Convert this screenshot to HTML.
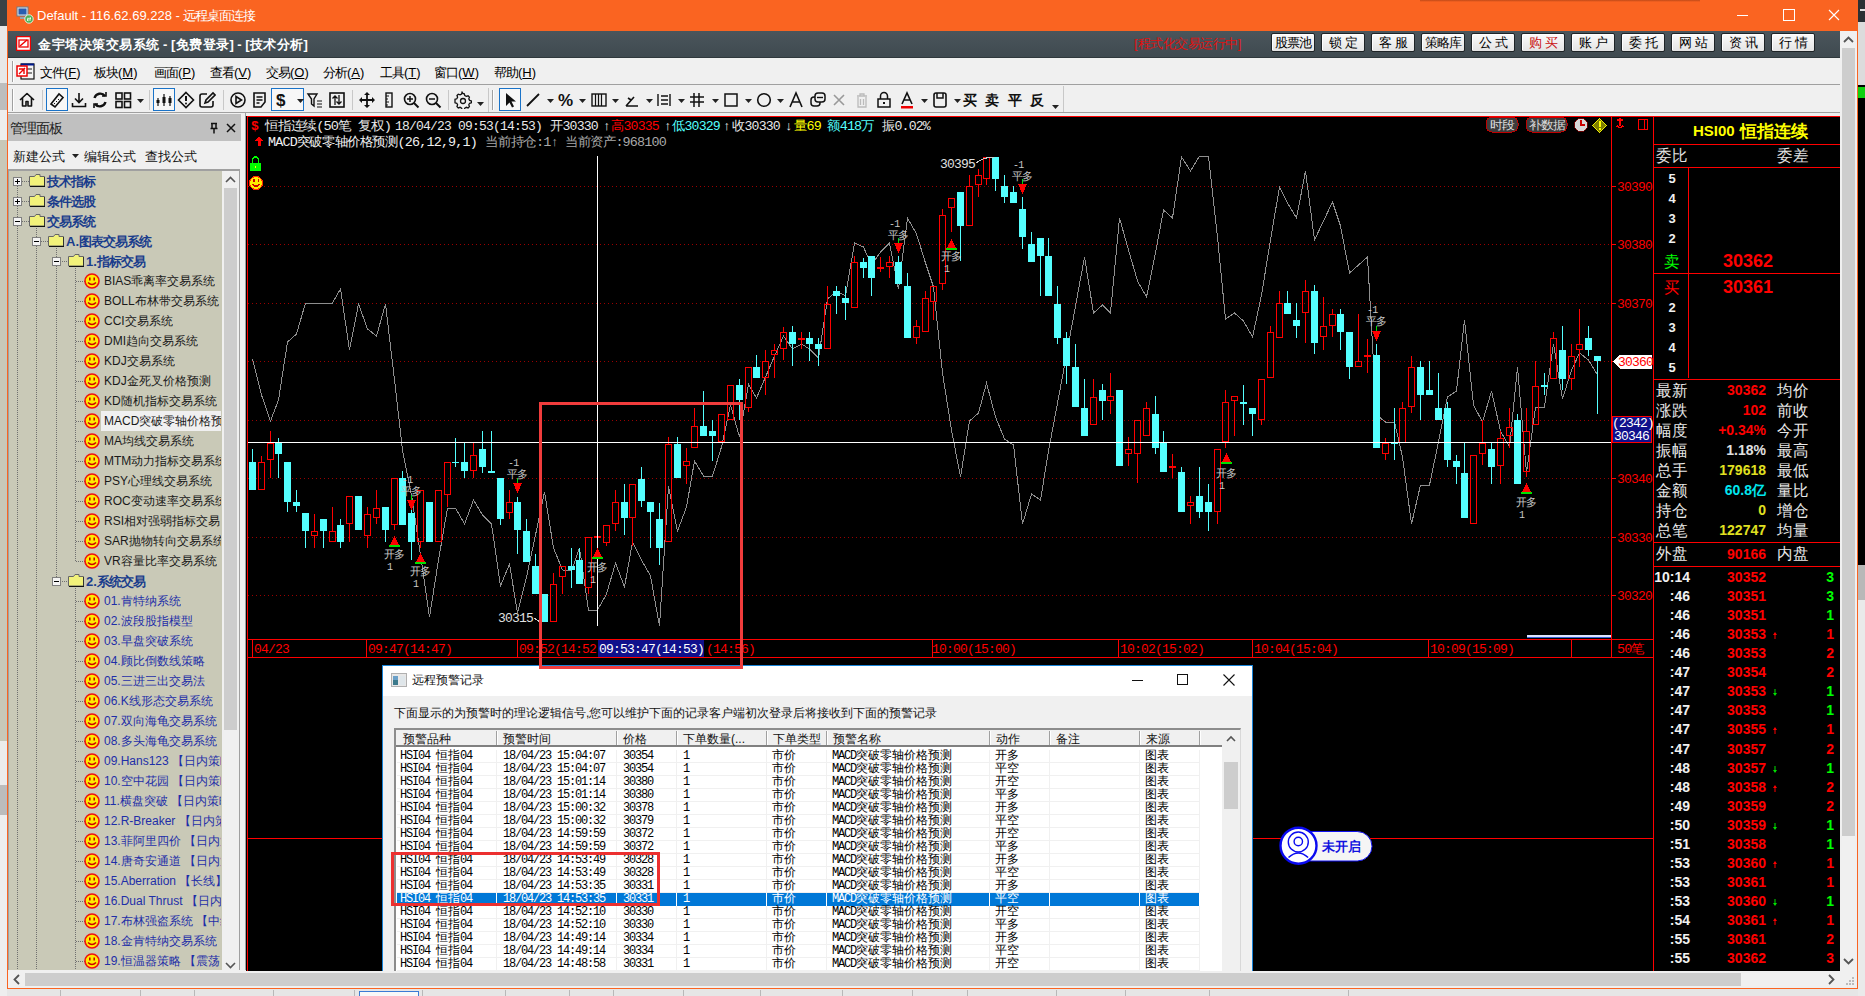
<!DOCTYPE html><html><head><meta charset="utf-8"><style>
html,body{margin:0;padding:0;}
body{width:1865px;height:996px;overflow:hidden;position:relative;background:#f0f0f0;font-family:"Liberation Sans",sans-serif;}
.a{position:absolute;}
.t{white-space:nowrap;}
.c{display:inline-block;text-align:center;letter-spacing:0;}
svg text{font-family:"Liberation Mono",monospace;}
</style></head><body>
<div class="a" style="left:0px;top:0px;width:7px;height:26px;background:#3a4246;"></div>
<div class="a" style="left:0px;top:26px;width:7px;height:57px;background:#e8e8e8;"></div>
<div class="a" style="left:0px;top:83px;width:7px;height:27px;background:#bdbdbd;"></div>
<div class="a" style="left:0px;top:110px;width:7px;height:30px;background:#eeeeee;"></div>
<div class="a" style="left:0px;top:140px;width:7px;height:601px;background:#c8c8b8;"></div>
<div class="a" style="left:0px;top:741px;width:7px;height:44px;background:#ececec;"></div>
<div class="a" style="left:0px;top:785px;width:7px;height:30px;background:#bcbcbc;"></div>
<div class="a" style="left:0px;top:815px;width:7px;height:181px;background:#eeeeee;"></div>
<div class="a" style="left:1858px;top:0px;width:7px;height:22px;background:#2a3034;"></div>
<div class="a" style="left:1860px;top:9px;width:5px;height:2px;background:#e0e0e0;"></div>
<div class="a" style="left:1858px;top:22px;width:7px;height:63px;background:#dcdcdc;"></div>
<div class="a" style="left:1858px;top:85px;width:7px;height:480px;background:#000;"></div>
<div class="a" style="left:1858px;top:87px;width:7px;height:11px;background:#10d010;"></div>
<div class="a" style="left:1858px;top:565px;width:7px;height:35px;background:#b8b8b8;"></div>
<div class="a" style="left:1858px;top:600px;width:7px;height:396px;background:#eaeaea;"></div>
<div class="a" style="left:7px;top:0px;width:1851px;height:31px;background:#fa6421;"></div>
<div class="a" style="left:7px;top:31px;width:1px;height:958px;background:#fa6421;"></div>
<div class="a" style="left:1857px;top:31px;width:1px;height:958px;background:#fa6421;"></div>
<div class="a" style="left:7px;top:988px;width:1851px;height:1px;background:#fa6421;"></div>
<div class="a" style="left:7px;top:989px;width:1851px;height:7px;background:#e6e6e6;"></div>
<div class="a" style="left:8px;top:31px;width:1832px;height:27px;background:linear-gradient(#4b555b,#3f4a50);border-bottom:1px solid #2f383c;box-sizing:border-box"></div>
<div class="a" style="left:8px;top:58px;width:1832px;height:27px;background:#f0f0f0;"></div>
<div class="a" style="left:8px;top:84px;width:1832px;height:1px;background:#a0a0a0;"></div>
<div class="a" style="left:8px;top:85px;width:1832px;height:28px;background:#f0f0f0;"></div>
<div class="a" style="left:8px;top:112px;width:1832px;height:1px;background:#a0a0a0;"></div>
<div class="a" style="left:8px;top:113px;width:238px;height:857px;background:#f0f0f0;"></div>
<div class="a" style="left:8px;top:114px;width:233px;height:27px;background:#c0c0c0;"></div>
<div class="a" style="left:8px;top:169px;width:232px;height:801px;background:#a0a0a0;"></div>
<div class="a" style="left:9px;top:171px;width:213px;height:799px;background:#c9c9b7;"></div>
<div class="a" style="left:222px;top:171px;width:17px;height:799px;background:#f0f0f0;"></div>
<div class="a" style="left:224px;top:188px;width:13px;height:540px;background:#cdcdcd;"></div>
<div class="a" style="left:246px;top:116px;width:1594px;height:855px;background:#000;"></div>
<div class="a" style="left:1840px;top:31px;width:17px;height:940px;background:#f0f0f0;"></div>
<div class="a" style="left:1842px;top:48px;width:13px;height:788px;background:#cdcdcd;"></div>
<div class="a" style="left:8px;top:971px;width:1849px;height:17px;background:#f0f0f0;"></div>
<div class="a" style="left:25px;top:973px;width:1716px;height:13px;background:#cdcdcd;"></div>
<svg class="a" style="left:16px;top:6px" width="18" height="18" viewBox="0 0 18 18">
<rect x="1" y="1" width="11" height="9" fill="#dfe6ee" stroke="#6d7c8a"/><rect x="2.5" y="2.5" width="8" height="6" fill="#2a5db0"/>
<rect x="4" y="11" width="6" height="2" fill="#9aa4ad"/>
<circle cx="13" cy="13" r="4.2" fill="#4caf50" stroke="#fff" stroke-width="0.8"/><path d="M11 12.3h4M13.8 11.3l1.2 1-1.2 1M15 14h-4M12.2 13l-1.2 1 1.2 1" stroke="#fff" stroke-width="0.8" fill="none"/>
</svg>
<div class="a t" style="top:6.5px;height:17px;line-height:17px;font-size:13px;color:#fff;font-weight:normal;font-family:'Liberation Sans',sans-serif;left:37px;">Default - 116.62.69.228 - <span class="c" style="width:12px">远</span><span class="c" style="width:12px">程</span><span class="c" style="width:12px">桌</span><span class="c" style="width:12px">面</span><span class="c" style="width:12px">连</span><span class="c" style="width:12px">接</span></div>
<div class="a" style="left:1737px;top:15px;width:11px;height:1px;background:#fff"></div>
<div class="a" style="left:1783px;top:9px;width:10px;height:10px;border:1px solid #fff"></div>
<svg class="a" style="left:1828px;top:9px" width="12" height="12" viewBox="0 0 12 12"><path d="M1 1L11 11M11 1L1 11" stroke="#fff" stroke-width="1.1"/></svg>
<div class="a" style="left:1420px;top:0;width:280px;height:2px;background:linear-gradient(#c04a18,#fa6421)"></div>
<svg class="a" style="left:16px;top:36px" width="15" height="15" viewBox="0 0 15 15"><rect x="0.5" y="0.5" width="14" height="14" fill="#fff" stroke="#e00" stroke-width="1.5"/><rect x="3" y="4" width="9" height="7" fill="none" stroke="#e00" stroke-width="1.3"/><path d="M4 10L11 4" stroke="#e00" stroke-width="1.5"/></svg>
<div class="a t" style="top:35.5px;height:17px;line-height:17px;font-size:13px;color:#fff;font-weight:bold;font-family:'Liberation Sans',sans-serif;left:38px;"><span class="c" style="width:13.5px">金</span><span class="c" style="width:13.5px">宇</span><span class="c" style="width:13.5px">塔</span><span class="c" style="width:13.5px">决</span><span class="c" style="width:13.5px">策</span><span class="c" style="width:13.5px">交</span><span class="c" style="width:13.5px">易</span><span class="c" style="width:13.5px">系</span><span class="c" style="width:13.5px">统</span> - [<span class="c" style="width:13.5px">免</span><span class="c" style="width:13.5px">费</span><span class="c" style="width:13.5px">登</span><span class="c" style="width:13.5px">录</span>] - [<span class="c" style="width:13.5px">技</span><span class="c" style="width:13.5px">术</span><span class="c" style="width:13.5px">分</span><span class="c" style="width:13.5px">析</span>]</div>
<div class="a t" style="top:34.5px;height:17px;line-height:17px;font-size:13px;color:#e01010;font-weight:normal;font-family:'Liberation Sans',sans-serif;left:1134px;">[<span class="c" style="width:12.5px">程</span><span class="c" style="width:12.5px">式</span><span class="c" style="width:12.5px">化</span><span class="c" style="width:12.5px">交</span><span class="c" style="width:12.5px">易</span><span class="c" style="width:12.5px">运</span><span class="c" style="width:12.5px">行</span><span class="c" style="width:12.5px">中</span>]</div>
<div class="a t" style="left:1271px;top:33px;width:44px;height:19px;box-sizing:border-box;background:linear-gradient(#fbfbfb,#e4e4e4);border:1px solid #1e2326;border-radius:2px;box-shadow:inset 1px 1px 0 #fff;text-align:center;line-height:17px;font-size:13px;color:#000;font-family:'Liberation Sans',sans-serif"><span class="c" style="width:12px">股</span><span class="c" style="width:12px">票</span><span class="c" style="width:12px">池</span></div>
<div class="a t" style="left:1321px;top:33px;width:44px;height:19px;box-sizing:border-box;background:linear-gradient(#fbfbfb,#e4e4e4);border:1px solid #1e2326;border-radius:2px;box-shadow:inset 1px 1px 0 #fff;text-align:center;line-height:17px;font-size:13px;color:#000;font-family:'Liberation Sans',sans-serif"><span class="c" style="width:12px">锁</span> <span class="c" style="width:12px">定</span></div>
<div class="a t" style="left:1371px;top:33px;width:44px;height:19px;box-sizing:border-box;background:linear-gradient(#fbfbfb,#e4e4e4);border:1px solid #1e2326;border-radius:2px;box-shadow:inset 1px 1px 0 #fff;text-align:center;line-height:17px;font-size:13px;color:#000;font-family:'Liberation Sans',sans-serif"><span class="c" style="width:12px">客</span> <span class="c" style="width:12px">服</span></div>
<div class="a t" style="left:1421px;top:33px;width:44px;height:19px;box-sizing:border-box;background:linear-gradient(#fbfbfb,#e4e4e4);border:1px solid #1e2326;border-radius:2px;box-shadow:inset 1px 1px 0 #fff;text-align:center;line-height:17px;font-size:13px;color:#000;font-family:'Liberation Sans',sans-serif"><span class="c" style="width:12px">策</span><span class="c" style="width:12px">略</span><span class="c" style="width:12px">库</span></div>
<div class="a t" style="left:1471px;top:33px;width:44px;height:19px;box-sizing:border-box;background:linear-gradient(#fbfbfb,#e4e4e4);border:1px solid #1e2326;border-radius:2px;box-shadow:inset 1px 1px 0 #fff;text-align:center;line-height:17px;font-size:13px;color:#000;font-family:'Liberation Sans',sans-serif"><span class="c" style="width:12px">公</span> <span class="c" style="width:12px">式</span></div>
<div class="a t" style="left:1521px;top:33px;width:44px;height:19px;box-sizing:border-box;background:linear-gradient(#fbfbfb,#e4e4e4);border:1px solid #1e2326;border-radius:2px;box-shadow:inset 1px 1px 0 #fff;text-align:center;line-height:17px;font-size:13px;color:#c81010;font-family:'Liberation Sans',sans-serif"><span class="c" style="width:12px">购</span> <span class="c" style="width:12px">买</span></div>
<div class="a t" style="left:1571px;top:33px;width:44px;height:19px;box-sizing:border-box;background:linear-gradient(#fbfbfb,#e4e4e4);border:1px solid #1e2326;border-radius:2px;box-shadow:inset 1px 1px 0 #fff;text-align:center;line-height:17px;font-size:13px;color:#000;font-family:'Liberation Sans',sans-serif"><span class="c" style="width:12px">账</span> <span class="c" style="width:12px">户</span></div>
<div class="a t" style="left:1621px;top:33px;width:44px;height:19px;box-sizing:border-box;background:linear-gradient(#fbfbfb,#e4e4e4);border:1px solid #1e2326;border-radius:2px;box-shadow:inset 1px 1px 0 #fff;text-align:center;line-height:17px;font-size:13px;color:#000;font-family:'Liberation Sans',sans-serif"><span class="c" style="width:12px">委</span> <span class="c" style="width:12px">托</span></div>
<div class="a t" style="left:1671px;top:33px;width:44px;height:19px;box-sizing:border-box;background:linear-gradient(#fbfbfb,#e4e4e4);border:1px solid #1e2326;border-radius:2px;box-shadow:inset 1px 1px 0 #fff;text-align:center;line-height:17px;font-size:13px;color:#000;font-family:'Liberation Sans',sans-serif"><span class="c" style="width:12px">网</span> <span class="c" style="width:12px">站</span></div>
<div class="a t" style="left:1721px;top:33px;width:44px;height:19px;box-sizing:border-box;background:linear-gradient(#fbfbfb,#e4e4e4);border:1px solid #1e2326;border-radius:2px;box-shadow:inset 1px 1px 0 #fff;text-align:center;line-height:17px;font-size:13px;color:#000;font-family:'Liberation Sans',sans-serif"><span class="c" style="width:12px">资</span> <span class="c" style="width:12px">讯</span></div>
<div class="a t" style="left:1771px;top:33px;width:44px;height:19px;box-sizing:border-box;background:linear-gradient(#fbfbfb,#e4e4e4);border:1px solid #1e2326;border-radius:2px;box-shadow:inset 1px 1px 0 #fff;text-align:center;line-height:17px;font-size:13px;color:#000;font-family:'Liberation Sans',sans-serif"><span class="c" style="width:12px">行</span> <span class="c" style="width:12px">情</span></div>
<div class="a" style="left:12px;top:61px;width:1px;height:21px;background:#a0a0a0;"></div>
<div class="a" style="left:13px;top:61px;width:1px;height:21px;background:#fff;"></div>
<svg class="a" style="left:16px;top:62px" width="20" height="19" viewBox="0 0 20 19"><rect x="5" y="2" width="13" height="15" fill="#f4f4f4" stroke="#111" stroke-width="1.2"/><rect x="5" y="1.5" width="13" height="2" fill="#001a8c"/><rect x="11" y="6" width="5" height="2" fill="#888"/><rect x="11" y="10" width="5" height="2" fill="#888"/><rect x="1" y="4" width="10" height="10" fill="#fff" stroke="#e00" stroke-width="1.5"/><path d="M3 12L9 6M3 7h5v5" stroke="#e00" stroke-width="1.4" fill="none"/></svg>
<div class="a t" style="top:63.5px;height:17px;line-height:17px;font-size:13px;color:#000;font-weight:normal;font-family:'Liberation Sans',sans-serif;left:40px;"><span class="c" style="width:12px">文</span><span class="c" style="width:12px">件</span>(<u>F</u>)</div>
<div class="a t" style="top:63.5px;height:17px;line-height:17px;font-size:13px;color:#000;font-weight:normal;font-family:'Liberation Sans',sans-serif;left:94px;"><span class="c" style="width:12px">板</span><span class="c" style="width:12px">块</span>(<u>M</u>)</div>
<div class="a t" style="top:63.5px;height:17px;line-height:17px;font-size:13px;color:#000;font-weight:normal;font-family:'Liberation Sans',sans-serif;left:154px;"><span class="c" style="width:12px">画</span><span class="c" style="width:12px">面</span>(<u>P</u>)</div>
<div class="a t" style="top:63.5px;height:17px;line-height:17px;font-size:13px;color:#000;font-weight:normal;font-family:'Liberation Sans',sans-serif;left:210px;"><span class="c" style="width:12px">查</span><span class="c" style="width:12px">看</span>(<u>V</u>)</div>
<div class="a t" style="top:63.5px;height:17px;line-height:17px;font-size:13px;color:#000;font-weight:normal;font-family:'Liberation Sans',sans-serif;left:266px;"><span class="c" style="width:12px">交</span><span class="c" style="width:12px">易</span>(<u>O</u>)</div>
<div class="a t" style="top:63.5px;height:17px;line-height:17px;font-size:13px;color:#000;font-weight:normal;font-family:'Liberation Sans',sans-serif;left:323px;"><span class="c" style="width:12px">分</span><span class="c" style="width:12px">析</span>(<u>A</u>)</div>
<div class="a t" style="top:63.5px;height:17px;line-height:17px;font-size:13px;color:#000;font-weight:normal;font-family:'Liberation Sans',sans-serif;left:380px;"><span class="c" style="width:12px">工</span><span class="c" style="width:12px">具</span>(<u>T</u>)</div>
<div class="a t" style="top:63.5px;height:17px;line-height:17px;font-size:13px;color:#000;font-weight:normal;font-family:'Liberation Sans',sans-serif;left:434px;"><span class="c" style="width:12px">窗</span><span class="c" style="width:12px">口</span>(<u>W</u>)</div>
<div class="a t" style="top:63.5px;height:17px;line-height:17px;font-size:13px;color:#000;font-weight:normal;font-family:'Liberation Sans',sans-serif;left:494px;"><span class="c" style="width:12px">帮</span><span class="c" style="width:12px">助</span>(<u>H</u>)</div>
<div class="a" style="left:12px;top:89px;width:1px;height:22px;background:#a0a0a0;"></div>
<div class="a" style="left:13px;top:89px;width:1px;height:22px;background:#fff;"></div>
<svg class="a" style="left:18.0px;top:91.0px" width="18" height="18" viewBox="0 0 18 18"><path d="M2 9L9 2.5L16 9M4.5 7v8h3.5v-4.5h2V15h3.5V7" stroke="#111" stroke-width="1.6" fill="none" stroke-linejoin="round"/></svg>
<div class="a" style="left:42px;top:90px;width:1px;height:20px;background:#c8c8c8;"></div>
<div class="a" style="left:46px;top:88px;width:22px;height:23px;box-sizing:border-box;border:1px solid #1a73c8;background:#f7f7f7"></div>
<svg class="a" style="left:48.0px;top:91.0px" width="18" height="18" viewBox="0 0 18 18"><path d="M3 13L11 3l4 3.5L7 16z" stroke="#111" stroke-width="1.6" fill="none"/><path d="M6 12l1 1M8 10l1 1M10 8l1 1" stroke="#111" stroke-width="1"/></svg>
<svg class="a" style="left:70.0px;top:91.0px" width="18" height="18" viewBox="0 0 18 18"><path d="M9 2v9M5 7.5l4 4 4-4M2.5 12v3.5h13V12" stroke="#111" stroke-width="1.6" fill="none"/></svg>
<svg class="a" style="left:91.0px;top:91.0px" width="18" height="18" viewBox="0 0 18 18"><path d="M14 5A6 6 0 0 0 3.5 7M4 13A6 6 0 0 0 14.5 11" stroke="#111" stroke-width="2.4" fill="none"/><path d="M11 5h4V1M7 13H3v4" stroke="#111" stroke-width="1.6" fill="none"/></svg>
<svg class="a" style="left:114.0px;top:91.0px" width="18" height="18" viewBox="0 0 18 18"><rect x="2" y="2" width="6" height="6" stroke="#111" stroke-width="1.6" fill="none"/><rect x="10.5" y="2" width="6" height="6" stroke="#111" stroke-width="1.6" fill="none"/><rect x="2" y="10.5" width="6" height="6" stroke="#111" stroke-width="1.6" fill="none"/><rect x="10.5" y="10.5" width="6" height="6" stroke="#111" stroke-width="1.6" fill="none"/></svg>
<svg class="a" style="left:137px;top:99px" width="7" height="4"><path d="M0 0h7L3.5 4z" fill="#222"/></svg>
<div class="a" style="left:149px;top:90px;width:1px;height:20px;background:#c8c8c8;"></div>
<div class="a" style="left:153px;top:88px;width:22px;height:23px;box-sizing:border-box;border:1px solid #1a73c8;background:#f7f7f7"></div>
<svg class="a" style="left:155.0px;top:91.0px" width="18" height="18" viewBox="0 0 18 18"><path d="M3 7v8M9 3v12M15 5v10" stroke="#111" stroke-width="1.2"/><rect x="1.5" y="9" width="3" height="3" fill="#111"/><rect x="7.5" y="6" width="3" height="6" fill="#111"/><rect x="13.5" y="7" width="3" height="5" fill="#111"/></svg>
<svg class="a" style="left:177.0px;top:91.0px" width="18" height="18" viewBox="0 0 18 18"><path d="M9 1.5L16.5 9L9 16.5L1.5 9z" stroke="#111" stroke-width="1.6" fill="none"/><path d="M9 5v5" stroke="#111" stroke-width="2"/><circle cx="9" cy="12.5" r="1" fill="#111"/></svg>
<svg class="a" style="left:198.0px;top:91.0px" width="18" height="18" viewBox="0 0 18 18"><path d="M9 3H4a2 2 0 0 0-2 2v9a2 2 0 0 0 2 2h9a2 2 0 0 0 2-2v-4" stroke="#111" stroke-width="1.6" fill="none"/><path d="M7 12l1-3 7-7 2 2-7 7z" stroke="#111" stroke-width="1.6" fill="none"/></svg>
<div class="a" style="left:223px;top:90px;width:1px;height:20px;background:#c8c8c8;"></div>
<svg class="a" style="left:229.0px;top:91.0px" width="18" height="18" viewBox="0 0 18 18"><circle cx="9" cy="9" r="7" stroke="#111" stroke-width="1.6" fill="none"/><path d="M7 5.5v7l5.5-3.5z" stroke="#111" stroke-width="1.6" fill="none"/></svg>
<svg class="a" style="left:251.0px;top:91.0px" width="18" height="18" viewBox="0 0 18 18"><path d="M3 2h11v9l-4 5H3z" stroke="#111" stroke-width="1.6" fill="none"/><path d="M5.5 6h6M5.5 9h6M5.5 12h3" stroke="#111" stroke-width="1.3"/></svg>
<div class="a" style="left:271px;top:88px;width:33px;height:23px;box-sizing:border-box;border:1px solid #1a73c8;background:#f7f7f7"></div>
<div class="a t" style="top:89.5px;height:21px;line-height:21px;font-size:17px;color:#111;font-weight:bold;font-family:'Liberation Sans',sans-serif;left:276px;">$</div>
<svg class="a" style="left:297px;top:99px" width="7" height="4"><path d="M0 0h7L3.5 4z" fill="#222"/></svg>
<svg class="a" style="left:306.0px;top:91.0px" width="18" height="18" viewBox="0 0 18 18"><path d="M2 3h9L8 8v7L5.5 13V8z" stroke="#111" stroke-width="1.4" fill="none"/><path d="M11 10h5M11 13h5M11 16h5" stroke="#111" stroke-width="1.2"/></svg>
<svg class="a" style="left:328.0px;top:91.0px" width="18" height="18" viewBox="0 0 18 18"><rect x="2" y="2" width="14" height="14" stroke="#111" stroke-width="1.6" fill="none"/><path d="M7 5v9M4.5 7.5L7 5l2.5 2.5M11 4v9M8.5 10.5L11 13l2.5-2.5" stroke="#111" stroke-width="1.3" fill="none"/></svg>
<div class="a" style="left:352px;top:90px;width:1px;height:20px;background:#c8c8c8;"></div>
<svg class="a" style="left:358.0px;top:91.0px" width="18" height="18" viewBox="0 0 18 18"><path d="M9 1l3 3H6zM9 17l3-3H6zM1 9l3-3v6zM17 9l-3-3v6z" fill="#111"/><path d="M9 3v12M3 9h12" stroke="#111" stroke-width="1.8"/></svg>
<svg class="a" style="left:380.0px;top:91.0px" width="18" height="18" viewBox="0 0 18 18"><rect x="6" y="2" width="6" height="14" stroke="#111" stroke-width="1.4" fill="none"/><path d="M6 5h3M6 8h2M6 11h3M6 14h2" stroke="#111" stroke-width="1"/></svg>
<svg class="a" style="left:402.0px;top:91.0px" width="18" height="18" viewBox="0 0 18 18"><circle cx="8" cy="8" r="5.5" stroke="#111" stroke-width="1.6" fill="none"/><path d="M12 12l4.5 4.5" stroke="#111" stroke-width="2"/><path d="M5 8h6M8 5v6" stroke="#111" stroke-width="1.5"/></svg>
<svg class="a" style="left:424.0px;top:91.0px" width="18" height="18" viewBox="0 0 18 18"><circle cx="8" cy="8" r="5.5" stroke="#111" stroke-width="1.6" fill="none"/><path d="M12 12l4.5 4.5" stroke="#111" stroke-width="2"/><path d="M5 8h6" stroke="#111" stroke-width="1.5"/></svg>
<div class="a" style="left:448px;top:90px;width:1px;height:20px;background:#c8c8c8;"></div>
<svg class="a" style="left:454.0px;top:91.0px" width="18" height="18" viewBox="0 0 18 18"><path d="M9 2.5l1.3 0.3 0.5 1.8 1.5 0.8 1.8-0.6 1.3 1.3-0.6 1.8 0.8 1.5 1.8 0.5v1.9l-1.8 0.5-0.8 1.5 0.6 1.8-1.3 1.3-1.8-0.6-1.5 0.8-0.5 1.8H8.1l-0.5-1.8-1.5-0.8-1.8 0.6-1.3-1.3 0.6-1.8-0.8-1.5-1.8-0.5V8.3l1.8-0.5 0.8-1.5-0.6-1.8 1.3-1.3 1.8 0.6 1.5-0.8 0.5-1.8z" stroke="#111" stroke-width="1.3" fill="none"/><circle cx="9" cy="10" r="2.5" stroke="#111" stroke-width="1.3" fill="none"/></svg>
<svg class="a" style="left:477px;top:102px" width="7" height="4"><path d="M0 0h7L3.5 4z" fill="#222"/></svg>
<div class="a" style="left:488px;top:88px;width:1px;height:24px;background:#c8c8c8;"></div>
<div class="a" style="left:492px;top:90px;width:1px;height:20px;background:#a0a0a0;"></div>
<div class="a" style="left:493px;top:90px;width:1px;height:20px;background:#fff;"></div>
<div class="a" style="left:499px;top:88px;width:22px;height:23px;box-sizing:border-box;border:1px solid #1a73c8;background:#f7f7f7"></div>
<svg class="a" style="left:501.0px;top:91.0px" width="18" height="18" viewBox="0 0 18 18"><path d="M5 2v13l3.5-3.5 2.5 5 2-1-2.5-5H15z" fill="#111"/></svg>
<svg class="a" style="left:524.0px;top:91.0px" width="18" height="18" viewBox="0 0 18 18"><path d="M3 15L15 3" stroke="#111" stroke-width="1.8"/></svg>
<svg class="a" style="left:547px;top:99px" width="7" height="4"><path d="M0 0h7L3.5 4z" fill="#222"/></svg>
<div class="a t" style="top:89.5px;height:21px;line-height:21px;font-size:17px;color:#111;font-weight:bold;font-family:'Liberation Sans',sans-serif;left:558px;">%</div>
<svg class="a" style="left:579px;top:99px" width="7" height="4"><path d="M0 0h7L3.5 4z" fill="#222"/></svg>
<svg class="a" style="left:590.0px;top:91.0px" width="18" height="18" viewBox="0 0 18 18"><rect x="2" y="3" width="14" height="12" stroke="#111" stroke-width="1.4" fill="none"/><path d="M5.5 3v12M8.5 3v12M11.5 3v12" stroke="#111" stroke-width="1.2"/></svg>
<svg class="a" style="left:612px;top:99px" width="7" height="4"><path d="M0 0h7L3.5 4z" fill="#222"/></svg>
<svg class="a" style="left:623.0px;top:91.0px" width="18" height="18" viewBox="0 0 18 18"><path d="M3 15h12M3 15l8-9M8 9l-3-2" stroke="#111" stroke-width="1.6" fill="none"/></svg>
<svg class="a" style="left:646px;top:99px" width="7" height="4"><path d="M0 0h7L3.5 4z" fill="#222"/></svg>
<svg class="a" style="left:655.0px;top:91.0px" width="18" height="18" viewBox="0 0 18 18"><path d="M3 3v12M15 3v12M6 5h7M6 9h7M6 13h7" stroke="#111" stroke-width="1.4"/></svg>
<svg class="a" style="left:678px;top:99px" width="7" height="4"><path d="M0 0h7L3.5 4z" fill="#222"/></svg>
<svg class="a" style="left:688.0px;top:91.0px" width="18" height="18" viewBox="0 0 18 18"><path d="M6 2v14M11 2v14M2 6h14M2 11h14" stroke="#111" stroke-width="1.5"/></svg>
<svg class="a" style="left:712px;top:99px" width="7" height="4"><path d="M0 0h7L3.5 4z" fill="#222"/></svg>
<svg class="a" style="left:722.0px;top:91.0px" width="18" height="18" viewBox="0 0 18 18"><rect x="3" y="3" width="12" height="12" stroke="#111" stroke-width="1.5" fill="none"/></svg>
<svg class="a" style="left:745px;top:99px" width="7" height="4"><path d="M0 0h7L3.5 4z" fill="#222"/></svg>
<svg class="a" style="left:755.0px;top:91.0px" width="18" height="18" viewBox="0 0 18 18"><circle cx="9" cy="9" r="6.3" stroke="#111" stroke-width="1.6" fill="none"/></svg>
<svg class="a" style="left:777px;top:99px" width="7" height="4"><path d="M0 0h7L3.5 4z" fill="#222"/></svg>
<svg class="a" style="left:787.0px;top:91.0px" width="18" height="18" viewBox="0 0 18 18"><path d="M3 16L9 2l6 14M5.5 11h7" stroke="#111" stroke-width="1.6" fill="none"/></svg>
<svg class="a" style="left:809.0px;top:91.0px" width="18" height="18" viewBox="0 0 18 18"><rect x="2" y="6" width="9" height="9" rx="3" stroke="#111" stroke-width="1.5" fill="none"/><rect x="6" y="2" width="10" height="9" rx="3" stroke="#111" stroke-width="1.5" fill="#f0f0f0"/><path d="M8 6.5h6" stroke="#111" stroke-width="1.4"/></svg>
<svg class="a" style="left:830.0px;top:91.0px" width="18" height="18" viewBox="0 0 18 18"><path d="M4 4l10 10M14 4L4 14" stroke="#999" stroke-width="1.6"/></svg>
<svg class="a" style="left:853.0px;top:91.0px" width="18" height="18" viewBox="0 0 18 18"><path d="M4 5h10M7 5V3h4v2M5 6v10h8V6M7.5 8v6M10.5 8v6" stroke="#bbb" stroke-width="1.3" fill="none"/></svg>
<svg class="a" style="left:875.0px;top:91.0px" width="18" height="18" viewBox="0 0 18 18"><rect x="3" y="8" width="12" height="8" stroke="#111" stroke-width="1.5" fill="none"/><path d="M5.5 8V5a3.5 3.5 0 0 1 7 0v3" stroke="#111" stroke-width="1.5" fill="none"/><rect x="8" y="11" width="2" height="2" fill="#111"/></svg>
<svg class="a" style="left:898.0px;top:91.0px" width="18" height="18" viewBox="0 0 18 18"><path d="M4 13L9 2l5 11M6 9h6" stroke="#111" stroke-width="1.6" fill="none"/><rect x="3" y="15" width="12" height="2.5" fill="#e00"/></svg>
<svg class="a" style="left:921px;top:99px" width="7" height="4"><path d="M0 0h7L3.5 4z" fill="#222"/></svg>
<svg class="a" style="left:931.0px;top:91.0px" width="18" height="18" viewBox="0 0 18 18"><rect x="3" y="2" width="12" height="14" rx="2" stroke="#111" stroke-width="1.6" fill="none"/><path d="M6 2v5h6V2" stroke="#111" stroke-width="1.5" fill="none"/></svg>
<svg class="a" style="left:954px;top:99px" width="7" height="4"><path d="M0 0h7L3.5 4z" fill="#222"/></svg>
<div class="a t" style="top:91.0px;height:18px;line-height:18px;font-size:14px;color:#111;font-weight:bold;font-family:'Liberation Sans',sans-serif;left:963px;"><span class="c" style="width:14px">买</span></div>
<div class="a t" style="top:91.0px;height:18px;line-height:18px;font-size:14px;color:#111;font-weight:bold;font-family:'Liberation Sans',sans-serif;left:985px;"><span class="c" style="width:14px">卖</span></div>
<div class="a t" style="top:91.0px;height:18px;line-height:18px;font-size:14px;color:#111;font-weight:bold;font-family:'Liberation Sans',sans-serif;left:1008px;"><span class="c" style="width:14px">平</span></div>
<div class="a t" style="top:91.0px;height:18px;line-height:18px;font-size:14px;color:#111;font-weight:bold;font-family:'Liberation Sans',sans-serif;left:1030px;"><span class="c" style="width:14px">反</span></div>
<svg class="a" style="left:1052px;top:103px" width="7" height="6"><path d="M0 1h7M0 2h7L3.5 6z" fill="#222"/></svg>
<div class="a" style="left:1063px;top:86px;width:1px;height:26px;background:#c8c8c8;"></div>
<div class="a t" style="top:119.0px;height:18px;line-height:18px;font-size:14px;color:#222;font-weight:normal;font-family:'Liberation Sans',sans-serif;left:10px;"><span class="c" style="width:13px">管</span><span class="c" style="width:13px">理</span><span class="c" style="width:13px">面</span><span class="c" style="width:13px">板</span></div>
<svg class="a" style="left:208px;top:122px" width="12" height="12" viewBox="0 0 12 12"><path d="M3 1.5h6M4 1.5v5M8 1.5v5M2.5 6.5h7M6 6.5v5" stroke="#111" stroke-width="1.5"/></svg>
<svg class="a" style="left:226px;top:123px" width="10" height="10" viewBox="0 0 10 10"><path d="M1 1l8 8M9 1L1 9" stroke="#111" stroke-width="1.5"/></svg>
<div class="a t" style="top:147.5px;height:17px;line-height:17px;font-size:13px;color:#111;font-weight:normal;font-family:'Liberation Sans',sans-serif;left:13px;"><span class="c" style="width:13px">新</span><span class="c" style="width:13px">建</span><span class="c" style="width:13px">公</span><span class="c" style="width:13px">式</span></div>
<svg class="a" style="left:72px;top:154px" width="7" height="4"><path d="M0 0h7L3.5 4z" fill="#222"/></svg>
<div class="a t" style="top:147.5px;height:17px;line-height:17px;font-size:13px;color:#111;font-weight:normal;font-family:'Liberation Sans',sans-serif;left:84px;"><span class="c" style="width:13px">编</span><span class="c" style="width:13px">辑</span><span class="c" style="width:13px">公</span><span class="c" style="width:13px">式</span></div>
<div class="a t" style="top:147.5px;height:17px;line-height:17px;font-size:13px;color:#111;font-weight:normal;font-family:'Liberation Sans',sans-serif;left:145px;"><span class="c" style="width:13px">查</span><span class="c" style="width:13px">找</span><span class="c" style="width:13px">公</span><span class="c" style="width:13px">式</span></div>
<div class="a" style="left:17px;top:186px;width:1px;height:784px;background:repeating-linear-gradient(180deg,#707070 0 1px,transparent 1px 2px)"></div>
<div class="a" style="left:22px;top:181px;width:7px;height:1px;background:repeating-linear-gradient(90deg,#707070 0 1px,transparent 1px 2px)"></div>
<div class="a" style="left:13px;top:177px;width:9px;height:9px;box-sizing:border-box;border:1px solid #808080;background:#f4f4f4"></div><div class="a" style="left:15px;top:181px;width:5px;height:1px;background:#000"></div><div class="a" style="left:17px;top:179px;width:1px;height:5px;background:#000"></div>
<svg class="a" style="left:29px;top:174px" width="16" height="13" viewBox="0 0 16 13"><path d="M0.5 2.5h5l1.5-2h4v2h4.5v9.5h-15z" fill="#f2f27a" stroke="#666" stroke-width="1"/><path d="M1 12.5h15V3" stroke="#111" stroke-width="1.2" fill="none"/></svg>
<div class="a t" style="top:172.5px;height:17px;line-height:17px;font-size:13px;color:#1a3d8c;font-weight:bold;font-family:'Liberation Sans',sans-serif;left:47px;"><span class="c" style="width:12px">技</span><span class="c" style="width:12px">术</span><span class="c" style="width:12px">指</span><span class="c" style="width:12px">标</span></div>
<div class="a" style="left:22px;top:201px;width:7px;height:1px;background:repeating-linear-gradient(90deg,#707070 0 1px,transparent 1px 2px)"></div>
<div class="a" style="left:13px;top:197px;width:9px;height:9px;box-sizing:border-box;border:1px solid #808080;background:#f4f4f4"></div><div class="a" style="left:15px;top:201px;width:5px;height:1px;background:#000"></div><div class="a" style="left:17px;top:199px;width:1px;height:5px;background:#000"></div>
<svg class="a" style="left:29px;top:194px" width="16" height="13" viewBox="0 0 16 13"><path d="M0.5 2.5h5l1.5-2h4v2h4.5v9.5h-15z" fill="#f2f27a" stroke="#666" stroke-width="1"/><path d="M1 12.5h15V3" stroke="#111" stroke-width="1.2" fill="none"/></svg>
<div class="a t" style="top:192.5px;height:17px;line-height:17px;font-size:13px;color:#1a3d8c;font-weight:bold;font-family:'Liberation Sans',sans-serif;left:47px;"><span class="c" style="width:12px">条</span><span class="c" style="width:12px">件</span><span class="c" style="width:12px">选</span><span class="c" style="width:12px">股</span></div>
<div class="a" style="left:22px;top:221px;width:7px;height:1px;background:repeating-linear-gradient(90deg,#707070 0 1px,transparent 1px 2px)"></div>
<div class="a" style="left:13px;top:217px;width:9px;height:9px;box-sizing:border-box;border:1px solid #808080;background:#f4f4f4"></div><div class="a" style="left:15px;top:221px;width:5px;height:1px;background:#000"></div>
<svg class="a" style="left:29px;top:214px" width="16" height="13" viewBox="0 0 16 13"><path d="M0.5 2.5h5l1.5-2h4v2h4.5v9.5h-15z" fill="#f2f27a" stroke="#666" stroke-width="1"/><path d="M1 12.5h15V3" stroke="#111" stroke-width="1.2" fill="none"/></svg>
<div class="a t" style="top:212.5px;height:17px;line-height:17px;font-size:13px;color:#1a3d8c;font-weight:bold;font-family:'Liberation Sans',sans-serif;left:47px;"><span class="c" style="width:12px">交</span><span class="c" style="width:12px">易</span><span class="c" style="width:12px">系</span><span class="c" style="width:12px">统</span></div>
<div class="a" style="left:36px;top:228px;width:1px;height:742px;background:repeating-linear-gradient(180deg,#707070 0 1px,transparent 1px 2px)"></div>
<div class="a" style="left:41px;top:241px;width:7px;height:1px;background:repeating-linear-gradient(90deg,#707070 0 1px,transparent 1px 2px)"></div>
<div class="a" style="left:32px;top:237px;width:9px;height:9px;box-sizing:border-box;border:1px solid #808080;background:#f4f4f4"></div><div class="a" style="left:34px;top:241px;width:5px;height:1px;background:#000"></div>
<svg class="a" style="left:48px;top:234px" width="16" height="13" viewBox="0 0 16 13"><path d="M0.5 2.5h5l1.5-2h4v2h4.5v9.5h-15z" fill="#f2f27a" stroke="#666" stroke-width="1"/><path d="M1 12.5h15V3" stroke="#111" stroke-width="1.2" fill="none"/></svg>
<div class="a t" style="top:232.5px;height:17px;line-height:17px;font-size:13px;color:#1a3d8c;font-weight:bold;font-family:'Liberation Sans',sans-serif;left:66px;">A.<span class="c" style="width:12px">图</span><span class="c" style="width:12px">表</span><span class="c" style="width:12px">交</span><span class="c" style="width:12px">易</span><span class="c" style="width:12px">系</span><span class="c" style="width:12px">统</span></div>
<div class="a" style="left:56px;top:248px;width:1px;height:333px;background:repeating-linear-gradient(180deg,#707070 0 1px,transparent 1px 2px)"></div>
<div class="a" style="left:60px;top:261px;width:8px;height:1px;background:repeating-linear-gradient(90deg,#707070 0 1px,transparent 1px 2px)"></div>
<div class="a" style="left:52px;top:257px;width:9px;height:9px;box-sizing:border-box;border:1px solid #808080;background:#f4f4f4"></div><div class="a" style="left:54px;top:261px;width:5px;height:1px;background:#000"></div>
<svg class="a" style="left:68px;top:254px" width="16" height="13" viewBox="0 0 16 13"><path d="M0.5 2.5h5l1.5-2h4v2h4.5v9.5h-15z" fill="#f2f27a" stroke="#666" stroke-width="1"/><path d="M1 12.5h15V3" stroke="#111" stroke-width="1.2" fill="none"/></svg>
<div class="a t" style="top:252.5px;height:17px;line-height:17px;font-size:13px;color:#1a3d8c;font-weight:bold;font-family:'Liberation Sans',sans-serif;left:86px;">1.<span class="c" style="width:12px">指</span><span class="c" style="width:12px">标</span><span class="c" style="width:12px">交</span><span class="c" style="width:12px">易</span></div>
<div class="a" style="left:75px;top:268px;width:1px;height:293px;background:repeating-linear-gradient(180deg,#707070 0 1px,transparent 1px 2px)"></div>
<div class="a" style="left:76px;top:281px;width:9px;height:1px;background:repeating-linear-gradient(90deg,#707070 0 1px,transparent 1px 2px)"></div>
<svg class="a" style="left:84px;top:273px" width="16" height="16" viewBox="0 0 16 16"><circle cx="8" cy="8" r="7" fill="#ffec00" stroke="#f01010" stroke-width="1.6"/><rect x="5" y="4.5" width="1.6" height="3" fill="#c00"/><rect x="9.4" y="4.5" width="1.6" height="3" fill="#c00"/><path d="M4 9.5Q8 13.5 12 9.5" stroke="#c00" stroke-width="1.5" fill="none"/></svg>
<div class="a t" style="top:273.0px;height:16px;line-height:16px;font-size:12px;color:#1a1a1a;font-weight:normal;font-family:'Liberation Sans',sans-serif;left:104px;max-width:117px;overflow:hidden">BIAS<span class="c" style="width:12px">乖</span><span class="c" style="width:12px">离</span><span class="c" style="width:12px">率</span><span class="c" style="width:12px">交</span><span class="c" style="width:12px">易</span><span class="c" style="width:12px">系</span><span class="c" style="width:12px">统</span></div>
<div class="a" style="left:76px;top:301px;width:9px;height:1px;background:repeating-linear-gradient(90deg,#707070 0 1px,transparent 1px 2px)"></div>
<svg class="a" style="left:84px;top:293px" width="16" height="16" viewBox="0 0 16 16"><circle cx="8" cy="8" r="7" fill="#ffec00" stroke="#f01010" stroke-width="1.6"/><rect x="5" y="4.5" width="1.6" height="3" fill="#c00"/><rect x="9.4" y="4.5" width="1.6" height="3" fill="#c00"/><path d="M4 9.5Q8 13.5 12 9.5" stroke="#c00" stroke-width="1.5" fill="none"/></svg>
<div class="a t" style="top:293.0px;height:16px;line-height:16px;font-size:12px;color:#1a1a1a;font-weight:normal;font-family:'Liberation Sans',sans-serif;left:104px;max-width:117px;overflow:hidden">BOLL<span class="c" style="width:12px">布</span><span class="c" style="width:12px">林</span><span class="c" style="width:12px">带</span><span class="c" style="width:12px">交</span><span class="c" style="width:12px">易</span><span class="c" style="width:12px">系</span><span class="c" style="width:12px">统</span></div>
<div class="a" style="left:76px;top:321px;width:9px;height:1px;background:repeating-linear-gradient(90deg,#707070 0 1px,transparent 1px 2px)"></div>
<svg class="a" style="left:84px;top:313px" width="16" height="16" viewBox="0 0 16 16"><circle cx="8" cy="8" r="7" fill="#ffec00" stroke="#f01010" stroke-width="1.6"/><rect x="5" y="4.5" width="1.6" height="3" fill="#c00"/><rect x="9.4" y="4.5" width="1.6" height="3" fill="#c00"/><path d="M4 9.5Q8 13.5 12 9.5" stroke="#c00" stroke-width="1.5" fill="none"/></svg>
<div class="a t" style="top:313.0px;height:16px;line-height:16px;font-size:12px;color:#1a1a1a;font-weight:normal;font-family:'Liberation Sans',sans-serif;left:104px;max-width:117px;overflow:hidden">CCI<span class="c" style="width:12px">交</span><span class="c" style="width:12px">易</span><span class="c" style="width:12px">系</span><span class="c" style="width:12px">统</span></div>
<div class="a" style="left:76px;top:341px;width:9px;height:1px;background:repeating-linear-gradient(90deg,#707070 0 1px,transparent 1px 2px)"></div>
<svg class="a" style="left:84px;top:333px" width="16" height="16" viewBox="0 0 16 16"><circle cx="8" cy="8" r="7" fill="#ffec00" stroke="#f01010" stroke-width="1.6"/><rect x="5" y="4.5" width="1.6" height="3" fill="#c00"/><rect x="9.4" y="4.5" width="1.6" height="3" fill="#c00"/><path d="M4 9.5Q8 13.5 12 9.5" stroke="#c00" stroke-width="1.5" fill="none"/></svg>
<div class="a t" style="top:333.0px;height:16px;line-height:16px;font-size:12px;color:#1a1a1a;font-weight:normal;font-family:'Liberation Sans',sans-serif;left:104px;max-width:117px;overflow:hidden">DMI<span class="c" style="width:12px">趋</span><span class="c" style="width:12px">向</span><span class="c" style="width:12px">交</span><span class="c" style="width:12px">易</span><span class="c" style="width:12px">系</span><span class="c" style="width:12px">统</span></div>
<div class="a" style="left:76px;top:361px;width:9px;height:1px;background:repeating-linear-gradient(90deg,#707070 0 1px,transparent 1px 2px)"></div>
<svg class="a" style="left:84px;top:353px" width="16" height="16" viewBox="0 0 16 16"><circle cx="8" cy="8" r="7" fill="#ffec00" stroke="#f01010" stroke-width="1.6"/><rect x="5" y="4.5" width="1.6" height="3" fill="#c00"/><rect x="9.4" y="4.5" width="1.6" height="3" fill="#c00"/><path d="M4 9.5Q8 13.5 12 9.5" stroke="#c00" stroke-width="1.5" fill="none"/></svg>
<div class="a t" style="top:353.0px;height:16px;line-height:16px;font-size:12px;color:#1a1a1a;font-weight:normal;font-family:'Liberation Sans',sans-serif;left:104px;max-width:117px;overflow:hidden">KDJ<span class="c" style="width:12px">交</span><span class="c" style="width:12px">易</span><span class="c" style="width:12px">系</span><span class="c" style="width:12px">统</span></div>
<div class="a" style="left:76px;top:381px;width:9px;height:1px;background:repeating-linear-gradient(90deg,#707070 0 1px,transparent 1px 2px)"></div>
<svg class="a" style="left:84px;top:373px" width="16" height="16" viewBox="0 0 16 16"><circle cx="8" cy="8" r="7" fill="#ffec00" stroke="#f01010" stroke-width="1.6"/><rect x="5" y="4.5" width="1.6" height="3" fill="#c00"/><rect x="9.4" y="4.5" width="1.6" height="3" fill="#c00"/><path d="M4 9.5Q8 13.5 12 9.5" stroke="#c00" stroke-width="1.5" fill="none"/></svg>
<div class="a t" style="top:373.0px;height:16px;line-height:16px;font-size:12px;color:#1a1a1a;font-weight:normal;font-family:'Liberation Sans',sans-serif;left:104px;max-width:117px;overflow:hidden">KDJ<span class="c" style="width:12px">金</span><span class="c" style="width:12px">死</span><span class="c" style="width:12px">叉</span><span class="c" style="width:12px">价</span><span class="c" style="width:12px">格</span><span class="c" style="width:12px">预</span><span class="c" style="width:12px">测</span></div>
<div class="a" style="left:76px;top:401px;width:9px;height:1px;background:repeating-linear-gradient(90deg,#707070 0 1px,transparent 1px 2px)"></div>
<svg class="a" style="left:84px;top:393px" width="16" height="16" viewBox="0 0 16 16"><circle cx="8" cy="8" r="7" fill="#ffec00" stroke="#f01010" stroke-width="1.6"/><rect x="5" y="4.5" width="1.6" height="3" fill="#c00"/><rect x="9.4" y="4.5" width="1.6" height="3" fill="#c00"/><path d="M4 9.5Q8 13.5 12 9.5" stroke="#c00" stroke-width="1.5" fill="none"/></svg>
<div class="a t" style="top:393.0px;height:16px;line-height:16px;font-size:12px;color:#1a1a1a;font-weight:normal;font-family:'Liberation Sans',sans-serif;left:104px;max-width:117px;overflow:hidden">KD<span class="c" style="width:12px">随</span><span class="c" style="width:12px">机</span><span class="c" style="width:12px">指</span><span class="c" style="width:12px">标</span><span class="c" style="width:12px">交</span><span class="c" style="width:12px">易</span><span class="c" style="width:12px">系</span><span class="c" style="width:12px">统</span></div>
<div class="a" style="left:76px;top:421px;width:9px;height:1px;background:repeating-linear-gradient(90deg,#707070 0 1px,transparent 1px 2px)"></div>
<div class="a" style="left:101px;top:411px;width:120px;height:20px;background:#f0f0f0;"></div>
<svg class="a" style="left:84px;top:413px" width="16" height="16" viewBox="0 0 16 16"><circle cx="8" cy="8" r="7" fill="#ffec00" stroke="#f01010" stroke-width="1.6"/><rect x="5" y="4.5" width="1.6" height="3" fill="#c00"/><rect x="9.4" y="4.5" width="1.6" height="3" fill="#c00"/><path d="M4 9.5Q8 13.5 12 9.5" stroke="#c00" stroke-width="1.5" fill="none"/></svg>
<div class="a t" style="top:413.0px;height:16px;line-height:16px;font-size:12px;color:#1a1a1a;font-weight:normal;font-family:'Liberation Sans',sans-serif;left:104px;max-width:117px;overflow:hidden">MACD<span class="c" style="width:12px">突</span><span class="c" style="width:12px">破</span><span class="c" style="width:12px">零</span><span class="c" style="width:12px">轴</span><span class="c" style="width:12px">价</span><span class="c" style="width:12px">格</span><span class="c" style="width:12px">预</span><span class="c" style="width:12px">测</span></div>
<div class="a" style="left:76px;top:441px;width:9px;height:1px;background:repeating-linear-gradient(90deg,#707070 0 1px,transparent 1px 2px)"></div>
<svg class="a" style="left:84px;top:433px" width="16" height="16" viewBox="0 0 16 16"><circle cx="8" cy="8" r="7" fill="#ffec00" stroke="#f01010" stroke-width="1.6"/><rect x="5" y="4.5" width="1.6" height="3" fill="#c00"/><rect x="9.4" y="4.5" width="1.6" height="3" fill="#c00"/><path d="M4 9.5Q8 13.5 12 9.5" stroke="#c00" stroke-width="1.5" fill="none"/></svg>
<div class="a t" style="top:433.0px;height:16px;line-height:16px;font-size:12px;color:#1a1a1a;font-weight:normal;font-family:'Liberation Sans',sans-serif;left:104px;max-width:117px;overflow:hidden">MA<span class="c" style="width:12px">均</span><span class="c" style="width:12px">线</span><span class="c" style="width:12px">交</span><span class="c" style="width:12px">易</span><span class="c" style="width:12px">系</span><span class="c" style="width:12px">统</span></div>
<div class="a" style="left:76px;top:461px;width:9px;height:1px;background:repeating-linear-gradient(90deg,#707070 0 1px,transparent 1px 2px)"></div>
<svg class="a" style="left:84px;top:453px" width="16" height="16" viewBox="0 0 16 16"><circle cx="8" cy="8" r="7" fill="#ffec00" stroke="#f01010" stroke-width="1.6"/><rect x="5" y="4.5" width="1.6" height="3" fill="#c00"/><rect x="9.4" y="4.5" width="1.6" height="3" fill="#c00"/><path d="M4 9.5Q8 13.5 12 9.5" stroke="#c00" stroke-width="1.5" fill="none"/></svg>
<div class="a t" style="top:453.0px;height:16px;line-height:16px;font-size:12px;color:#1a1a1a;font-weight:normal;font-family:'Liberation Sans',sans-serif;left:104px;max-width:117px;overflow:hidden">MTM<span class="c" style="width:12px">动</span><span class="c" style="width:12px">力</span><span class="c" style="width:12px">指</span><span class="c" style="width:12px">标</span><span class="c" style="width:12px">交</span><span class="c" style="width:12px">易</span><span class="c" style="width:12px">系</span><span class="c" style="width:12px">统</span></div>
<div class="a" style="left:76px;top:481px;width:9px;height:1px;background:repeating-linear-gradient(90deg,#707070 0 1px,transparent 1px 2px)"></div>
<svg class="a" style="left:84px;top:473px" width="16" height="16" viewBox="0 0 16 16"><circle cx="8" cy="8" r="7" fill="#ffec00" stroke="#f01010" stroke-width="1.6"/><rect x="5" y="4.5" width="1.6" height="3" fill="#c00"/><rect x="9.4" y="4.5" width="1.6" height="3" fill="#c00"/><path d="M4 9.5Q8 13.5 12 9.5" stroke="#c00" stroke-width="1.5" fill="none"/></svg>
<div class="a t" style="top:473.0px;height:16px;line-height:16px;font-size:12px;color:#1a1a1a;font-weight:normal;font-family:'Liberation Sans',sans-serif;left:104px;max-width:117px;overflow:hidden">PSY<span class="c" style="width:12px">心</span><span class="c" style="width:12px">理</span><span class="c" style="width:12px">线</span><span class="c" style="width:12px">交</span><span class="c" style="width:12px">易</span><span class="c" style="width:12px">系</span><span class="c" style="width:12px">统</span></div>
<div class="a" style="left:76px;top:501px;width:9px;height:1px;background:repeating-linear-gradient(90deg,#707070 0 1px,transparent 1px 2px)"></div>
<svg class="a" style="left:84px;top:493px" width="16" height="16" viewBox="0 0 16 16"><circle cx="8" cy="8" r="7" fill="#ffec00" stroke="#f01010" stroke-width="1.6"/><rect x="5" y="4.5" width="1.6" height="3" fill="#c00"/><rect x="9.4" y="4.5" width="1.6" height="3" fill="#c00"/><path d="M4 9.5Q8 13.5 12 9.5" stroke="#c00" stroke-width="1.5" fill="none"/></svg>
<div class="a t" style="top:493.0px;height:16px;line-height:16px;font-size:12px;color:#1a1a1a;font-weight:normal;font-family:'Liberation Sans',sans-serif;left:104px;max-width:117px;overflow:hidden">ROC<span class="c" style="width:12px">变</span><span class="c" style="width:12px">动</span><span class="c" style="width:12px">速</span><span class="c" style="width:12px">率</span><span class="c" style="width:12px">交</span><span class="c" style="width:12px">易</span><span class="c" style="width:12px">系</span><span class="c" style="width:12px">统</span></div>
<div class="a" style="left:76px;top:521px;width:9px;height:1px;background:repeating-linear-gradient(90deg,#707070 0 1px,transparent 1px 2px)"></div>
<svg class="a" style="left:84px;top:513px" width="16" height="16" viewBox="0 0 16 16"><circle cx="8" cy="8" r="7" fill="#ffec00" stroke="#f01010" stroke-width="1.6"/><rect x="5" y="4.5" width="1.6" height="3" fill="#c00"/><rect x="9.4" y="4.5" width="1.6" height="3" fill="#c00"/><path d="M4 9.5Q8 13.5 12 9.5" stroke="#c00" stroke-width="1.5" fill="none"/></svg>
<div class="a t" style="top:513.0px;height:16px;line-height:16px;font-size:12px;color:#1a1a1a;font-weight:normal;font-family:'Liberation Sans',sans-serif;left:104px;max-width:117px;overflow:hidden">RSI<span class="c" style="width:12px">相</span><span class="c" style="width:12px">对</span><span class="c" style="width:12px">强</span><span class="c" style="width:12px">弱</span><span class="c" style="width:12px">指</span><span class="c" style="width:12px">标</span><span class="c" style="width:12px">交</span><span class="c" style="width:12px">易</span></div>
<div class="a" style="left:76px;top:541px;width:9px;height:1px;background:repeating-linear-gradient(90deg,#707070 0 1px,transparent 1px 2px)"></div>
<svg class="a" style="left:84px;top:533px" width="16" height="16" viewBox="0 0 16 16"><circle cx="8" cy="8" r="7" fill="#ffec00" stroke="#f01010" stroke-width="1.6"/><rect x="5" y="4.5" width="1.6" height="3" fill="#c00"/><rect x="9.4" y="4.5" width="1.6" height="3" fill="#c00"/><path d="M4 9.5Q8 13.5 12 9.5" stroke="#c00" stroke-width="1.5" fill="none"/></svg>
<div class="a t" style="top:533.0px;height:16px;line-height:16px;font-size:12px;color:#1a1a1a;font-weight:normal;font-family:'Liberation Sans',sans-serif;left:104px;max-width:117px;overflow:hidden">SAR<span class="c" style="width:12px">抛</span><span class="c" style="width:12px">物</span><span class="c" style="width:12px">转</span><span class="c" style="width:12px">向</span><span class="c" style="width:12px">交</span><span class="c" style="width:12px">易</span><span class="c" style="width:12px">系</span><span class="c" style="width:12px">统</span></div>
<div class="a" style="left:76px;top:561px;width:9px;height:1px;background:repeating-linear-gradient(90deg,#707070 0 1px,transparent 1px 2px)"></div>
<svg class="a" style="left:84px;top:553px" width="16" height="16" viewBox="0 0 16 16"><circle cx="8" cy="8" r="7" fill="#ffec00" stroke="#f01010" stroke-width="1.6"/><rect x="5" y="4.5" width="1.6" height="3" fill="#c00"/><rect x="9.4" y="4.5" width="1.6" height="3" fill="#c00"/><path d="M4 9.5Q8 13.5 12 9.5" stroke="#c00" stroke-width="1.5" fill="none"/></svg>
<div class="a t" style="top:553.0px;height:16px;line-height:16px;font-size:12px;color:#1a1a1a;font-weight:normal;font-family:'Liberation Sans',sans-serif;left:104px;max-width:117px;overflow:hidden">VR<span class="c" style="width:12px">容</span><span class="c" style="width:12px">量</span><span class="c" style="width:12px">比</span><span class="c" style="width:12px">率</span><span class="c" style="width:12px">交</span><span class="c" style="width:12px">易</span><span class="c" style="width:12px">系</span><span class="c" style="width:12px">统</span></div>
<div class="a" style="left:60px;top:581px;width:8px;height:1px;background:repeating-linear-gradient(90deg,#707070 0 1px,transparent 1px 2px)"></div>
<div class="a" style="left:52px;top:577px;width:9px;height:9px;box-sizing:border-box;border:1px solid #808080;background:#f4f4f4"></div><div class="a" style="left:54px;top:581px;width:5px;height:1px;background:#000"></div>
<svg class="a" style="left:68px;top:574px" width="16" height="13" viewBox="0 0 16 13"><path d="M0.5 2.5h5l1.5-2h4v2h4.5v9.5h-15z" fill="#f2f27a" stroke="#666" stroke-width="1"/><path d="M1 12.5h15V3" stroke="#111" stroke-width="1.2" fill="none"/></svg>
<div class="a t" style="top:572.5px;height:17px;line-height:17px;font-size:13px;color:#1a3d8c;font-weight:bold;font-family:'Liberation Sans',sans-serif;left:86px;">2.<span class="c" style="width:12px">系</span><span class="c" style="width:12px">统</span><span class="c" style="width:12px">交</span><span class="c" style="width:12px">易</span></div>
<div class="a" style="left:75px;top:588px;width:1px;height:382px;background:repeating-linear-gradient(180deg,#707070 0 1px,transparent 1px 2px)"></div>
<div class="a" style="left:76px;top:601px;width:9px;height:1px;background:repeating-linear-gradient(90deg,#707070 0 1px,transparent 1px 2px)"></div>
<svg class="a" style="left:84px;top:593px" width="16" height="16" viewBox="0 0 16 16"><circle cx="8" cy="8" r="7" fill="#ffec00" stroke="#f01010" stroke-width="1.6"/><rect x="5" y="4.5" width="1.6" height="3" fill="#c00"/><rect x="9.4" y="4.5" width="1.6" height="3" fill="#c00"/><path d="M4 9.5Q8 13.5 12 9.5" stroke="#c00" stroke-width="1.5" fill="none"/></svg>
<div class="a t" style="top:593.0px;height:16px;line-height:16px;font-size:12px;color:#1f2fa8;font-weight:normal;font-family:'Liberation Sans',sans-serif;left:104px;max-width:117px;overflow:hidden">01.<span class="c" style="width:12px">肯</span><span class="c" style="width:12px">特</span><span class="c" style="width:12px">纳</span><span class="c" style="width:12px">系</span><span class="c" style="width:12px">统</span></div>
<div class="a" style="left:76px;top:621px;width:9px;height:1px;background:repeating-linear-gradient(90deg,#707070 0 1px,transparent 1px 2px)"></div>
<svg class="a" style="left:84px;top:613px" width="16" height="16" viewBox="0 0 16 16"><circle cx="8" cy="8" r="7" fill="#ffec00" stroke="#f01010" stroke-width="1.6"/><rect x="5" y="4.5" width="1.6" height="3" fill="#c00"/><rect x="9.4" y="4.5" width="1.6" height="3" fill="#c00"/><path d="M4 9.5Q8 13.5 12 9.5" stroke="#c00" stroke-width="1.5" fill="none"/></svg>
<div class="a t" style="top:613.0px;height:16px;line-height:16px;font-size:12px;color:#1f2fa8;font-weight:normal;font-family:'Liberation Sans',sans-serif;left:104px;max-width:117px;overflow:hidden">02.<span class="c" style="width:12px">波</span><span class="c" style="width:12px">段</span><span class="c" style="width:12px">股</span><span class="c" style="width:12px">指</span><span class="c" style="width:12px">模</span><span class="c" style="width:12px">型</span></div>
<div class="a" style="left:76px;top:641px;width:9px;height:1px;background:repeating-linear-gradient(90deg,#707070 0 1px,transparent 1px 2px)"></div>
<svg class="a" style="left:84px;top:633px" width="16" height="16" viewBox="0 0 16 16"><circle cx="8" cy="8" r="7" fill="#ffec00" stroke="#f01010" stroke-width="1.6"/><rect x="5" y="4.5" width="1.6" height="3" fill="#c00"/><rect x="9.4" y="4.5" width="1.6" height="3" fill="#c00"/><path d="M4 9.5Q8 13.5 12 9.5" stroke="#c00" stroke-width="1.5" fill="none"/></svg>
<div class="a t" style="top:633.0px;height:16px;line-height:16px;font-size:12px;color:#1f2fa8;font-weight:normal;font-family:'Liberation Sans',sans-serif;left:104px;max-width:117px;overflow:hidden">03.<span class="c" style="width:12px">早</span><span class="c" style="width:12px">盘</span><span class="c" style="width:12px">突</span><span class="c" style="width:12px">破</span><span class="c" style="width:12px">系</span><span class="c" style="width:12px">统</span></div>
<div class="a" style="left:76px;top:661px;width:9px;height:1px;background:repeating-linear-gradient(90deg,#707070 0 1px,transparent 1px 2px)"></div>
<svg class="a" style="left:84px;top:653px" width="16" height="16" viewBox="0 0 16 16"><circle cx="8" cy="8" r="7" fill="#ffec00" stroke="#f01010" stroke-width="1.6"/><rect x="5" y="4.5" width="1.6" height="3" fill="#c00"/><rect x="9.4" y="4.5" width="1.6" height="3" fill="#c00"/><path d="M4 9.5Q8 13.5 12 9.5" stroke="#c00" stroke-width="1.5" fill="none"/></svg>
<div class="a t" style="top:653.0px;height:16px;line-height:16px;font-size:12px;color:#1f2fa8;font-weight:normal;font-family:'Liberation Sans',sans-serif;left:104px;max-width:117px;overflow:hidden">04.<span class="c" style="width:12px">顾</span><span class="c" style="width:12px">比</span><span class="c" style="width:12px">倒</span><span class="c" style="width:12px">数</span><span class="c" style="width:12px">线</span><span class="c" style="width:12px">策</span><span class="c" style="width:12px">略</span></div>
<div class="a" style="left:76px;top:681px;width:9px;height:1px;background:repeating-linear-gradient(90deg,#707070 0 1px,transparent 1px 2px)"></div>
<svg class="a" style="left:84px;top:673px" width="16" height="16" viewBox="0 0 16 16"><circle cx="8" cy="8" r="7" fill="#ffec00" stroke="#f01010" stroke-width="1.6"/><rect x="5" y="4.5" width="1.6" height="3" fill="#c00"/><rect x="9.4" y="4.5" width="1.6" height="3" fill="#c00"/><path d="M4 9.5Q8 13.5 12 9.5" stroke="#c00" stroke-width="1.5" fill="none"/></svg>
<div class="a t" style="top:673.0px;height:16px;line-height:16px;font-size:12px;color:#1f2fa8;font-weight:normal;font-family:'Liberation Sans',sans-serif;left:104px;max-width:117px;overflow:hidden">05.<span class="c" style="width:12px">三</span><span class="c" style="width:12px">进</span><span class="c" style="width:12px">三</span><span class="c" style="width:12px">出</span><span class="c" style="width:12px">交</span><span class="c" style="width:12px">易</span><span class="c" style="width:12px">法</span></div>
<div class="a" style="left:76px;top:701px;width:9px;height:1px;background:repeating-linear-gradient(90deg,#707070 0 1px,transparent 1px 2px)"></div>
<svg class="a" style="left:84px;top:693px" width="16" height="16" viewBox="0 0 16 16"><circle cx="8" cy="8" r="7" fill="#ffec00" stroke="#f01010" stroke-width="1.6"/><rect x="5" y="4.5" width="1.6" height="3" fill="#c00"/><rect x="9.4" y="4.5" width="1.6" height="3" fill="#c00"/><path d="M4 9.5Q8 13.5 12 9.5" stroke="#c00" stroke-width="1.5" fill="none"/></svg>
<div class="a t" style="top:693.0px;height:16px;line-height:16px;font-size:12px;color:#1f2fa8;font-weight:normal;font-family:'Liberation Sans',sans-serif;left:104px;max-width:117px;overflow:hidden">06.K<span class="c" style="width:12px">线</span><span class="c" style="width:12px">形</span><span class="c" style="width:12px">态</span><span class="c" style="width:12px">交</span><span class="c" style="width:12px">易</span><span class="c" style="width:12px">系</span><span class="c" style="width:12px">统</span></div>
<div class="a" style="left:76px;top:721px;width:9px;height:1px;background:repeating-linear-gradient(90deg,#707070 0 1px,transparent 1px 2px)"></div>
<svg class="a" style="left:84px;top:713px" width="16" height="16" viewBox="0 0 16 16"><circle cx="8" cy="8" r="7" fill="#ffec00" stroke="#f01010" stroke-width="1.6"/><rect x="5" y="4.5" width="1.6" height="3" fill="#c00"/><rect x="9.4" y="4.5" width="1.6" height="3" fill="#c00"/><path d="M4 9.5Q8 13.5 12 9.5" stroke="#c00" stroke-width="1.5" fill="none"/></svg>
<div class="a t" style="top:713.0px;height:16px;line-height:16px;font-size:12px;color:#1f2fa8;font-weight:normal;font-family:'Liberation Sans',sans-serif;left:104px;max-width:117px;overflow:hidden">07.<span class="c" style="width:12px">双</span><span class="c" style="width:12px">向</span><span class="c" style="width:12px">海</span><span class="c" style="width:12px">龟</span><span class="c" style="width:12px">交</span><span class="c" style="width:12px">易</span><span class="c" style="width:12px">系</span><span class="c" style="width:12px">统</span></div>
<div class="a" style="left:76px;top:741px;width:9px;height:1px;background:repeating-linear-gradient(90deg,#707070 0 1px,transparent 1px 2px)"></div>
<svg class="a" style="left:84px;top:733px" width="16" height="16" viewBox="0 0 16 16"><circle cx="8" cy="8" r="7" fill="#ffec00" stroke="#f01010" stroke-width="1.6"/><rect x="5" y="4.5" width="1.6" height="3" fill="#c00"/><rect x="9.4" y="4.5" width="1.6" height="3" fill="#c00"/><path d="M4 9.5Q8 13.5 12 9.5" stroke="#c00" stroke-width="1.5" fill="none"/></svg>
<div class="a t" style="top:733.0px;height:16px;line-height:16px;font-size:12px;color:#1f2fa8;font-weight:normal;font-family:'Liberation Sans',sans-serif;left:104px;max-width:117px;overflow:hidden">08.<span class="c" style="width:12px">多</span><span class="c" style="width:12px">头</span><span class="c" style="width:12px">海</span><span class="c" style="width:12px">龟</span><span class="c" style="width:12px">交</span><span class="c" style="width:12px">易</span><span class="c" style="width:12px">系</span><span class="c" style="width:12px">统</span></div>
<div class="a" style="left:76px;top:761px;width:9px;height:1px;background:repeating-linear-gradient(90deg,#707070 0 1px,transparent 1px 2px)"></div>
<svg class="a" style="left:84px;top:753px" width="16" height="16" viewBox="0 0 16 16"><circle cx="8" cy="8" r="7" fill="#ffec00" stroke="#f01010" stroke-width="1.6"/><rect x="5" y="4.5" width="1.6" height="3" fill="#c00"/><rect x="9.4" y="4.5" width="1.6" height="3" fill="#c00"/><path d="M4 9.5Q8 13.5 12 9.5" stroke="#c00" stroke-width="1.5" fill="none"/></svg>
<div class="a t" style="top:753.0px;height:16px;line-height:16px;font-size:12px;color:#1f2fa8;font-weight:normal;font-family:'Liberation Sans',sans-serif;left:104px;max-width:117px;overflow:hidden">09.Hans123 <span class="c" style="width:12px">【</span><span class="c" style="width:12px">日</span><span class="c" style="width:12px">内</span><span class="c" style="width:12px">策</span><span class="c" style="width:12px">略</span><span class="c" style="width:12px">】</span></div>
<div class="a" style="left:76px;top:781px;width:9px;height:1px;background:repeating-linear-gradient(90deg,#707070 0 1px,transparent 1px 2px)"></div>
<svg class="a" style="left:84px;top:773px" width="16" height="16" viewBox="0 0 16 16"><circle cx="8" cy="8" r="7" fill="#ffec00" stroke="#f01010" stroke-width="1.6"/><rect x="5" y="4.5" width="1.6" height="3" fill="#c00"/><rect x="9.4" y="4.5" width="1.6" height="3" fill="#c00"/><path d="M4 9.5Q8 13.5 12 9.5" stroke="#c00" stroke-width="1.5" fill="none"/></svg>
<div class="a t" style="top:773.0px;height:16px;line-height:16px;font-size:12px;color:#1f2fa8;font-weight:normal;font-family:'Liberation Sans',sans-serif;left:104px;max-width:117px;overflow:hidden">10.<span class="c" style="width:12px">空</span><span class="c" style="width:12px">中</span><span class="c" style="width:12px">花</span><span class="c" style="width:12px">园</span> <span class="c" style="width:12px">【</span><span class="c" style="width:12px">日</span><span class="c" style="width:12px">内</span><span class="c" style="width:12px">策</span><span class="c" style="width:12px">略</span><span class="c" style="width:12px">】</span></div>
<div class="a" style="left:76px;top:801px;width:9px;height:1px;background:repeating-linear-gradient(90deg,#707070 0 1px,transparent 1px 2px)"></div>
<svg class="a" style="left:84px;top:793px" width="16" height="16" viewBox="0 0 16 16"><circle cx="8" cy="8" r="7" fill="#ffec00" stroke="#f01010" stroke-width="1.6"/><rect x="5" y="4.5" width="1.6" height="3" fill="#c00"/><rect x="9.4" y="4.5" width="1.6" height="3" fill="#c00"/><path d="M4 9.5Q8 13.5 12 9.5" stroke="#c00" stroke-width="1.5" fill="none"/></svg>
<div class="a t" style="top:793.0px;height:16px;line-height:16px;font-size:12px;color:#1f2fa8;font-weight:normal;font-family:'Liberation Sans',sans-serif;left:104px;max-width:117px;overflow:hidden">11.<span class="c" style="width:12px">横</span><span class="c" style="width:12px">盘</span><span class="c" style="width:12px">突</span><span class="c" style="width:12px">破</span> <span class="c" style="width:12px">【</span><span class="c" style="width:12px">日</span><span class="c" style="width:12px">内</span><span class="c" style="width:12px">策</span><span class="c" style="width:12px">略</span><span class="c" style="width:12px">】</span></div>
<div class="a" style="left:76px;top:821px;width:9px;height:1px;background:repeating-linear-gradient(90deg,#707070 0 1px,transparent 1px 2px)"></div>
<svg class="a" style="left:84px;top:813px" width="16" height="16" viewBox="0 0 16 16"><circle cx="8" cy="8" r="7" fill="#ffec00" stroke="#f01010" stroke-width="1.6"/><rect x="5" y="4.5" width="1.6" height="3" fill="#c00"/><rect x="9.4" y="4.5" width="1.6" height="3" fill="#c00"/><path d="M4 9.5Q8 13.5 12 9.5" stroke="#c00" stroke-width="1.5" fill="none"/></svg>
<div class="a t" style="top:813.0px;height:16px;line-height:16px;font-size:12px;color:#1f2fa8;font-weight:normal;font-family:'Liberation Sans',sans-serif;left:104px;max-width:117px;overflow:hidden">12.R-Breaker <span class="c" style="width:12px">【</span><span class="c" style="width:12px">日</span><span class="c" style="width:12px">内</span><span class="c" style="width:12px">策</span><span class="c" style="width:12px">略</span><span class="c" style="width:12px">】</span></div>
<div class="a" style="left:76px;top:841px;width:9px;height:1px;background:repeating-linear-gradient(90deg,#707070 0 1px,transparent 1px 2px)"></div>
<svg class="a" style="left:84px;top:833px" width="16" height="16" viewBox="0 0 16 16"><circle cx="8" cy="8" r="7" fill="#ffec00" stroke="#f01010" stroke-width="1.6"/><rect x="5" y="4.5" width="1.6" height="3" fill="#c00"/><rect x="9.4" y="4.5" width="1.6" height="3" fill="#c00"/><path d="M4 9.5Q8 13.5 12 9.5" stroke="#c00" stroke-width="1.5" fill="none"/></svg>
<div class="a t" style="top:833.0px;height:16px;line-height:16px;font-size:12px;color:#1f2fa8;font-weight:normal;font-family:'Liberation Sans',sans-serif;left:104px;max-width:117px;overflow:hidden">13.<span class="c" style="width:12px">菲</span><span class="c" style="width:12px">阿</span><span class="c" style="width:12px">里</span><span class="c" style="width:12px">四</span><span class="c" style="width:12px">价</span> <span class="c" style="width:12px">【</span><span class="c" style="width:12px">日</span><span class="c" style="width:12px">内</span><span class="c" style="width:12px">策</span><span class="c" style="width:12px">略</span><span class="c" style="width:12px">】</span></div>
<div class="a" style="left:76px;top:861px;width:9px;height:1px;background:repeating-linear-gradient(90deg,#707070 0 1px,transparent 1px 2px)"></div>
<svg class="a" style="left:84px;top:853px" width="16" height="16" viewBox="0 0 16 16"><circle cx="8" cy="8" r="7" fill="#ffec00" stroke="#f01010" stroke-width="1.6"/><rect x="5" y="4.5" width="1.6" height="3" fill="#c00"/><rect x="9.4" y="4.5" width="1.6" height="3" fill="#c00"/><path d="M4 9.5Q8 13.5 12 9.5" stroke="#c00" stroke-width="1.5" fill="none"/></svg>
<div class="a t" style="top:853.0px;height:16px;line-height:16px;font-size:12px;color:#1f2fa8;font-weight:normal;font-family:'Liberation Sans',sans-serif;left:104px;max-width:117px;overflow:hidden">14.<span class="c" style="width:12px">唐</span><span class="c" style="width:12px">奇</span><span class="c" style="width:12px">安</span><span class="c" style="width:12px">通</span><span class="c" style="width:12px">道</span> <span class="c" style="width:12px">【</span><span class="c" style="width:12px">日</span><span class="c" style="width:12px">内</span><span class="c" style="width:12px">策</span><span class="c" style="width:12px">略</span><span class="c" style="width:12px">】</span></div>
<div class="a" style="left:76px;top:881px;width:9px;height:1px;background:repeating-linear-gradient(90deg,#707070 0 1px,transparent 1px 2px)"></div>
<svg class="a" style="left:84px;top:873px" width="16" height="16" viewBox="0 0 16 16"><circle cx="8" cy="8" r="7" fill="#ffec00" stroke="#f01010" stroke-width="1.6"/><rect x="5" y="4.5" width="1.6" height="3" fill="#c00"/><rect x="9.4" y="4.5" width="1.6" height="3" fill="#c00"/><path d="M4 9.5Q8 13.5 12 9.5" stroke="#c00" stroke-width="1.5" fill="none"/></svg>
<div class="a t" style="top:873.0px;height:16px;line-height:16px;font-size:12px;color:#1f2fa8;font-weight:normal;font-family:'Liberation Sans',sans-serif;left:104px;max-width:117px;overflow:hidden">15.Aberration <span class="c" style="width:12px">【</span><span class="c" style="width:12px">长</span><span class="c" style="width:12px">线</span><span class="c" style="width:12px">】</span></div>
<div class="a" style="left:76px;top:901px;width:9px;height:1px;background:repeating-linear-gradient(90deg,#707070 0 1px,transparent 1px 2px)"></div>
<svg class="a" style="left:84px;top:893px" width="16" height="16" viewBox="0 0 16 16"><circle cx="8" cy="8" r="7" fill="#ffec00" stroke="#f01010" stroke-width="1.6"/><rect x="5" y="4.5" width="1.6" height="3" fill="#c00"/><rect x="9.4" y="4.5" width="1.6" height="3" fill="#c00"/><path d="M4 9.5Q8 13.5 12 9.5" stroke="#c00" stroke-width="1.5" fill="none"/></svg>
<div class="a t" style="top:893.0px;height:16px;line-height:16px;font-size:12px;color:#1f2fa8;font-weight:normal;font-family:'Liberation Sans',sans-serif;left:104px;max-width:117px;overflow:hidden">16.Dual Thrust <span class="c" style="width:12px">【</span><span class="c" style="width:12px">日</span><span class="c" style="width:12px">内</span><span class="c" style="width:12px">策</span><span class="c" style="width:12px">略</span><span class="c" style="width:12px">】</span></div>
<div class="a" style="left:76px;top:921px;width:9px;height:1px;background:repeating-linear-gradient(90deg,#707070 0 1px,transparent 1px 2px)"></div>
<svg class="a" style="left:84px;top:913px" width="16" height="16" viewBox="0 0 16 16"><circle cx="8" cy="8" r="7" fill="#ffec00" stroke="#f01010" stroke-width="1.6"/><rect x="5" y="4.5" width="1.6" height="3" fill="#c00"/><rect x="9.4" y="4.5" width="1.6" height="3" fill="#c00"/><path d="M4 9.5Q8 13.5 12 9.5" stroke="#c00" stroke-width="1.5" fill="none"/></svg>
<div class="a t" style="top:913.0px;height:16px;line-height:16px;font-size:12px;color:#1f2fa8;font-weight:normal;font-family:'Liberation Sans',sans-serif;left:104px;max-width:117px;overflow:hidden">17.<span class="c" style="width:12px">布</span><span class="c" style="width:12px">林</span><span class="c" style="width:12px">强</span><span class="c" style="width:12px">盗</span><span class="c" style="width:12px">系</span><span class="c" style="width:12px">统</span> <span class="c" style="width:12px">【</span><span class="c" style="width:12px">中</span><span class="c" style="width:12px">线</span><span class="c" style="width:12px">】</span></div>
<div class="a" style="left:76px;top:941px;width:9px;height:1px;background:repeating-linear-gradient(90deg,#707070 0 1px,transparent 1px 2px)"></div>
<svg class="a" style="left:84px;top:933px" width="16" height="16" viewBox="0 0 16 16"><circle cx="8" cy="8" r="7" fill="#ffec00" stroke="#f01010" stroke-width="1.6"/><rect x="5" y="4.5" width="1.6" height="3" fill="#c00"/><rect x="9.4" y="4.5" width="1.6" height="3" fill="#c00"/><path d="M4 9.5Q8 13.5 12 9.5" stroke="#c00" stroke-width="1.5" fill="none"/></svg>
<div class="a t" style="top:933.0px;height:16px;line-height:16px;font-size:12px;color:#1f2fa8;font-weight:normal;font-family:'Liberation Sans',sans-serif;left:104px;max-width:117px;overflow:hidden">18.<span class="c" style="width:12px">金</span><span class="c" style="width:12px">肯</span><span class="c" style="width:12px">特</span><span class="c" style="width:12px">纳</span><span class="c" style="width:12px">交</span><span class="c" style="width:12px">易</span><span class="c" style="width:12px">系</span><span class="c" style="width:12px">统</span></div>
<div class="a" style="left:76px;top:961px;width:9px;height:1px;background:repeating-linear-gradient(90deg,#707070 0 1px,transparent 1px 2px)"></div>
<svg class="a" style="left:84px;top:953px" width="16" height="16" viewBox="0 0 16 16"><circle cx="8" cy="8" r="7" fill="#ffec00" stroke="#f01010" stroke-width="1.6"/><rect x="5" y="4.5" width="1.6" height="3" fill="#c00"/><rect x="9.4" y="4.5" width="1.6" height="3" fill="#c00"/><path d="M4 9.5Q8 13.5 12 9.5" stroke="#c00" stroke-width="1.5" fill="none"/></svg>
<div class="a t" style="top:953.0px;height:16px;line-height:16px;font-size:12px;color:#1f2fa8;font-weight:normal;font-family:'Liberation Sans',sans-serif;left:104px;max-width:117px;overflow:hidden">19.<span class="c" style="width:12px">恒</span><span class="c" style="width:12px">温</span><span class="c" style="width:12px">器</span><span class="c" style="width:12px">策</span><span class="c" style="width:12px">略</span> <span class="c" style="width:12px">【</span><span class="c" style="width:12px">震</span><span class="c" style="width:12px">荡</span><span class="c" style="width:12px">】</span></div>
<div class="a" style="left:222px;top:171px;width:17px;height:799px;background:#f0f0f0;"></div>
<div class="a" style="left:224px;top:188px;width:13px;height:542px;background:#cdcdcd;"></div>
<svg class="a" style="left:225px;top:176px" width="11" height="7"><path d="M1 6l4.5-4.5L10 6" stroke="#555" stroke-width="1.6" fill="none"/></svg>
<svg class="a" style="left:225px;top:962px" width="11" height="7"><path d="M1 1l4.5 4.5L10 1" stroke="#555" stroke-width="1.6" fill="none"/></svg>
<div class="a" style="left:239px;top:169px;width:1px;height:801px;background:#a0a0a0;"></div>
<div class="a" style="left:241px;top:113px;width:5px;height:857px;background:#f0f0f0;"></div>
<div class="a" style="left:245px;top:113px;width:1px;height:857px;background:#a0a0a0;"></div>
<svg class="a" style="left:0;top:0" width="1865" height="996" viewBox="0 0 1865 996" shape-rendering="crispEdges"><line x1="248" y1="186.5" x2="1611" y2="186.5" stroke="#9a0000" stroke-width="1" stroke-dasharray="1 3"/><line x1="248" y1="244.5" x2="1611" y2="244.5" stroke="#9a0000" stroke-width="1" stroke-dasharray="1 3"/><line x1="248" y1="303.5" x2="1611" y2="303.5" stroke="#9a0000" stroke-width="1" stroke-dasharray="1 3"/><line x1="248" y1="361.5" x2="1611" y2="361.5" stroke="#9a0000" stroke-width="1" stroke-dasharray="1 3"/><line x1="248" y1="420.5" x2="1611" y2="420.5" stroke="#9a0000" stroke-width="1" stroke-dasharray="1 3"/><line x1="248" y1="478.5" x2="1611" y2="478.5" stroke="#9a0000" stroke-width="1" stroke-dasharray="1 3"/><line x1="248" y1="537.5" x2="1611" y2="537.5" stroke="#9a0000" stroke-width="1" stroke-dasharray="1 3"/><line x1="248" y1="595.5" x2="1611" y2="595.5" stroke="#9a0000" stroke-width="1" stroke-dasharray="1 3"/><line x1="1611" y1="186.5" x2="1616" y2="186.5" stroke="#ff0000"/><text x="1617" y="191" fill="#ff0000" style="font-family:'Liberation Mono',monospace;font-size:13px;letter-spacing:-0.8px">30390</text><line x1="1611" y1="244.5" x2="1616" y2="244.5" stroke="#ff0000"/><text x="1617" y="249" fill="#ff0000" style="font-family:'Liberation Mono',monospace;font-size:13px;letter-spacing:-0.8px">30380</text><line x1="1611" y1="303.5" x2="1616" y2="303.5" stroke="#ff0000"/><text x="1617" y="308" fill="#ff0000" style="font-family:'Liberation Mono',monospace;font-size:13px;letter-spacing:-0.8px">30370</text><line x1="1611" y1="361.5" x2="1616" y2="361.5" stroke="#ff0000"/><line x1="1611" y1="420.5" x2="1616" y2="420.5" stroke="#ff0000"/><line x1="1611" y1="478.5" x2="1616" y2="478.5" stroke="#ff0000"/><text x="1617" y="483" fill="#ff0000" style="font-family:'Liberation Mono',monospace;font-size:13px;letter-spacing:-0.8px">30340</text><line x1="1611" y1="537.5" x2="1616" y2="537.5" stroke="#ff0000"/><text x="1617" y="542" fill="#ff0000" style="font-family:'Liberation Mono',monospace;font-size:13px;letter-spacing:-0.8px">30330</text><line x1="1611" y1="595.5" x2="1616" y2="595.5" stroke="#ff0000"/><text x="1617" y="600" fill="#ff0000" style="font-family:'Liberation Mono',monospace;font-size:13px;letter-spacing:-0.8px">30320</text><path d="M1613 361.5l7-7h32v14h-32z" fill="#fff"/><text x="1618" y="366" fill="#ff0000" style="font-family:'Liberation Mono',monospace;font-size:13px;letter-spacing:-0.8px">30360</text><rect x="1612.5" y="416.5" width="39" height="26" fill="#10108c" stroke="#ff0000"/><text x="1612" y="427" fill="#fff" style="font-family:'Liberation Mono',monospace;font-size:13px;letter-spacing:-0.8px">(2342)</text><text x="1614" y="440" fill="#fff" style="font-family:'Liberation Mono',monospace;font-size:13px;letter-spacing:-0.8px">30346</text><polyline points="252.5,359.0 261.5,395.0 270.5,421.0 278.5,400.0 287.5,342.0 296.5,334.0 305.5,303.0 314.5,303.0 323.5,303.0 332.5,303.0 340.5,289.0 349.5,350.0 358.5,304.0 367.5,329.0 376.5,336.0 385.5,304.0 394.5,380.0 402.5,450.0 411.5,495.0 420.5,555.0 429.5,617.0 438.5,560.0 447.5,508.0 455.5,508.0 464.5,524.0 473.5,500.0 482.5,515.0 491.5,524.0 500.5,586.0 509.5,564.0 517.5,613.0 526.5,577.0 535.5,535.0 544.5,492.0 553.5,548.0 562.5,570.0 571.5,571.0 579.5,548.0 588.5,610.0 597.5,610.0 606.5,594.0 615.5,563.0 624.5,587.0 632.5,542.0 641.5,560.0 650.5,576.0 659.5,626.0 668.5,486.0 677.5,531.0 686.5,507.0 694.5,461.0 703.5,476.0 712.5,476.0 721.5,447.0 730.5,405.0 739.5,437.0 748.5,384.0 756.5,398.0 765.5,377.0 774.5,356.0 783.5,336.0 792.5,349.0 801.5,344.0 809.5,349.0 818.5,358.0 827.5,299.0 836.5,291.0 845.5,296.0 854.5,243.0 863.5,247.0 871.5,265.0 880.5,252.0 889.5,243.0 898.5,289.0 907.5,218.0 916.5,234.0 925.5,263.0 933.5,287.0 942.5,373.0 951.5,430.0 960.5,477.0 969.5,421.0 978.5,413.0 986.5,383.0 995.5,417.0 1004.5,439.0 1013.5,445.0 1022.5,524.0 1031.5,494.0 1040.5,500.0 1048.5,451.0 1057.5,403.0 1066.5,355.0 1075.5,306.0 1084.5,257.0 1093.5,313.0 1102.5,305.0 1110.5,313.0 1119.5,218.0 1128.5,250.0 1137.5,281.0 1146.5,297.0 1155.5,253.0 1163.5,210.0 1172.5,218.0 1181.5,157.0 1190.5,171.0 1199.5,156.0 1208.5,156.0 1217.5,237.0 1225.5,319.0 1234.5,313.0 1243.5,321.0 1252.5,337.0 1261.5,295.0 1270.5,240.0 1279.5,187.0 1287.5,203.0 1296.5,218.0 1305.5,171.0 1314.5,240.0 1323.5,221.0 1332.5,202.0 1340.5,226.0 1349.5,273.0 1358.5,265.0 1367.5,257.0 1376.5,415.0 1385.5,422.0 1394.5,422.0 1402.5,457.0 1411.5,524.0 1420.5,485.0 1429.5,485.0 1438.5,442.0 1447.5,397.0 1456.5,391.0 1464.5,320.0 1473.5,405.0 1482.5,422.0 1491.5,391.0 1500.5,431.0 1509.5,447.0 1517.5,367.0 1526.5,473.0 1535.5,407.0 1544.5,407.0 1553.5,344.0 1562.5,399.0 1571.5,370.0 1579.5,353.0 1588.5,360.0 1597.5,375.0" fill="none" stroke="#8e8e8e" stroke-width="1"/><rect x="252" y="449" width="1" height="13" fill="#54ffff"/><rect x="249" y="462" width="7" height="28" fill="#54ffff"/><rect x="261" y="456" width="1" height="6" fill="#ff0000"/><rect x="258.5" y="462.5" width="6" height="27" fill="none" stroke="#ff0000" stroke-width="1"/><rect x="270" y="431" width="1" height="12" fill="#ff0000"/><rect x="270" y="460" width="1" height="18" fill="#ff0000"/><rect x="267.5" y="443.5" width="6" height="16" fill="none" stroke="#ff0000" stroke-width="1"/><rect x="278" y="438" width="1" height="5" fill="#54ffff"/><rect x="278" y="454" width="1" height="24" fill="#54ffff"/><rect x="275" y="443" width="7" height="11" fill="#54ffff"/><rect x="287" y="502" width="1" height="10" fill="#54ffff"/><rect x="284" y="462" width="7" height="40" fill="#54ffff"/><rect x="296" y="490" width="1" height="12" fill="#54ffff"/><rect x="296" y="506" width="1" height="6" fill="#54ffff"/><rect x="293" y="502" width="7" height="4" fill="#54ffff"/><rect x="305" y="531" width="1" height="17" fill="#54ffff"/><rect x="302" y="513" width="7" height="18" fill="#54ffff"/><rect x="314" y="514" width="1" height="17" fill="#ff0000"/><rect x="314" y="536" width="1" height="12" fill="#ff0000"/><rect x="311.5" y="531.5" width="6" height="4" fill="none" stroke="#ff0000" stroke-width="1"/><rect x="323" y="531" width="1" height="17" fill="#54ffff"/><rect x="320" y="519" width="7" height="12" fill="#54ffff"/><rect x="332" y="507" width="1" height="24" fill="#ff0000"/><rect x="329.5" y="531.5" width="6" height="10" fill="none" stroke="#ff0000" stroke-width="1"/><rect x="340" y="519" width="1" height="6" fill="#54ffff"/><rect x="340" y="542" width="1" height="6" fill="#54ffff"/><rect x="337" y="525" width="7" height="17" fill="#54ffff"/><rect x="349" y="524" width="1" height="18" fill="#ff0000"/><rect x="346.5" y="496.5" width="6" height="27" fill="none" stroke="#ff0000" stroke-width="1"/><rect x="355" y="496" width="7" height="34" fill="#54ffff"/><rect x="367" y="507" width="1" height="7" fill="#ff0000"/><rect x="367" y="536" width="1" height="12" fill="#ff0000"/><rect x="364.5" y="514.5" width="6" height="21" fill="none" stroke="#ff0000" stroke-width="1"/><rect x="376" y="490" width="1" height="18" fill="#ff0000"/><rect x="376" y="518" width="1" height="6" fill="#ff0000"/><rect x="373.5" y="508.5" width="6" height="9" fill="none" stroke="#ff0000" stroke-width="1"/><rect x="385" y="530" width="1" height="12" fill="#54ffff"/><rect x="382" y="507" width="7" height="23" fill="#54ffff"/><rect x="394" y="525" width="1" height="5" fill="#ff0000"/><rect x="391.5" y="478.5" width="6" height="46" fill="none" stroke="#ff0000" stroke-width="1"/><rect x="402" y="471" width="1" height="7" fill="#54ffff"/><rect x="399" y="478" width="7" height="47" fill="#54ffff"/><rect x="411" y="507" width="1" height="6" fill="#54ffff"/><rect x="411" y="542" width="1" height="18" fill="#54ffff"/><rect x="408" y="513" width="7" height="29" fill="#54ffff"/><rect x="420" y="542" width="1" height="6" fill="#ff0000"/><rect x="417.5" y="490.5" width="6" height="51" fill="none" stroke="#ff0000" stroke-width="1"/><rect x="426" y="502" width="7" height="40" fill="#54ffff"/><rect x="435.5" y="490.5" width="6" height="51" fill="none" stroke="#ff0000" stroke-width="1"/><rect x="447" y="495" width="1" height="12" fill="#ff0000"/><rect x="444.5" y="462.5" width="6" height="32" fill="none" stroke="#ff0000" stroke-width="1"/><rect x="452" y="462" width="7" height="1" fill="#54ffff"/><rect x="455" y="438" width="1" height="29" fill="#54ffff"/><rect x="464" y="443" width="1" height="19" fill="#54ffff"/><rect x="464" y="471" width="1" height="7" fill="#54ffff"/><rect x="461" y="462" width="7" height="9" fill="#54ffff"/><rect x="473" y="443" width="1" height="12" fill="#ff0000"/><rect x="473" y="471" width="1" height="7" fill="#ff0000"/><rect x="470.5" y="455.5" width="6" height="15" fill="none" stroke="#ff0000" stroke-width="1"/><rect x="482" y="431" width="1" height="18" fill="#54ffff"/><rect x="482" y="467" width="1" height="6" fill="#54ffff"/><rect x="479" y="449" width="7" height="18" fill="#54ffff"/><rect x="491" y="431" width="1" height="40" fill="#54ffff"/><rect x="488" y="471" width="7" height="2" fill="#54ffff"/><rect x="500" y="519" width="1" height="6" fill="#54ffff"/><rect x="497" y="478" width="7" height="41" fill="#54ffff"/><rect x="509" y="490" width="1" height="12" fill="#ff0000"/><rect x="509" y="513" width="1" height="6" fill="#ff0000"/><rect x="506.5" y="502.5" width="6" height="10" fill="none" stroke="#ff0000" stroke-width="1"/><rect x="517" y="497" width="1" height="5" fill="#54ffff"/><rect x="517" y="530" width="1" height="24" fill="#54ffff"/><rect x="514" y="502" width="7" height="28" fill="#54ffff"/><rect x="526" y="519" width="1" height="12" fill="#54ffff"/><rect x="523" y="531" width="7" height="31" fill="#54ffff"/><rect x="535" y="554" width="1" height="12" fill="#54ffff"/><rect x="532" y="566" width="7" height="28" fill="#54ffff"/><rect x="541" y="594" width="7" height="28" fill="#54ffff"/><rect x="553" y="573" width="1" height="11" fill="#ff0000"/><rect x="550.5" y="584.5" width="6" height="37" fill="none" stroke="#ff0000" stroke-width="1"/><rect x="562" y="577" width="1" height="17" fill="#ff0000"/><rect x="559.5" y="566.5" width="6" height="10" fill="none" stroke="#ff0000" stroke-width="1"/><rect x="571" y="548" width="1" height="18" fill="#54ffff"/><rect x="571" y="570" width="1" height="18" fill="#54ffff"/><rect x="568" y="566" width="7" height="4" fill="#54ffff"/><rect x="579" y="548" width="1" height="12" fill="#54ffff"/><rect x="576" y="560" width="7" height="24" fill="#54ffff"/><rect x="588" y="588" width="1" height="6" fill="#ff0000"/><rect x="585.5" y="537.5" width="6" height="50" fill="none" stroke="#ff0000" stroke-width="1"/><rect x="597" y="507" width="1" height="29" fill="#ff0000"/><rect x="597" y="538" width="1" height="13" fill="#ff0000"/><rect x="594.5" y="536.5" width="6" height="1" fill="none" stroke="#ff0000" stroke-width="1"/><rect x="606" y="543" width="1" height="3" fill="#ff0000"/><rect x="603.5" y="525.5" width="6" height="17" fill="none" stroke="#ff0000" stroke-width="1"/><rect x="615" y="490" width="1" height="12" fill="#ff0000"/><rect x="615" y="524" width="1" height="7" fill="#ff0000"/><rect x="612.5" y="502.5" width="6" height="21" fill="none" stroke="#ff0000" stroke-width="1"/><rect x="624" y="484" width="1" height="18" fill="#54ffff"/><rect x="624" y="518" width="1" height="17" fill="#54ffff"/><rect x="621" y="502" width="7" height="16" fill="#54ffff"/><rect x="632" y="518" width="1" height="28" fill="#ff0000"/><rect x="629.5" y="484.5" width="6" height="33" fill="none" stroke="#ff0000" stroke-width="1"/><rect x="641" y="467" width="1" height="12" fill="#54ffff"/><rect x="641" y="501" width="1" height="6" fill="#54ffff"/><rect x="638" y="479" width="7" height="22" fill="#54ffff"/><rect x="650" y="512" width="1" height="36" fill="#54ffff"/><rect x="647" y="502" width="7" height="10" fill="#54ffff"/><rect x="659" y="503" width="1" height="16" fill="#54ffff"/><rect x="659" y="548" width="1" height="17" fill="#54ffff"/><rect x="656" y="519" width="7" height="29" fill="#54ffff"/><rect x="668" y="437" width="1" height="7" fill="#ff0000"/><rect x="665.5" y="444.5" width="6" height="97" fill="none" stroke="#ff0000" stroke-width="1"/><rect x="677" y="437" width="1" height="7" fill="#54ffff"/><rect x="674" y="444" width="7" height="34" fill="#54ffff"/><rect x="686" y="448" width="1" height="13" fill="#ff0000"/><rect x="686" y="466" width="1" height="18" fill="#ff0000"/><rect x="683.5" y="461.5" width="6" height="4" fill="none" stroke="#ff0000" stroke-width="1"/><rect x="694" y="408" width="1" height="18" fill="#ff0000"/><rect x="691.5" y="426.5" width="6" height="21" fill="none" stroke="#ff0000" stroke-width="1"/><rect x="703" y="391" width="1" height="35" fill="#54ffff"/><rect x="700" y="426" width="7" height="10" fill="#54ffff"/><rect x="712" y="420" width="1" height="11" fill="#54ffff"/><rect x="712" y="436" width="1" height="25" fill="#54ffff"/><rect x="709" y="431" width="7" height="5" fill="#54ffff"/><rect x="718.5" y="414.5" width="6" height="27" fill="none" stroke="#ff0000" stroke-width="1"/><rect x="727.5" y="385.5" width="6" height="34" fill="none" stroke="#ff0000" stroke-width="1"/><rect x="739" y="379" width="1" height="6" fill="#54ffff"/><rect x="739" y="400" width="1" height="20" fill="#54ffff"/><rect x="736" y="385" width="7" height="15" fill="#54ffff"/><rect x="748" y="408" width="1" height="4" fill="#ff0000"/><rect x="745.5" y="367.5" width="6" height="40" fill="none" stroke="#ff0000" stroke-width="1"/><rect x="756" y="355" width="1" height="12" fill="#54ffff"/><rect x="753" y="367" width="7" height="11" fill="#54ffff"/><rect x="765" y="350" width="1" height="11" fill="#ff0000"/><rect x="765" y="378" width="1" height="17" fill="#ff0000"/><rect x="762.5" y="361.5" width="6" height="16" fill="none" stroke="#ff0000" stroke-width="1"/><rect x="774" y="344" width="1" height="6" fill="#ff0000"/><rect x="774" y="355" width="1" height="23" fill="#ff0000"/><rect x="771.5" y="350.5" width="6" height="4" fill="none" stroke="#ff0000" stroke-width="1"/><rect x="783" y="327" width="1" height="5" fill="#ff0000"/><rect x="783" y="349" width="1" height="11" fill="#ff0000"/><rect x="780.5" y="332.5" width="6" height="16" fill="none" stroke="#ff0000" stroke-width="1"/><rect x="792" y="326" width="1" height="6" fill="#54ffff"/><rect x="792" y="344" width="1" height="22" fill="#54ffff"/><rect x="789" y="332" width="7" height="12" fill="#54ffff"/><rect x="801" y="332" width="1" height="6" fill="#ff0000"/><rect x="801" y="340" width="1" height="9" fill="#ff0000"/><rect x="798.5" y="338.5" width="6" height="1" fill="none" stroke="#ff0000" stroke-width="1"/><rect x="809" y="332" width="1" height="6" fill="#54ffff"/><rect x="809" y="344" width="1" height="17" fill="#54ffff"/><rect x="806" y="338" width="7" height="6" fill="#54ffff"/><rect x="818" y="338" width="1" height="6" fill="#54ffff"/><rect x="818" y="349" width="1" height="17" fill="#54ffff"/><rect x="815" y="344" width="7" height="5" fill="#54ffff"/><rect x="827" y="286" width="1" height="18" fill="#ff0000"/><rect x="824.5" y="304.5" width="6" height="44" fill="none" stroke="#ff0000" stroke-width="1"/><rect x="836" y="286" width="1" height="5" fill="#54ffff"/><rect x="836" y="296" width="1" height="18" fill="#54ffff"/><rect x="833" y="291" width="7" height="5" fill="#54ffff"/><rect x="845" y="286" width="1" height="12" fill="#54ffff"/><rect x="845" y="303" width="1" height="17" fill="#54ffff"/><rect x="842" y="298" width="7" height="5" fill="#54ffff"/><rect x="854" y="256" width="1" height="6" fill="#ff0000"/><rect x="851.5" y="262.5" width="6" height="45" fill="none" stroke="#ff0000" stroke-width="1"/><rect x="863" y="258" width="1" height="4" fill="#54ffff"/><rect x="863" y="268" width="1" height="10" fill="#54ffff"/><rect x="860" y="262" width="7" height="6" fill="#54ffff"/><rect x="871" y="278" width="1" height="18" fill="#54ffff"/><rect x="868" y="256" width="7" height="22" fill="#54ffff"/><rect x="880" y="257" width="1" height="10" fill="#ff0000"/><rect x="880" y="269" width="1" height="3" fill="#ff0000"/><rect x="877.5" y="267.5" width="6" height="1" fill="none" stroke="#ff0000" stroke-width="1"/><rect x="889" y="256" width="1" height="6" fill="#ff0000"/><rect x="889" y="267" width="1" height="11" fill="#ff0000"/><rect x="886.5" y="262.5" width="6" height="4" fill="none" stroke="#ff0000" stroke-width="1"/><rect x="898" y="256" width="1" height="6" fill="#54ffff"/><rect x="895" y="262" width="7" height="22" fill="#54ffff"/><rect x="907" y="273" width="1" height="13" fill="#54ffff"/><rect x="904" y="286" width="7" height="52" fill="#54ffff"/><rect x="916" y="320" width="1" height="6" fill="#ff0000"/><rect x="916" y="338" width="1" height="6" fill="#ff0000"/><rect x="913.5" y="326.5" width="6" height="11" fill="none" stroke="#ff0000" stroke-width="1"/><rect x="925" y="291" width="1" height="7" fill="#ff0000"/><rect x="922.5" y="298.5" width="6" height="33" fill="none" stroke="#ff0000" stroke-width="1"/><rect x="933" y="302" width="1" height="18" fill="#ff0000"/><rect x="930.5" y="286.5" width="6" height="15" fill="none" stroke="#ff0000" stroke-width="1"/><rect x="942" y="209" width="1" height="6" fill="#ff0000"/><rect x="942" y="284" width="1" height="6" fill="#ff0000"/><rect x="939.5" y="215.5" width="6" height="68" fill="none" stroke="#ff0000" stroke-width="1"/><rect x="951" y="208" width="1" height="24" fill="#ff0000"/><rect x="948.5" y="198.5" width="6" height="9" fill="none" stroke="#ff0000" stroke-width="1"/><rect x="960" y="226" width="1" height="35" fill="#54ffff"/><rect x="957" y="192" width="7" height="34" fill="#54ffff"/><rect x="969" y="175" width="1" height="11" fill="#ff0000"/><rect x="966.5" y="186.5" width="6" height="39" fill="none" stroke="#ff0000" stroke-width="1"/><rect x="978" y="169" width="1" height="6" fill="#ff0000"/><rect x="978" y="185" width="1" height="12" fill="#ff0000"/><rect x="975.5" y="175.5" width="6" height="9" fill="none" stroke="#ff0000" stroke-width="1"/><rect x="986" y="179" width="1" height="6" fill="#ff0000"/><rect x="983.5" y="157.5" width="6" height="21" fill="none" stroke="#ff0000" stroke-width="1"/><rect x="995" y="179" width="1" height="12" fill="#54ffff"/><rect x="992" y="157" width="7" height="22" fill="#54ffff"/><rect x="1004" y="175" width="1" height="11" fill="#54ffff"/><rect x="1004" y="197" width="1" height="6" fill="#54ffff"/><rect x="1001" y="186" width="7" height="11" fill="#54ffff"/><rect x="1013" y="186" width="1" height="6" fill="#54ffff"/><rect x="1010" y="192" width="7" height="11" fill="#54ffff"/><rect x="1022" y="197" width="1" height="12" fill="#54ffff"/><rect x="1022" y="237" width="1" height="12" fill="#54ffff"/><rect x="1019" y="209" width="7" height="28" fill="#54ffff"/><rect x="1031" y="232" width="1" height="12" fill="#54ffff"/><rect x="1028" y="244" width="7" height="18" fill="#54ffff"/><rect x="1040" y="256" width="1" height="40" fill="#54ffff"/><rect x="1037" y="238" width="7" height="18" fill="#54ffff"/><rect x="1048" y="238" width="1" height="18" fill="#54ffff"/><rect x="1045" y="256" width="7" height="40" fill="#54ffff"/><rect x="1057" y="286" width="1" height="18" fill="#54ffff"/><rect x="1057" y="338" width="1" height="6" fill="#54ffff"/><rect x="1054" y="304" width="7" height="34" fill="#54ffff"/><rect x="1066" y="332" width="1" height="6" fill="#54ffff"/><rect x="1066" y="366" width="1" height="18" fill="#54ffff"/><rect x="1063" y="338" width="7" height="28" fill="#54ffff"/><rect x="1075" y="344" width="1" height="23" fill="#54ffff"/><rect x="1072" y="367" width="7" height="40" fill="#54ffff"/><rect x="1084" y="379" width="1" height="29" fill="#54ffff"/><rect x="1081" y="408" width="7" height="28" fill="#54ffff"/><rect x="1093" y="379" width="1" height="18" fill="#ff0000"/><rect x="1090.5" y="397.5" width="6" height="27" fill="none" stroke="#ff0000" stroke-width="1"/><rect x="1102" y="384" width="1" height="6" fill="#54ffff"/><rect x="1102" y="401" width="1" height="19" fill="#54ffff"/><rect x="1099" y="390" width="7" height="11" fill="#54ffff"/><rect x="1110" y="373" width="1" height="23" fill="#ff0000"/><rect x="1110" y="401" width="1" height="13" fill="#ff0000"/><rect x="1107.5" y="396.5" width="6" height="4" fill="none" stroke="#ff0000" stroke-width="1"/><rect x="1116" y="390" width="7" height="76" fill="#54ffff"/><rect x="1128" y="437" width="1" height="12" fill="#ff0000"/><rect x="1128" y="454" width="1" height="12" fill="#ff0000"/><rect x="1125.5" y="449.5" width="6" height="4" fill="none" stroke="#ff0000" stroke-width="1"/><rect x="1137" y="454" width="1" height="29" fill="#ff0000"/><rect x="1134.5" y="420.5" width="6" height="33" fill="none" stroke="#ff0000" stroke-width="1"/><rect x="1146" y="402" width="1" height="6" fill="#ff0000"/><rect x="1143.5" y="408.5" width="6" height="27" fill="none" stroke="#ff0000" stroke-width="1"/><rect x="1155" y="396" width="1" height="18" fill="#54ffff"/><rect x="1155" y="448" width="1" height="6" fill="#54ffff"/><rect x="1152" y="414" width="7" height="34" fill="#54ffff"/><rect x="1163" y="431" width="1" height="11" fill="#54ffff"/><rect x="1160" y="442" width="7" height="30" fill="#54ffff"/><rect x="1172" y="454" width="1" height="12" fill="#ff0000"/><rect x="1172" y="468" width="1" height="10" fill="#ff0000"/><rect x="1169.5" y="466.5" width="6" height="1" fill="none" stroke="#ff0000" stroke-width="1"/><rect x="1181" y="467" width="1" height="5" fill="#54ffff"/><rect x="1178" y="472" width="7" height="40" fill="#54ffff"/><rect x="1190" y="496" width="1" height="6" fill="#ff0000"/><rect x="1190" y="506" width="1" height="18" fill="#ff0000"/><rect x="1187.5" y="502.5" width="6" height="3" fill="none" stroke="#ff0000" stroke-width="1"/><rect x="1199" y="467" width="1" height="29" fill="#54ffff"/><rect x="1199" y="512" width="1" height="6" fill="#54ffff"/><rect x="1196" y="496" width="7" height="16" fill="#54ffff"/><rect x="1208" y="484" width="1" height="18" fill="#54ffff"/><rect x="1208" y="512" width="1" height="19" fill="#54ffff"/><rect x="1205" y="502" width="7" height="10" fill="#54ffff"/><rect x="1217" y="512" width="1" height="12" fill="#ff0000"/><rect x="1214.5" y="449.5" width="6" height="62" fill="none" stroke="#ff0000" stroke-width="1"/><rect x="1225" y="390" width="1" height="12" fill="#ff0000"/><rect x="1225" y="442" width="1" height="6" fill="#ff0000"/><rect x="1222.5" y="402.5" width="6" height="39" fill="none" stroke="#ff0000" stroke-width="1"/><rect x="1234" y="401" width="1" height="35" fill="#ff0000"/><rect x="1231.5" y="396.5" width="6" height="4" fill="none" stroke="#ff0000" stroke-width="1"/><rect x="1243" y="385" width="1" height="17" fill="#54ffff"/><rect x="1243" y="404" width="1" height="21" fill="#54ffff"/><rect x="1240" y="402" width="7" height="2" fill="#54ffff"/><rect x="1252" y="414" width="1" height="22" fill="#54ffff"/><rect x="1249" y="408" width="7" height="6" fill="#54ffff"/><rect x="1261" y="420" width="1" height="5" fill="#ff0000"/><rect x="1258.5" y="379.5" width="6" height="40" fill="none" stroke="#ff0000" stroke-width="1"/><rect x="1270" y="326" width="1" height="6" fill="#ff0000"/><rect x="1267.5" y="332.5" width="6" height="45" fill="none" stroke="#ff0000" stroke-width="1"/><rect x="1279" y="291" width="1" height="12" fill="#ff0000"/><rect x="1276.5" y="303.5" width="6" height="34" fill="none" stroke="#ff0000" stroke-width="1"/><rect x="1287" y="291" width="1" height="12" fill="#54ffff"/><rect x="1284" y="303" width="7" height="11" fill="#54ffff"/><rect x="1296" y="303" width="1" height="17" fill="#54ffff"/><rect x="1296" y="326" width="1" height="12" fill="#54ffff"/><rect x="1293" y="320" width="7" height="6" fill="#54ffff"/><rect x="1305" y="280" width="1" height="11" fill="#ff0000"/><rect x="1305" y="313" width="1" height="30" fill="#ff0000"/><rect x="1302.5" y="291.5" width="6" height="21" fill="none" stroke="#ff0000" stroke-width="1"/><rect x="1314" y="285" width="1" height="6" fill="#54ffff"/><rect x="1314" y="343" width="1" height="11" fill="#54ffff"/><rect x="1311" y="291" width="7" height="52" fill="#54ffff"/><rect x="1323" y="297" width="1" height="29" fill="#ff0000"/><rect x="1323" y="337" width="1" height="13" fill="#ff0000"/><rect x="1320.5" y="326.5" width="6" height="10" fill="none" stroke="#ff0000" stroke-width="1"/><rect x="1332" y="309" width="1" height="5" fill="#ff0000"/><rect x="1332" y="326" width="1" height="11" fill="#ff0000"/><rect x="1329.5" y="314.5" width="6" height="11" fill="none" stroke="#ff0000" stroke-width="1"/><rect x="1340" y="309" width="1" height="5" fill="#54ffff"/><rect x="1340" y="332" width="1" height="18" fill="#54ffff"/><rect x="1337" y="314" width="7" height="18" fill="#54ffff"/><rect x="1349" y="367" width="1" height="12" fill="#54ffff"/><rect x="1346" y="332" width="7" height="35" fill="#54ffff"/><rect x="1358" y="314" width="1" height="47" fill="#ff0000"/><rect x="1355.5" y="361.5" width="6" height="5" fill="none" stroke="#ff0000" stroke-width="1"/><rect x="1367" y="339" width="1" height="16" fill="#ff0000"/><rect x="1367" y="357" width="1" height="16" fill="#ff0000"/><rect x="1364.5" y="355.5" width="6" height="1" fill="none" stroke="#ff0000" stroke-width="1"/><rect x="1376" y="344" width="1" height="11" fill="#54ffff"/><rect x="1373" y="355" width="7" height="93" fill="#54ffff"/><rect x="1385" y="438" width="1" height="5" fill="#ff0000"/><rect x="1385" y="454" width="1" height="6" fill="#ff0000"/><rect x="1382.5" y="443.5" width="6" height="10" fill="none" stroke="#ff0000" stroke-width="1"/><rect x="1394" y="408" width="1" height="34" fill="#54ffff"/><rect x="1394" y="444" width="1" height="16" fill="#54ffff"/><rect x="1391" y="442" width="7" height="2" fill="#54ffff"/><rect x="1402" y="402" width="1" height="6" fill="#ff0000"/><rect x="1399.5" y="408.5" width="6" height="34" fill="none" stroke="#ff0000" stroke-width="1"/><rect x="1411" y="356" width="1" height="11" fill="#ff0000"/><rect x="1411" y="407" width="1" height="6" fill="#ff0000"/><rect x="1408.5" y="367.5" width="6" height="39" fill="none" stroke="#ff0000" stroke-width="1"/><rect x="1420" y="361" width="1" height="6" fill="#54ffff"/><rect x="1420" y="395" width="1" height="25" fill="#54ffff"/><rect x="1417" y="367" width="7" height="28" fill="#54ffff"/><rect x="1429" y="361" width="1" height="29" fill="#54ffff"/><rect x="1426" y="390" width="7" height="5" fill="#54ffff"/><rect x="1438" y="373" width="1" height="35" fill="#54ffff"/><rect x="1435" y="408" width="7" height="12" fill="#54ffff"/><rect x="1447" y="402" width="1" height="6" fill="#54ffff"/><rect x="1447" y="460" width="1" height="7" fill="#54ffff"/><rect x="1444" y="408" width="7" height="52" fill="#54ffff"/><rect x="1456" y="455" width="1" height="6" fill="#54ffff"/><rect x="1456" y="467" width="1" height="17" fill="#54ffff"/><rect x="1453" y="461" width="7" height="6" fill="#54ffff"/><rect x="1464" y="443" width="1" height="30" fill="#54ffff"/><rect x="1461" y="473" width="7" height="45" fill="#54ffff"/><rect x="1470.5" y="455.5" width="6" height="68" fill="none" stroke="#ff0000" stroke-width="1"/><rect x="1482" y="420" width="1" height="23" fill="#ff0000"/><rect x="1482" y="454" width="1" height="11" fill="#ff0000"/><rect x="1479.5" y="443.5" width="6" height="10" fill="none" stroke="#ff0000" stroke-width="1"/><rect x="1491" y="443" width="1" height="6" fill="#54ffff"/><rect x="1491" y="467" width="1" height="17" fill="#54ffff"/><rect x="1488" y="449" width="7" height="18" fill="#54ffff"/><rect x="1500" y="431" width="1" height="7" fill="#ff0000"/><rect x="1500" y="466" width="1" height="18" fill="#ff0000"/><rect x="1497.5" y="438.5" width="6" height="27" fill="none" stroke="#ff0000" stroke-width="1"/><rect x="1509" y="408" width="1" height="19" fill="#ff0000"/><rect x="1509" y="436" width="1" height="12" fill="#ff0000"/><rect x="1506.5" y="427.5" width="6" height="8" fill="none" stroke="#ff0000" stroke-width="1"/><rect x="1517" y="414" width="1" height="6" fill="#54ffff"/><rect x="1514" y="420" width="7" height="64" fill="#54ffff"/><rect x="1526" y="408" width="1" height="23" fill="#ff0000"/><rect x="1526" y="472" width="1" height="5" fill="#ff0000"/><rect x="1523.5" y="431.5" width="6" height="40" fill="none" stroke="#ff0000" stroke-width="1"/><rect x="1535" y="361" width="1" height="25" fill="#ff0000"/><rect x="1532.5" y="386.5" width="6" height="38" fill="none" stroke="#ff0000" stroke-width="1"/><rect x="1544" y="373" width="1" height="12" fill="#54ffff"/><rect x="1544" y="387" width="1" height="8" fill="#54ffff"/><rect x="1541" y="385" width="7" height="2" fill="#54ffff"/><rect x="1553" y="332" width="1" height="6" fill="#ff0000"/><rect x="1550.5" y="338.5" width="6" height="40" fill="none" stroke="#ff0000" stroke-width="1"/><rect x="1562" y="326" width="1" height="24" fill="#54ffff"/><rect x="1562" y="379" width="1" height="11" fill="#54ffff"/><rect x="1559" y="350" width="7" height="29" fill="#54ffff"/><rect x="1571" y="344" width="1" height="12" fill="#ff0000"/><rect x="1571" y="379" width="1" height="11" fill="#ff0000"/><rect x="1568.5" y="356.5" width="6" height="22" fill="none" stroke="#ff0000" stroke-width="1"/><rect x="1579" y="309" width="1" height="35" fill="#ff0000"/><rect x="1579" y="350" width="1" height="17" fill="#ff0000"/><rect x="1576.5" y="344.5" width="6" height="5" fill="none" stroke="#ff0000" stroke-width="1"/><rect x="1588" y="326" width="1" height="12" fill="#54ffff"/><rect x="1588" y="350" width="1" height="6" fill="#54ffff"/><rect x="1585" y="338" width="7" height="12" fill="#54ffff"/><rect x="1597" y="361" width="1" height="53" fill="#54ffff"/><rect x="1594" y="356" width="7" height="5" fill="#54ffff"/><rect x="597" y="156" width="1" height="470" fill="#fff"/><rect x="248" y="442" width="1363" height="1" fill="#fff"/><path d="M390 545L394.5 536L399 545z" fill="#ff0000"/><rect x="389" y="545" width="11" height="2" fill="#00e000"/><text x="384" y="558" fill="#c8c8c8" style="font-family:'Liberation Mono',monospace;font-size:13px;letter-spacing:-0.8px;font-size:11px;letter-spacing:-1px" textLength="20.0" lengthAdjust="spacingAndGlyphs">开多</text><text x="387" y="570" fill="#c8c8c8" style="font-family:'Liberation Mono',monospace;font-size:13px;letter-spacing:-0.8px;font-size:10px">1</text><path d="M416 562L420.5 553L425 562z" fill="#ff0000"/><rect x="415" y="562" width="11" height="2" fill="#00e000"/><text x="410" y="575" fill="#c8c8c8" style="font-family:'Liberation Mono',monospace;font-size:13px;letter-spacing:-0.8px;font-size:11px;letter-spacing:-1px" textLength="20.0" lengthAdjust="spacingAndGlyphs">开多</text><text x="413" y="587" fill="#c8c8c8" style="font-family:'Liberation Mono',monospace;font-size:13px;letter-spacing:-0.8px;font-size:10px">1</text><path d="M407 500L411.5 510L416 500z" fill="#ff0000"/><rect x="411" y="495" width="1" height="5" fill="#00e000"/><text x="401" y="495" fill="#c8c8c8" style="font-family:'Liberation Mono',monospace;font-size:13px;letter-spacing:-0.8px;font-size:11px;letter-spacing:-1px" textLength="20.0" lengthAdjust="spacingAndGlyphs">平多</text><text x="402" y="483" fill="#c8c8c8" style="font-family:'Liberation Mono',monospace;font-size:13px;letter-spacing:-0.8px;font-size:10px">-1</text><path d="M513 483L517.5 493L522 483z" fill="#ff0000"/><rect x="517" y="478" width="1" height="5" fill="#00e000"/><text x="507" y="478" fill="#c8c8c8" style="font-family:'Liberation Mono',monospace;font-size:13px;letter-spacing:-0.8px;font-size:11px;letter-spacing:-1px" textLength="20.0" lengthAdjust="spacingAndGlyphs">平多</text><text x="508" y="466" fill="#c8c8c8" style="font-family:'Liberation Mono',monospace;font-size:13px;letter-spacing:-0.8px;font-size:10px">-1</text><path d="M593 557L597.5 548L602 557z" fill="#ff0000"/><rect x="592" y="557" width="11" height="2" fill="#00e000"/><text x="587" y="571" fill="#c8c8c8" style="font-family:'Liberation Mono',monospace;font-size:13px;letter-spacing:-0.8px;font-size:11px;letter-spacing:-1px" textLength="20.0" lengthAdjust="spacingAndGlyphs">开多</text><text x="590" y="583" fill="#c8c8c8" style="font-family:'Liberation Mono',monospace;font-size:13px;letter-spacing:-0.8px;font-size:10px">1</text><path d="M894 243L898.5 253L903 243z" fill="#ff0000"/><rect x="898" y="238" width="1" height="5" fill="#00e000"/><text x="888" y="239" fill="#c8c8c8" style="font-family:'Liberation Mono',monospace;font-size:13px;letter-spacing:-0.8px;font-size:11px;letter-spacing:-1px" textLength="20.0" lengthAdjust="spacingAndGlyphs">平多</text><text x="889" y="227" fill="#c8c8c8" style="font-family:'Liberation Mono',monospace;font-size:13px;letter-spacing:-0.8px;font-size:10px">-1</text><path d="M947 248L951.5 239L956 248z" fill="#ff0000"/><rect x="946" y="248" width="11" height="2" fill="#00e000"/><text x="941" y="260" fill="#c8c8c8" style="font-family:'Liberation Mono',monospace;font-size:13px;letter-spacing:-0.8px;font-size:11px;letter-spacing:-1px" textLength="20.0" lengthAdjust="spacingAndGlyphs">开多</text><text x="944" y="272" fill="#c8c8c8" style="font-family:'Liberation Mono',monospace;font-size:13px;letter-spacing:-0.8px;font-size:10px">1</text><path d="M1018 184L1022.5 194L1027 184z" fill="#ff0000"/><rect x="1022" y="179" width="1" height="5" fill="#00e000"/><text x="1012" y="180" fill="#c8c8c8" style="font-family:'Liberation Mono',monospace;font-size:13px;letter-spacing:-0.8px;font-size:11px;letter-spacing:-1px" textLength="20.0" lengthAdjust="spacingAndGlyphs">平多</text><text x="1013" y="168" fill="#c8c8c8" style="font-family:'Liberation Mono',monospace;font-size:13px;letter-spacing:-0.8px;font-size:10px">-1</text><path d="M1222 462L1226.5 453L1231 462z" fill="#ff0000"/><rect x="1221" y="462" width="11" height="2" fill="#00e000"/><text x="1216" y="477" fill="#c8c8c8" style="font-family:'Liberation Mono',monospace;font-size:13px;letter-spacing:-0.8px;font-size:11px;letter-spacing:-1px" textLength="20.0" lengthAdjust="spacingAndGlyphs">开多</text><text x="1219" y="489" fill="#c8c8c8" style="font-family:'Liberation Mono',monospace;font-size:13px;letter-spacing:-0.8px;font-size:10px">1</text><path d="M1372 331L1376.5 341L1381 331z" fill="#ff0000"/><rect x="1376" y="326" width="1" height="5" fill="#00e000"/><text x="1366" y="325" fill="#c8c8c8" style="font-family:'Liberation Mono',monospace;font-size:13px;letter-spacing:-0.8px;font-size:11px;letter-spacing:-1px" textLength="20.0" lengthAdjust="spacingAndGlyphs">平多</text><text x="1367" y="313" fill="#c8c8c8" style="font-family:'Liberation Mono',monospace;font-size:13px;letter-spacing:-0.8px;font-size:10px">-1</text><path d="M1522 492L1526.5 483L1531 492z" fill="#ff0000"/><rect x="1521" y="492" width="11" height="2" fill="#00e000"/><text x="1516" y="506" fill="#c8c8c8" style="font-family:'Liberation Mono',monospace;font-size:13px;letter-spacing:-0.8px;font-size:11px;letter-spacing:-1px" textLength="20.0" lengthAdjust="spacingAndGlyphs">开多</text><text x="1519" y="518" fill="#c8c8c8" style="font-family:'Liberation Mono',monospace;font-size:13px;letter-spacing:-0.8px;font-size:10px">1</text><text x="940" y="168" fill="#e0e0e0" style="font-family:'Liberation Mono',monospace;font-size:13px;letter-spacing:-0.8px">30395</text><path d="M976 163q8-6 18-6" stroke="#ccc" fill="none"/><text x="498" y="622" fill="#e0e0e0" style="font-family:'Liberation Mono',monospace;font-size:13px;letter-spacing:-0.8px">30315</text><path d="M534 618l6 4" stroke="#ccc" fill="none"/><rect x="250" y="163" width="11" height="8" fill="#00ff00"/><path d="M252.5 163v-3a3 3 0 0 1 6 0v3" stroke="#00ff00" stroke-width="1.5" fill="none"/><rect x="255" y="166" width="1" height="2" fill="#ff0"/><circle cx="256" cy="183" r="6.5" fill="#ffec00" stroke="#ff2a00" stroke-width="1"/><rect x="253" y="179" width="1.5" height="3" fill="#c00"/><rect x="257.5" y="179" width="1.5" height="3" fill="#c00"/><path d="M252.5 184.5q3.5 3.5 7 0" stroke="#c00" stroke-width="1.3" fill="none"/><rect x="247" y="116" width="1" height="855" fill="#ff0000"/><rect x="247" y="116" width="1593" height="1" fill="#ff0000"/><rect x="1611" y="116" width="1" height="541" fill="#ff0000"/><rect x="1653" y="116" width="1" height="855" fill="#ff0000"/><rect x="247" y="639" width="1406" height="1" fill="#ff0000"/><rect x="247" y="657" width="1406" height="1" fill="#ff0000"/><rect x="247" y="838" width="1406" height="1" fill="#ff0000"/><rect x="252" y="640" width="1" height="17" fill="#ff0000"/><rect x="366" y="640" width="1" height="17" fill="#ff0000"/><rect x="517" y="640" width="1" height="17" fill="#ff0000"/><rect x="932" y="640" width="1" height="17" fill="#ff0000"/><rect x="1118" y="640" width="1" height="17" fill="#ff0000"/><rect x="1252" y="640" width="1" height="17" fill="#ff0000"/><rect x="1428" y="640" width="1" height="17" fill="#ff0000"/><rect x="1571" y="640" width="1" height="17" fill="#ff0000"/><text x="254" y="653" fill="#ff0000" style="font-family:'Liberation Mono',monospace;font-size:13px;letter-spacing:-0.8px">04/23</text><text x="368" y="653" fill="#ff0000" style="font-family:'Liberation Mono',monospace;font-size:13px;letter-spacing:-0.8px">09:47(14:47)</text><text x="519" y="653" fill="#ff0000" style="font-family:'Liberation Mono',monospace;font-size:13px;letter-spacing:-0.8px">09:52(14:52</text><text x="932" y="653" fill="#ff0000" style="font-family:'Liberation Mono',monospace;font-size:13px;letter-spacing:-0.8px">10:00(15:00)</text><text x="1120" y="653" fill="#ff0000" style="font-family:'Liberation Mono',monospace;font-size:13px;letter-spacing:-0.8px">10:02(15:02)</text><text x="1254" y="653" fill="#ff0000" style="font-family:'Liberation Mono',monospace;font-size:13px;letter-spacing:-0.8px">10:04(15:04)</text><text x="1430" y="653" fill="#ff0000" style="font-family:'Liberation Mono',monospace;font-size:13px;letter-spacing:-0.8px">10:09(15:09)</text><text x="1617" y="653" fill="#ff0000" style="font-family:'Liberation Mono',monospace;font-size:13px;letter-spacing:-0.8px" textLength="27.0" lengthAdjust="spacingAndGlyphs">50笔</text><rect x="598" y="640" width="106" height="17" fill="#10108c"/><text x="599" y="653" fill="#fff" style="font-family:'Liberation Mono',monospace;font-size:13px;letter-spacing:-0.8px">09:53:47(14:53)</text><text x="706" y="653" fill="#ff0000" style="font-family:'Liberation Mono',monospace;font-size:13px;letter-spacing:-0.8px">(14:56)</text><rect x="1527" y="635" width="84" height="3" fill="#dde3ff"/><rect x="1527" y="637" width="84" height="1" fill="#3a5fd0"/><text x="251" y="130" fill="#ff0000" style="font-family:'Liberation Mono',monospace;font-size:13px;letter-spacing:-0.8px;font-weight:bold">$</text><text x="265" y="130" fill="#e8e8e8" style="font-family:'Liberation Mono',monospace;font-size:13px;letter-spacing:-0.8px" textLength="86.0" lengthAdjust="spacingAndGlyphs">恒指连续(50笔</text><text x="358" y="130" fill="#e8e8e8" style="font-family:'Liberation Mono',monospace;font-size:13px;letter-spacing:-0.8px" textLength="33.0" lengthAdjust="spacingAndGlyphs">复权)</text><text x="395" y="130" fill="#e8e8e8" style="font-family:'Liberation Mono',monospace;font-size:13px;letter-spacing:-0.8px">18/04/23</text><text x="458" y="130" fill="#e8e8e8" style="font-family:'Liberation Mono',monospace;font-size:13px;letter-spacing:-0.8px">09:53(14:53)</text><text x="550" y="130" fill="#e8e8e8" style="font-family:'Liberation Mono',monospace;font-size:13px;letter-spacing:-0.8px" textLength="48.0" lengthAdjust="spacingAndGlyphs">开30330</text><text x="603" y="130" fill="#e8e8e8" style="font-family:'Liberation Mono',monospace;font-size:13px;letter-spacing:-0.8px">↑</text><text x="611" y="130" fill="#ff0000" style="font-family:'Liberation Mono',monospace;font-size:13px;letter-spacing:-0.8px" textLength="48.0" lengthAdjust="spacingAndGlyphs">高30335</text><text x="664" y="130" fill="#e8e8e8" style="font-family:'Liberation Mono',monospace;font-size:13px;letter-spacing:-0.8px">↑</text><text x="672" y="130" fill="#54ffff" style="font-family:'Liberation Mono',monospace;font-size:13px;letter-spacing:-0.8px" textLength="48.0" lengthAdjust="spacingAndGlyphs">低30329</text><text x="723" y="130" fill="#e8e8e8" style="font-family:'Liberation Mono',monospace;font-size:13px;letter-spacing:-0.8px">↑</text><text x="732" y="130" fill="#e8e8e8" style="font-family:'Liberation Mono',monospace;font-size:13px;letter-spacing:-0.8px" textLength="48.0" lengthAdjust="spacingAndGlyphs">收30330</text><text x="785" y="130" fill="#e8e8e8" style="font-family:'Liberation Mono',monospace;font-size:13px;letter-spacing:-0.8px">↓</text><text x="794" y="130" fill="#ffff00" style="font-family:'Liberation Mono',monospace;font-size:13px;letter-spacing:-0.8px" textLength="27.0" lengthAdjust="spacingAndGlyphs">量69</text><text x="827" y="130" fill="#54ffff" style="font-family:'Liberation Mono',monospace;font-size:13px;letter-spacing:-0.8px" textLength="47.0" lengthAdjust="spacingAndGlyphs">额418万</text><text x="882" y="130" fill="#e8e8e8" style="font-family:'Liberation Mono',monospace;font-size:13px;letter-spacing:-0.8px" textLength="48.0" lengthAdjust="spacingAndGlyphs">振0.02%</text><path d="M259 136l-4 5h2.5v5h3v-5h2.5z" fill="#ff0000"/><text x="268" y="146" fill="#f0f0f0" style="font-family:'Liberation Mono',monospace;font-size:13px;letter-spacing:-0.8px" textLength="209.0" lengthAdjust="spacingAndGlyphs">MACD突破零轴价格预测(26,12,9,1)</text><text x="485" y="146" fill="#a8a8a8" style="font-family:'Liberation Mono',monospace;font-size:13px;letter-spacing:-0.8px" textLength="73.0" lengthAdjust="spacingAndGlyphs">当前持仓:1↑</text><text x="565" y="146" fill="#a8a8a8" style="font-family:'Liberation Mono',monospace;font-size:13px;letter-spacing:-0.8px" textLength="101.0" lengthAdjust="spacingAndGlyphs">当前资产:968100</text><rect x="1486" y="117" width="32" height="15" rx="6" fill="#3c3c3c" stroke="#c00000"/><text x="1490" y="129" fill="#ddd" style="font-family:'Liberation Mono',monospace;font-size:13px;letter-spacing:-0.8px;font-size:12px" textLength="24.0" lengthAdjust="spacingAndGlyphs">时段</text><rect x="1526" y="117" width="41" height="15" rx="6" fill="#3c3c3c" stroke="#c00000"/><text x="1529" y="129" fill="#ddd" style="font-family:'Liberation Mono',monospace;font-size:13px;letter-spacing:-0.8px;font-size:12px" textLength="36.0" lengthAdjust="spacingAndGlyphs">补数据</text><circle cx="1581" cy="125" r="6.5" fill="#d8d8d8" stroke="#a00" stroke-width="0.6"/><path d="M1581 120v5h4" stroke="#c00" stroke-width="1.3" fill="none"/><path d="M1599.5 118.5l7 7-7 7-7-7z" fill="#808000" stroke="#f0f000" stroke-width="1.2"/><path d="M1599.5 120.5v6" stroke="#ffff00" stroke-width="2"/><rect x="1599" y="128" width="1.5" height="1.5" fill="#ff0"/><path d="M1617 120h6M1620 118v8M1617 126q3 3 6 0" stroke="#ff0000" stroke-width="1.5" fill="none"/><rect x="1638.5" y="119.5" width="9" height="10" fill="none" stroke="#ff0000"/><rect x="1644" y="120" width="1" height="9" fill="#ff0000"/></svg>
<svg class="a" style="left:0;top:0" width="1865" height="996" viewBox="0 0 1865 996"><rect x="1653" y="144" width="187" height="1" fill="#ff0000"/><rect x="1653" y="167" width="187" height="1" fill="#ff0000"/><rect x="1688" y="167" width="1" height="211" fill="#ff0000"/><rect x="1653" y="273" width="187" height="1" fill="#ff0000"/><rect x="1653" y="379" width="187" height="1" fill="#ff0000"/><rect x="1653" y="542" width="187" height="1" fill="#ff0000"/><rect x="1653" y="566" width="187" height="1" fill="#ff0000"/><text x="1693" y="136" fill="#ffff00" text-anchor="start" style="font-family:'Liberation Sans',sans-serif;font-size:15px;font-weight:bold;">HSI00</text><text x="1740" y="137" fill="#ffff00" text-anchor="start" style="font-family:'Liberation Sans',sans-serif;font-size:17px;font-weight:bold;" textLength="68.0" lengthAdjust="spacingAndGlyphs">恒指连续</text><text x="1656" y="161" fill="#e0e0e0" text-anchor="start" style="font-family:'Liberation Sans',sans-serif;font-size:16px;font-weight:normal;" textLength="31.0" lengthAdjust="spacingAndGlyphs">委比</text><text x="1777" y="161" fill="#e0e0e0" text-anchor="start" style="font-family:'Liberation Sans',sans-serif;font-size:16px;font-weight:normal;" textLength="31.0" lengthAdjust="spacingAndGlyphs">委差</text><text x="1672" y="183" fill="#f0f0f0" text-anchor="middle" style="font-family:'Liberation Sans',sans-serif;font-size:13px;font-weight:bold;">5</text><text x="1672" y="203" fill="#f0f0f0" text-anchor="middle" style="font-family:'Liberation Sans',sans-serif;font-size:13px;font-weight:bold;">4</text><text x="1672" y="223" fill="#f0f0f0" text-anchor="middle" style="font-family:'Liberation Sans',sans-serif;font-size:13px;font-weight:bold;">3</text><text x="1672" y="243" fill="#f0f0f0" text-anchor="middle" style="font-family:'Liberation Sans',sans-serif;font-size:13px;font-weight:bold;">2</text><text x="1672" y="267" fill="#00ff00" text-anchor="middle" style="font-family:'Liberation Sans',sans-serif;font-size:16px;font-weight:normal;" textLength="15.5" lengthAdjust="spacingAndGlyphs">卖</text><text x="1723" y="267" fill="#ff0000" text-anchor="start" style="font-family:'Liberation Sans',sans-serif;font-size:18px;font-weight:bold;">30362</text><text x="1672" y="293" fill="#ff0000" text-anchor="middle" style="font-family:'Liberation Sans',sans-serif;font-size:16px;font-weight:normal;" textLength="15.5" lengthAdjust="spacingAndGlyphs">买</text><text x="1723" y="293" fill="#ff0000" text-anchor="start" style="font-family:'Liberation Sans',sans-serif;font-size:18px;font-weight:bold;">30361</text><text x="1672" y="312" fill="#f0f0f0" text-anchor="middle" style="font-family:'Liberation Sans',sans-serif;font-size:13px;font-weight:bold;">2</text><text x="1672" y="332" fill="#f0f0f0" text-anchor="middle" style="font-family:'Liberation Sans',sans-serif;font-size:13px;font-weight:bold;">3</text><text x="1672" y="352" fill="#f0f0f0" text-anchor="middle" style="font-family:'Liberation Sans',sans-serif;font-size:13px;font-weight:bold;">4</text><text x="1672" y="372" fill="#f0f0f0" text-anchor="middle" style="font-family:'Liberation Sans',sans-serif;font-size:13px;font-weight:bold;">5</text><text x="1656" y="396" fill="#e8e8e8" text-anchor="start" style="font-family:'Liberation Sans',sans-serif;font-size:16px;font-weight:normal;" textLength="31.0" lengthAdjust="spacingAndGlyphs">最新</text><text x="1766" y="395" fill="#ff0000" text-anchor="end" style="font-family:'Liberation Sans',sans-serif;font-size:14px;font-weight:bold;">30362</text><text x="1777" y="396" fill="#e8e8e8" text-anchor="start" style="font-family:'Liberation Sans',sans-serif;font-size:16px;font-weight:normal;" textLength="31.0" lengthAdjust="spacingAndGlyphs">均价</text><text x="1656" y="416" fill="#e8e8e8" text-anchor="start" style="font-family:'Liberation Sans',sans-serif;font-size:16px;font-weight:normal;" textLength="31.0" lengthAdjust="spacingAndGlyphs">涨跌</text><text x="1766" y="415" fill="#ff0000" text-anchor="end" style="font-family:'Liberation Sans',sans-serif;font-size:14px;font-weight:bold;">102</text><text x="1777" y="416" fill="#e8e8e8" text-anchor="start" style="font-family:'Liberation Sans',sans-serif;font-size:16px;font-weight:normal;" textLength="31.0" lengthAdjust="spacingAndGlyphs">前收</text><text x="1656" y="436" fill="#e8e8e8" text-anchor="start" style="font-family:'Liberation Sans',sans-serif;font-size:16px;font-weight:normal;" textLength="31.0" lengthAdjust="spacingAndGlyphs">幅度</text><text x="1766" y="435" fill="#ff0000" text-anchor="end" style="font-family:'Liberation Sans',sans-serif;font-size:14px;font-weight:bold;">+0.34%</text><text x="1777" y="436" fill="#e8e8e8" text-anchor="start" style="font-family:'Liberation Sans',sans-serif;font-size:16px;font-weight:normal;" textLength="31.0" lengthAdjust="spacingAndGlyphs">今开</text><text x="1656" y="456" fill="#e8e8e8" text-anchor="start" style="font-family:'Liberation Sans',sans-serif;font-size:16px;font-weight:normal;" textLength="31.0" lengthAdjust="spacingAndGlyphs">振幅</text><text x="1766" y="455" fill="#e0e0e0" text-anchor="end" style="font-family:'Liberation Sans',sans-serif;font-size:14px;font-weight:bold;">1.18%</text><text x="1777" y="456" fill="#e8e8e8" text-anchor="start" style="font-family:'Liberation Sans',sans-serif;font-size:16px;font-weight:normal;" textLength="31.0" lengthAdjust="spacingAndGlyphs">最高</text><text x="1656" y="476" fill="#e8e8e8" text-anchor="start" style="font-family:'Liberation Sans',sans-serif;font-size:16px;font-weight:normal;" textLength="31.0" lengthAdjust="spacingAndGlyphs">总手</text><text x="1766" y="475" fill="#e0e020" text-anchor="end" style="font-family:'Liberation Sans',sans-serif;font-size:14px;font-weight:bold;">179618</text><text x="1777" y="476" fill="#e8e8e8" text-anchor="start" style="font-family:'Liberation Sans',sans-serif;font-size:16px;font-weight:normal;" textLength="31.0" lengthAdjust="spacingAndGlyphs">最低</text><text x="1656" y="496" fill="#e8e8e8" text-anchor="start" style="font-family:'Liberation Sans',sans-serif;font-size:16px;font-weight:normal;" textLength="31.0" lengthAdjust="spacingAndGlyphs">金额</text><text x="1766" y="495" fill="#00e8f0" text-anchor="end" style="font-family:'Liberation Sans',sans-serif;font-size:14px;font-weight:bold;" textLength="41.2" lengthAdjust="spacingAndGlyphs">60.8亿</text><text x="1777" y="496" fill="#e8e8e8" text-anchor="start" style="font-family:'Liberation Sans',sans-serif;font-size:16px;font-weight:normal;" textLength="31.0" lengthAdjust="spacingAndGlyphs">量比</text><text x="1656" y="516" fill="#e8e8e8" text-anchor="start" style="font-family:'Liberation Sans',sans-serif;font-size:16px;font-weight:normal;" textLength="31.0" lengthAdjust="spacingAndGlyphs">持仓</text><text x="1766" y="515" fill="#e0e020" text-anchor="end" style="font-family:'Liberation Sans',sans-serif;font-size:14px;font-weight:bold;">0</text><text x="1777" y="516" fill="#e8e8e8" text-anchor="start" style="font-family:'Liberation Sans',sans-serif;font-size:16px;font-weight:normal;" textLength="31.0" lengthAdjust="spacingAndGlyphs">增仓</text><text x="1656" y="536" fill="#e8e8e8" text-anchor="start" style="font-family:'Liberation Sans',sans-serif;font-size:16px;font-weight:normal;" textLength="31.0" lengthAdjust="spacingAndGlyphs">总笔</text><text x="1766" y="535" fill="#e0e020" text-anchor="end" style="font-family:'Liberation Sans',sans-serif;font-size:14px;font-weight:bold;">122747</text><text x="1777" y="536" fill="#e8e8e8" text-anchor="start" style="font-family:'Liberation Sans',sans-serif;font-size:16px;font-weight:normal;" textLength="31.0" lengthAdjust="spacingAndGlyphs">均量</text><text x="1656" y="559" fill="#e8e8e8" text-anchor="start" style="font-family:'Liberation Sans',sans-serif;font-size:16px;font-weight:normal;" textLength="31.0" lengthAdjust="spacingAndGlyphs">外盘</text><text x="1766" y="559" fill="#ff0000" text-anchor="end" style="font-family:'Liberation Sans',sans-serif;font-size:14px;font-weight:bold;">90166</text><text x="1777" y="559" fill="#e8e8e8" text-anchor="start" style="font-family:'Liberation Sans',sans-serif;font-size:16px;font-weight:normal;" textLength="31.0" lengthAdjust="spacingAndGlyphs">内盘</text><text x="1690" y="582" fill="#f0f0f0" text-anchor="end" style="font-family:'Liberation Sans',sans-serif;font-size:14px;font-weight:bold;">10:14</text><text x="1766" y="582" fill="#ff0000" text-anchor="end" style="font-family:'Liberation Sans',sans-serif;font-size:14px;font-weight:bold;">30352</text><text x="1834" y="582" fill="#00ff00" text-anchor="end" style="font-family:'Liberation Sans',sans-serif;font-size:14px;font-weight:bold;">3</text><text x="1690" y="601" fill="#f0f0f0" text-anchor="end" style="font-family:'Liberation Sans',sans-serif;font-size:14px;font-weight:bold;">:46</text><text x="1766" y="601" fill="#ff0000" text-anchor="end" style="font-family:'Liberation Sans',sans-serif;font-size:14px;font-weight:bold;">30351</text><text x="1834" y="601" fill="#00ff00" text-anchor="end" style="font-family:'Liberation Sans',sans-serif;font-size:14px;font-weight:bold;">3</text><text x="1690" y="620" fill="#f0f0f0" text-anchor="end" style="font-family:'Liberation Sans',sans-serif;font-size:14px;font-weight:bold;">:46</text><text x="1766" y="620" fill="#ff0000" text-anchor="end" style="font-family:'Liberation Sans',sans-serif;font-size:14px;font-weight:bold;">30351</text><text x="1834" y="620" fill="#00ff00" text-anchor="end" style="font-family:'Liberation Sans',sans-serif;font-size:14px;font-weight:bold;">1</text><text x="1690" y="639" fill="#f0f0f0" text-anchor="end" style="font-family:'Liberation Sans',sans-serif;font-size:14px;font-weight:bold;">:46</text><text x="1766" y="639" fill="#ff0000" text-anchor="end" style="font-family:'Liberation Sans',sans-serif;font-size:14px;font-weight:bold;">30353</text><path d="M1775 632l-2 3h1.5v4h1v-4h1.5z" fill="#ff0000"/><text x="1834" y="639" fill="#ff0000" text-anchor="end" style="font-family:'Liberation Sans',sans-serif;font-size:14px;font-weight:bold;">1</text><text x="1690" y="658" fill="#f0f0f0" text-anchor="end" style="font-family:'Liberation Sans',sans-serif;font-size:14px;font-weight:bold;">:46</text><text x="1766" y="658" fill="#ff0000" text-anchor="end" style="font-family:'Liberation Sans',sans-serif;font-size:14px;font-weight:bold;">30353</text><text x="1834" y="658" fill="#ff0000" text-anchor="end" style="font-family:'Liberation Sans',sans-serif;font-size:14px;font-weight:bold;">2</text><text x="1690" y="677" fill="#f0f0f0" text-anchor="end" style="font-family:'Liberation Sans',sans-serif;font-size:14px;font-weight:bold;">:47</text><text x="1766" y="677" fill="#ff0000" text-anchor="end" style="font-family:'Liberation Sans',sans-serif;font-size:14px;font-weight:bold;">30354</text><text x="1834" y="677" fill="#ff0000" text-anchor="end" style="font-family:'Liberation Sans',sans-serif;font-size:14px;font-weight:bold;">2</text><text x="1690" y="696" fill="#f0f0f0" text-anchor="end" style="font-family:'Liberation Sans',sans-serif;font-size:14px;font-weight:bold;">:47</text><text x="1766" y="696" fill="#ff0000" text-anchor="end" style="font-family:'Liberation Sans',sans-serif;font-size:14px;font-weight:bold;">30353</text><path d="M1775 696l-2 -3h1.5v-4h1v4h1.5z" fill="#00e000"/><text x="1834" y="696" fill="#00ff00" text-anchor="end" style="font-family:'Liberation Sans',sans-serif;font-size:14px;font-weight:bold;">1</text><text x="1690" y="715" fill="#f0f0f0" text-anchor="end" style="font-family:'Liberation Sans',sans-serif;font-size:14px;font-weight:bold;">:47</text><text x="1766" y="715" fill="#ff0000" text-anchor="end" style="font-family:'Liberation Sans',sans-serif;font-size:14px;font-weight:bold;">30353</text><text x="1834" y="715" fill="#00ff00" text-anchor="end" style="font-family:'Liberation Sans',sans-serif;font-size:14px;font-weight:bold;">1</text><text x="1690" y="734" fill="#f0f0f0" text-anchor="end" style="font-family:'Liberation Sans',sans-serif;font-size:14px;font-weight:bold;">:47</text><text x="1766" y="734" fill="#ff0000" text-anchor="end" style="font-family:'Liberation Sans',sans-serif;font-size:14px;font-weight:bold;">30355</text><path d="M1775 727l-2 3h1.5v4h1v-4h1.5z" fill="#ff0000"/><text x="1834" y="734" fill="#ff0000" text-anchor="end" style="font-family:'Liberation Sans',sans-serif;font-size:14px;font-weight:bold;">1</text><text x="1690" y="754" fill="#f0f0f0" text-anchor="end" style="font-family:'Liberation Sans',sans-serif;font-size:14px;font-weight:bold;">:47</text><text x="1766" y="754" fill="#ff0000" text-anchor="end" style="font-family:'Liberation Sans',sans-serif;font-size:14px;font-weight:bold;">30357</text><text x="1834" y="754" fill="#ff0000" text-anchor="end" style="font-family:'Liberation Sans',sans-serif;font-size:14px;font-weight:bold;">2</text><text x="1690" y="773" fill="#f0f0f0" text-anchor="end" style="font-family:'Liberation Sans',sans-serif;font-size:14px;font-weight:bold;">:48</text><text x="1766" y="773" fill="#ff0000" text-anchor="end" style="font-family:'Liberation Sans',sans-serif;font-size:14px;font-weight:bold;">30357</text><path d="M1775 773l-2 -3h1.5v-4h1v4h1.5z" fill="#00e000"/><text x="1834" y="773" fill="#00ff00" text-anchor="end" style="font-family:'Liberation Sans',sans-serif;font-size:14px;font-weight:bold;">1</text><text x="1690" y="792" fill="#f0f0f0" text-anchor="end" style="font-family:'Liberation Sans',sans-serif;font-size:14px;font-weight:bold;">:48</text><text x="1766" y="792" fill="#ff0000" text-anchor="end" style="font-family:'Liberation Sans',sans-serif;font-size:14px;font-weight:bold;">30358</text><path d="M1775 785l-2 3h1.5v4h1v-4h1.5z" fill="#ff0000"/><text x="1834" y="792" fill="#ff0000" text-anchor="end" style="font-family:'Liberation Sans',sans-serif;font-size:14px;font-weight:bold;">2</text><text x="1690" y="811" fill="#f0f0f0" text-anchor="end" style="font-family:'Liberation Sans',sans-serif;font-size:14px;font-weight:bold;">:49</text><text x="1766" y="811" fill="#ff0000" text-anchor="end" style="font-family:'Liberation Sans',sans-serif;font-size:14px;font-weight:bold;">30359</text><text x="1834" y="811" fill="#ff0000" text-anchor="end" style="font-family:'Liberation Sans',sans-serif;font-size:14px;font-weight:bold;">2</text><text x="1690" y="830" fill="#f0f0f0" text-anchor="end" style="font-family:'Liberation Sans',sans-serif;font-size:14px;font-weight:bold;">:50</text><text x="1766" y="830" fill="#ff0000" text-anchor="end" style="font-family:'Liberation Sans',sans-serif;font-size:14px;font-weight:bold;">30359</text><path d="M1775 830l-2 -3h1.5v-4h1v4h1.5z" fill="#00e000"/><text x="1834" y="830" fill="#00ff00" text-anchor="end" style="font-family:'Liberation Sans',sans-serif;font-size:14px;font-weight:bold;">1</text><text x="1690" y="849" fill="#f0f0f0" text-anchor="end" style="font-family:'Liberation Sans',sans-serif;font-size:14px;font-weight:bold;">:51</text><text x="1766" y="849" fill="#ff0000" text-anchor="end" style="font-family:'Liberation Sans',sans-serif;font-size:14px;font-weight:bold;">30358</text><text x="1834" y="849" fill="#00ff00" text-anchor="end" style="font-family:'Liberation Sans',sans-serif;font-size:14px;font-weight:bold;">1</text><text x="1690" y="868" fill="#f0f0f0" text-anchor="end" style="font-family:'Liberation Sans',sans-serif;font-size:14px;font-weight:bold;">:53</text><text x="1766" y="868" fill="#ff0000" text-anchor="end" style="font-family:'Liberation Sans',sans-serif;font-size:14px;font-weight:bold;">30360</text><path d="M1775 861l-2 3h1.5v4h1v-4h1.5z" fill="#ff0000"/><text x="1834" y="868" fill="#ff0000" text-anchor="end" style="font-family:'Liberation Sans',sans-serif;font-size:14px;font-weight:bold;">1</text><text x="1690" y="887" fill="#f0f0f0" text-anchor="end" style="font-family:'Liberation Sans',sans-serif;font-size:14px;font-weight:bold;">:53</text><text x="1766" y="887" fill="#ff0000" text-anchor="end" style="font-family:'Liberation Sans',sans-serif;font-size:14px;font-weight:bold;">30361</text><text x="1834" y="887" fill="#ff0000" text-anchor="end" style="font-family:'Liberation Sans',sans-serif;font-size:14px;font-weight:bold;">1</text><text x="1690" y="906" fill="#f0f0f0" text-anchor="end" style="font-family:'Liberation Sans',sans-serif;font-size:14px;font-weight:bold;">:53</text><text x="1766" y="906" fill="#ff0000" text-anchor="end" style="font-family:'Liberation Sans',sans-serif;font-size:14px;font-weight:bold;">30360</text><path d="M1775 906l-2 -3h1.5v-4h1v4h1.5z" fill="#00e000"/><text x="1834" y="906" fill="#00ff00" text-anchor="end" style="font-family:'Liberation Sans',sans-serif;font-size:14px;font-weight:bold;">1</text><text x="1690" y="925" fill="#f0f0f0" text-anchor="end" style="font-family:'Liberation Sans',sans-serif;font-size:14px;font-weight:bold;">:54</text><text x="1766" y="925" fill="#ff0000" text-anchor="end" style="font-family:'Liberation Sans',sans-serif;font-size:14px;font-weight:bold;">30361</text><path d="M1775 918l-2 3h1.5v4h1v-4h1.5z" fill="#ff0000"/><text x="1834" y="925" fill="#ff0000" text-anchor="end" style="font-family:'Liberation Sans',sans-serif;font-size:14px;font-weight:bold;">1</text><text x="1690" y="944" fill="#f0f0f0" text-anchor="end" style="font-family:'Liberation Sans',sans-serif;font-size:14px;font-weight:bold;">:55</text><text x="1766" y="944" fill="#ff0000" text-anchor="end" style="font-family:'Liberation Sans',sans-serif;font-size:14px;font-weight:bold;">30361</text><text x="1834" y="944" fill="#ff0000" text-anchor="end" style="font-family:'Liberation Sans',sans-serif;font-size:14px;font-weight:bold;">2</text><text x="1690" y="963" fill="#f0f0f0" text-anchor="end" style="font-family:'Liberation Sans',sans-serif;font-size:14px;font-weight:bold;">:55</text><text x="1766" y="963" fill="#ff0000" text-anchor="end" style="font-family:'Liberation Sans',sans-serif;font-size:14px;font-weight:bold;">30362</text><text x="1834" y="963" fill="#ff0000" text-anchor="end" style="font-family:'Liberation Sans',sans-serif;font-size:14px;font-weight:bold;">3</text><rect x="1290" y="831.5" width="82" height="29.5" rx="14.75" fill="#f5f5f5" stroke="#1010f0" stroke-width="1"/><circle cx="1298.5" cy="845.7" r="18" fill="#fff" stroke="#0a0af0" stroke-width="2.4"/><circle cx="1298.3" cy="841.5" r="4.2" fill="none" stroke="#0a0af0" stroke-width="1.4"/><circle cx="1298.3" cy="842" r="10" fill="none" stroke="#0a0af0" stroke-width="1.4"/><path d="M1288.5 857.5q9.8-9 19.6 0" fill="none" stroke="#0a0af0" stroke-width="1.6"/><text x="1322" y="851" fill="#1010e0" text-anchor="start" style="font-family:'Liberation Sans',sans-serif;font-size:13px;font-weight:bold;" textLength="39.0" lengthAdjust="spacingAndGlyphs">未开启</text></svg>
<svg class="a" style="left:1843px;top:35px" width="11" height="8"><path d="M1 7l4.5-4.5L10 7" stroke="#555" stroke-width="1.8" fill="none"/></svg>
<svg class="a" style="left:1843px;top:958px" width="11" height="8"><path d="M1 1l4.5 4.5L10 1" stroke="#555" stroke-width="1.8" fill="none"/></svg>
<svg class="a" style="left:12px;top:974px" width="8" height="11"><path d="M7 1L2.5 5.5 7 10" stroke="#555" stroke-width="1.8" fill="none"/></svg>
<svg class="a" style="left:1828px;top:974px" width="8" height="11"><path d="M1 1l4.5 4.5L1 10" stroke="#555" stroke-width="1.8" fill="none"/></svg>
<div class="a" style="left:382px;top:665px;width:871px;height:306px;box-sizing:border-box;border:1px solid #1883d7;border-bottom:none;background:#f0f0f0"></div>
<div class="a" style="left:383px;top:666px;width:869px;height:30px;background:#fff;"></div>
<svg class="a" style="left:391px;top:673px" width="16" height="14" viewBox="0 0 16 14"><rect x="0.5" y="0.5" width="15" height="13" fill="#e8e8e8" stroke="#b0b0b0"/><rect x="2" y="3" width="5" height="9" fill="#3c7a8c"/><rect x="2" y="3" width="5" height="4" fill="#6aa0c8"/><rect x="9" y="3" width="5" height="9" fill="#dfe6ea"/></svg>
<div class="a t" style="top:672.0px;height:16px;line-height:16px;font-size:12px;color:#111;font-weight:normal;font-family:'Liberation Sans',sans-serif;left:412px;"><span class="c" style="width:12px">远</span><span class="c" style="width:12px">程</span><span class="c" style="width:12px">预</span><span class="c" style="width:12px">警</span><span class="c" style="width:12px">记</span><span class="c" style="width:12px">录</span></div>
<div class="a" style="left:1132px;top:680px;width:11px;height:1px;background:#111;"></div>
<div class="a" style="left:1177px;top:674px;width:11px;height:11px;box-sizing:border-box;border:1px solid #111"></div>
<svg class="a" style="left:1223px;top:674px" width="12" height="12"><path d="M0.5 0.5L11.5 11.5M11.5 0.5L0.5 11.5" stroke="#111" stroke-width="1.1"/></svg>
<div class="a t" style="top:705.0px;height:16px;line-height:16px;font-size:12px;color:#111;font-weight:normal;font-family:'Liberation Sans',sans-serif;left:394px;"><span class="c" style="width:12px">下</span><span class="c" style="width:12px">面</span><span class="c" style="width:12px">显</span><span class="c" style="width:12px">示</span><span class="c" style="width:12px">的</span><span class="c" style="width:12px">为</span><span class="c" style="width:12px">预</span><span class="c" style="width:12px">警</span><span class="c" style="width:12px">时</span><span class="c" style="width:12px">的</span><span class="c" style="width:12px">理</span><span class="c" style="width:12px">论</span><span class="c" style="width:12px">逻</span><span class="c" style="width:12px">辑</span><span class="c" style="width:12px">信</span><span class="c" style="width:12px">号</span>,<span class="c" style="width:12px">您</span><span class="c" style="width:12px">可</span><span class="c" style="width:12px">以</span><span class="c" style="width:12px">维</span><span class="c" style="width:12px">护</span><span class="c" style="width:12px">下</span><span class="c" style="width:12px">面</span><span class="c" style="width:12px">的</span><span class="c" style="width:12px">记</span><span class="c" style="width:12px">录</span><span class="c" style="width:12px">客</span><span class="c" style="width:12px">户</span><span class="c" style="width:12px">端</span><span class="c" style="width:12px">初</span><span class="c" style="width:12px">次</span><span class="c" style="width:12px">登</span><span class="c" style="width:12px">录</span><span class="c" style="width:12px">后</span><span class="c" style="width:12px">将</span><span class="c" style="width:12px">接</span><span class="c" style="width:12px">收</span><span class="c" style="width:12px">到</span><span class="c" style="width:12px">下</span><span class="c" style="width:12px">面</span><span class="c" style="width:12px">的</span><span class="c" style="width:12px">预</span><span class="c" style="width:12px">警</span><span class="c" style="width:12px">记</span><span class="c" style="width:12px">录</span></div>
<div class="a" style="left:394px;top:728px;width:847px;height:243px;box-sizing:border-box;border-top:2px solid #8c8c8c;border-left:2px solid #8c8c8c;border-right:1px solid #d8d8d8;background:#fff"></div>
<div class="a" style="left:396px;top:730px;width:827px;height:16px;background:#f0f0f0;"></div>
<div class="a" style="left:396px;top:745px;width:826px;height:2px;background:#808080;"></div>
<div class="a t" style="top:731.0px;height:16px;line-height:16px;font-size:12px;color:#111;font-weight:normal;font-family:'Liberation Sans',sans-serif;left:403px;"><span class="c" style="width:12px">预</span><span class="c" style="width:12px">警</span><span class="c" style="width:12px">品</span><span class="c" style="width:12px">种</span></div>
<div class="a" style="left:496px;top:731px;width:1px;height:14px;background:#a0a0a0;"></div>
<div class="a" style="left:497px;top:731px;width:1px;height:14px;background:#fff;"></div>
<div class="a t" style="top:731.0px;height:16px;line-height:16px;font-size:12px;color:#111;font-weight:normal;font-family:'Liberation Sans',sans-serif;left:503px;"><span class="c" style="width:12px">预</span><span class="c" style="width:12px">警</span><span class="c" style="width:12px">时</span><span class="c" style="width:12px">间</span></div>
<div class="a" style="left:616px;top:731px;width:1px;height:14px;background:#a0a0a0;"></div>
<div class="a" style="left:617px;top:731px;width:1px;height:14px;background:#fff;"></div>
<div class="a t" style="top:731.0px;height:16px;line-height:16px;font-size:12px;color:#111;font-weight:normal;font-family:'Liberation Sans',sans-serif;left:623px;"><span class="c" style="width:12px">价</span><span class="c" style="width:12px">格</span></div>
<div class="a" style="left:676px;top:731px;width:1px;height:14px;background:#a0a0a0;"></div>
<div class="a" style="left:677px;top:731px;width:1px;height:14px;background:#fff;"></div>
<div class="a t" style="top:731.0px;height:16px;line-height:16px;font-size:12px;color:#111;font-weight:normal;font-family:'Liberation Sans',sans-serif;left:683px;"><span class="c" style="width:12px">下</span><span class="c" style="width:12px">单</span><span class="c" style="width:12px">数</span><span class="c" style="width:12px">量</span>(...</div>
<div class="a" style="left:766px;top:731px;width:1px;height:14px;background:#a0a0a0;"></div>
<div class="a" style="left:767px;top:731px;width:1px;height:14px;background:#fff;"></div>
<div class="a t" style="top:731.0px;height:16px;line-height:16px;font-size:12px;color:#111;font-weight:normal;font-family:'Liberation Sans',sans-serif;left:773px;"><span class="c" style="width:12px">下</span><span class="c" style="width:12px">单</span><span class="c" style="width:12px">类</span><span class="c" style="width:12px">型</span></div>
<div class="a" style="left:826px;top:731px;width:1px;height:14px;background:#a0a0a0;"></div>
<div class="a" style="left:827px;top:731px;width:1px;height:14px;background:#fff;"></div>
<div class="a t" style="top:731.0px;height:16px;line-height:16px;font-size:12px;color:#111;font-weight:normal;font-family:'Liberation Sans',sans-serif;left:833px;"><span class="c" style="width:12px">预</span><span class="c" style="width:12px">警</span><span class="c" style="width:12px">名</span><span class="c" style="width:12px">称</span></div>
<div class="a" style="left:989px;top:731px;width:1px;height:14px;background:#a0a0a0;"></div>
<div class="a" style="left:990px;top:731px;width:1px;height:14px;background:#fff;"></div>
<div class="a t" style="top:731.0px;height:16px;line-height:16px;font-size:12px;color:#111;font-weight:normal;font-family:'Liberation Sans',sans-serif;left:996px;"><span class="c" style="width:12px">动</span><span class="c" style="width:12px">作</span></div>
<div class="a" style="left:1049px;top:731px;width:1px;height:14px;background:#a0a0a0;"></div>
<div class="a" style="left:1050px;top:731px;width:1px;height:14px;background:#fff;"></div>
<div class="a t" style="top:731.0px;height:16px;line-height:16px;font-size:12px;color:#111;font-weight:normal;font-family:'Liberation Sans',sans-serif;left:1056px;"><span class="c" style="width:12px">备</span><span class="c" style="width:12px">注</span></div>
<div class="a" style="left:1139px;top:731px;width:1px;height:14px;background:#a0a0a0;"></div>
<div class="a" style="left:1140px;top:731px;width:1px;height:14px;background:#fff;"></div>
<div class="a t" style="top:731.0px;height:16px;line-height:16px;font-size:12px;color:#111;font-weight:normal;font-family:'Liberation Sans',sans-serif;left:1146px;"><span class="c" style="width:12px">来</span><span class="c" style="width:12px">源</span></div>
<div class="a" style="left:1199px;top:731px;width:1px;height:14px;background:#a0a0a0;"></div>
<div class="a" style="left:1200px;top:731px;width:1px;height:14px;background:#fff;"></div>
<div class="a" style="left:1222px;top:730px;width:18px;height:241px;background:#f0f0f0;"></div>
<div class="a" style="left:1224px;top:762px;width:14px;height:47px;background:#cdcdcd;"></div>
<svg class="a" style="left:1226px;top:735px" width="10" height="7"><path d="M1 6l4-4 4 4" stroke="#555" stroke-width="1.6" fill="none"/></svg>
<div class="a" style="left:397px;top:762px;width:803px;height:1px;background:#f0f0f0;"></div>
<div class="a" style="left:496px;top:750px;width:1px;height:13px;background:#f0f0f0;"></div>
<div class="a" style="left:616px;top:750px;width:1px;height:13px;background:#f0f0f0;"></div>
<div class="a" style="left:676px;top:750px;width:1px;height:13px;background:#f0f0f0;"></div>
<div class="a" style="left:766px;top:750px;width:1px;height:13px;background:#f0f0f0;"></div>
<div class="a" style="left:826px;top:750px;width:1px;height:13px;background:#f0f0f0;"></div>
<div class="a" style="left:989px;top:750px;width:1px;height:13px;background:#f0f0f0;"></div>
<div class="a" style="left:1049px;top:750px;width:1px;height:13px;background:#f0f0f0;"></div>
<div class="a" style="left:1139px;top:750px;width:1px;height:13px;background:#f0f0f0;"></div>
<div class="a" style="left:1199px;top:750px;width:1px;height:13px;background:#f0f0f0;"></div>
<div class="a t" style="left:400px;top:749px;height:14px;line-height:14px;color:#000;font-family:'Liberation Mono',monospace;font-size:12px;letter-spacing:-1.2px">HSI04 <span class="c" style="width:12px">恒</span><span class="c" style="width:12px">指</span>04</div>
<div class="a t" style="left:503px;top:749px;height:14px;line-height:14px;color:#000;font-family:'Liberation Mono',monospace;font-size:12px;letter-spacing:-1.2px">18/04/23 15:04:07</div>
<div class="a t" style="left:623px;top:749px;height:14px;line-height:14px;color:#000;font-family:'Liberation Mono',monospace;font-size:12px;letter-spacing:-1.2px">30354</div>
<div class="a t" style="left:683px;top:749px;height:14px;line-height:14px;color:#000;font-family:'Liberation Mono',monospace;font-size:12px;letter-spacing:-1.2px">1</div>
<div class="a t" style="left:772px;top:749px;height:14px;line-height:14px;color:#000;font-family:'Liberation Mono',monospace;font-size:12px;letter-spacing:-1.2px"><span class="c" style="width:12px">市</span><span class="c" style="width:12px">价</span></div>
<div class="a t" style="left:832px;top:749px;height:14px;line-height:14px;color:#000;font-family:'Liberation Mono',monospace;font-size:12px;letter-spacing:-1.2px">MACD<span class="c" style="width:12px">突</span><span class="c" style="width:12px">破</span><span class="c" style="width:12px">零</span><span class="c" style="width:12px">轴</span><span class="c" style="width:12px">价</span><span class="c" style="width:12px">格</span><span class="c" style="width:12px">预</span><span class="c" style="width:12px">测</span></div>
<div class="a t" style="left:995px;top:749px;height:14px;line-height:14px;color:#000;font-family:'Liberation Mono',monospace;font-size:12px;letter-spacing:-1.2px"><span class="c" style="width:12px">开</span><span class="c" style="width:12px">多</span></div>
<div class="a t" style="left:1145px;top:749px;height:14px;line-height:14px;color:#000;font-family:'Liberation Mono',monospace;font-size:12px;letter-spacing:-1.2px"><span class="c" style="width:12px">图</span><span class="c" style="width:12px">表</span></div>
<div class="a" style="left:397px;top:775px;width:803px;height:1px;background:#f0f0f0;"></div>
<div class="a" style="left:496px;top:763px;width:1px;height:13px;background:#f0f0f0;"></div>
<div class="a" style="left:616px;top:763px;width:1px;height:13px;background:#f0f0f0;"></div>
<div class="a" style="left:676px;top:763px;width:1px;height:13px;background:#f0f0f0;"></div>
<div class="a" style="left:766px;top:763px;width:1px;height:13px;background:#f0f0f0;"></div>
<div class="a" style="left:826px;top:763px;width:1px;height:13px;background:#f0f0f0;"></div>
<div class="a" style="left:989px;top:763px;width:1px;height:13px;background:#f0f0f0;"></div>
<div class="a" style="left:1049px;top:763px;width:1px;height:13px;background:#f0f0f0;"></div>
<div class="a" style="left:1139px;top:763px;width:1px;height:13px;background:#f0f0f0;"></div>
<div class="a" style="left:1199px;top:763px;width:1px;height:13px;background:#f0f0f0;"></div>
<div class="a t" style="left:400px;top:762px;height:14px;line-height:14px;color:#000;font-family:'Liberation Mono',monospace;font-size:12px;letter-spacing:-1.2px">HSI04 <span class="c" style="width:12px">恒</span><span class="c" style="width:12px">指</span>04</div>
<div class="a t" style="left:503px;top:762px;height:14px;line-height:14px;color:#000;font-family:'Liberation Mono',monospace;font-size:12px;letter-spacing:-1.2px">18/04/23 15:04:07</div>
<div class="a t" style="left:623px;top:762px;height:14px;line-height:14px;color:#000;font-family:'Liberation Mono',monospace;font-size:12px;letter-spacing:-1.2px">30354</div>
<div class="a t" style="left:683px;top:762px;height:14px;line-height:14px;color:#000;font-family:'Liberation Mono',monospace;font-size:12px;letter-spacing:-1.2px">1</div>
<div class="a t" style="left:772px;top:762px;height:14px;line-height:14px;color:#000;font-family:'Liberation Mono',monospace;font-size:12px;letter-spacing:-1.2px"><span class="c" style="width:12px">市</span><span class="c" style="width:12px">价</span></div>
<div class="a t" style="left:832px;top:762px;height:14px;line-height:14px;color:#000;font-family:'Liberation Mono',monospace;font-size:12px;letter-spacing:-1.2px">MACD<span class="c" style="width:12px">突</span><span class="c" style="width:12px">破</span><span class="c" style="width:12px">零</span><span class="c" style="width:12px">轴</span><span class="c" style="width:12px">价</span><span class="c" style="width:12px">格</span><span class="c" style="width:12px">预</span><span class="c" style="width:12px">测</span></div>
<div class="a t" style="left:995px;top:762px;height:14px;line-height:14px;color:#000;font-family:'Liberation Mono',monospace;font-size:12px;letter-spacing:-1.2px"><span class="c" style="width:12px">平</span><span class="c" style="width:12px">空</span></div>
<div class="a t" style="left:1145px;top:762px;height:14px;line-height:14px;color:#000;font-family:'Liberation Mono',monospace;font-size:12px;letter-spacing:-1.2px"><span class="c" style="width:12px">图</span><span class="c" style="width:12px">表</span></div>
<div class="a" style="left:397px;top:788px;width:803px;height:1px;background:#f0f0f0;"></div>
<div class="a" style="left:496px;top:776px;width:1px;height:13px;background:#f0f0f0;"></div>
<div class="a" style="left:616px;top:776px;width:1px;height:13px;background:#f0f0f0;"></div>
<div class="a" style="left:676px;top:776px;width:1px;height:13px;background:#f0f0f0;"></div>
<div class="a" style="left:766px;top:776px;width:1px;height:13px;background:#f0f0f0;"></div>
<div class="a" style="left:826px;top:776px;width:1px;height:13px;background:#f0f0f0;"></div>
<div class="a" style="left:989px;top:776px;width:1px;height:13px;background:#f0f0f0;"></div>
<div class="a" style="left:1049px;top:776px;width:1px;height:13px;background:#f0f0f0;"></div>
<div class="a" style="left:1139px;top:776px;width:1px;height:13px;background:#f0f0f0;"></div>
<div class="a" style="left:1199px;top:776px;width:1px;height:13px;background:#f0f0f0;"></div>
<div class="a t" style="left:400px;top:775px;height:14px;line-height:14px;color:#000;font-family:'Liberation Mono',monospace;font-size:12px;letter-spacing:-1.2px">HSI04 <span class="c" style="width:12px">恒</span><span class="c" style="width:12px">指</span>04</div>
<div class="a t" style="left:503px;top:775px;height:14px;line-height:14px;color:#000;font-family:'Liberation Mono',monospace;font-size:12px;letter-spacing:-1.2px">18/04/23 15:01:14</div>
<div class="a t" style="left:623px;top:775px;height:14px;line-height:14px;color:#000;font-family:'Liberation Mono',monospace;font-size:12px;letter-spacing:-1.2px">30380</div>
<div class="a t" style="left:683px;top:775px;height:14px;line-height:14px;color:#000;font-family:'Liberation Mono',monospace;font-size:12px;letter-spacing:-1.2px">1</div>
<div class="a t" style="left:772px;top:775px;height:14px;line-height:14px;color:#000;font-family:'Liberation Mono',monospace;font-size:12px;letter-spacing:-1.2px"><span class="c" style="width:12px">市</span><span class="c" style="width:12px">价</span></div>
<div class="a t" style="left:832px;top:775px;height:14px;line-height:14px;color:#000;font-family:'Liberation Mono',monospace;font-size:12px;letter-spacing:-1.2px">MACD<span class="c" style="width:12px">突</span><span class="c" style="width:12px">破</span><span class="c" style="width:12px">零</span><span class="c" style="width:12px">轴</span><span class="c" style="width:12px">价</span><span class="c" style="width:12px">格</span><span class="c" style="width:12px">预</span><span class="c" style="width:12px">测</span></div>
<div class="a t" style="left:995px;top:775px;height:14px;line-height:14px;color:#000;font-family:'Liberation Mono',monospace;font-size:12px;letter-spacing:-1.2px"><span class="c" style="width:12px">开</span><span class="c" style="width:12px">空</span></div>
<div class="a t" style="left:1145px;top:775px;height:14px;line-height:14px;color:#000;font-family:'Liberation Mono',monospace;font-size:12px;letter-spacing:-1.2px"><span class="c" style="width:12px">图</span><span class="c" style="width:12px">表</span></div>
<div class="a" style="left:397px;top:801px;width:803px;height:1px;background:#f0f0f0;"></div>
<div class="a" style="left:496px;top:789px;width:1px;height:13px;background:#f0f0f0;"></div>
<div class="a" style="left:616px;top:789px;width:1px;height:13px;background:#f0f0f0;"></div>
<div class="a" style="left:676px;top:789px;width:1px;height:13px;background:#f0f0f0;"></div>
<div class="a" style="left:766px;top:789px;width:1px;height:13px;background:#f0f0f0;"></div>
<div class="a" style="left:826px;top:789px;width:1px;height:13px;background:#f0f0f0;"></div>
<div class="a" style="left:989px;top:789px;width:1px;height:13px;background:#f0f0f0;"></div>
<div class="a" style="left:1049px;top:789px;width:1px;height:13px;background:#f0f0f0;"></div>
<div class="a" style="left:1139px;top:789px;width:1px;height:13px;background:#f0f0f0;"></div>
<div class="a" style="left:1199px;top:789px;width:1px;height:13px;background:#f0f0f0;"></div>
<div class="a t" style="left:400px;top:788px;height:14px;line-height:14px;color:#000;font-family:'Liberation Mono',monospace;font-size:12px;letter-spacing:-1.2px">HSI04 <span class="c" style="width:12px">恒</span><span class="c" style="width:12px">指</span>04</div>
<div class="a t" style="left:503px;top:788px;height:14px;line-height:14px;color:#000;font-family:'Liberation Mono',monospace;font-size:12px;letter-spacing:-1.2px">18/04/23 15:01:14</div>
<div class="a t" style="left:623px;top:788px;height:14px;line-height:14px;color:#000;font-family:'Liberation Mono',monospace;font-size:12px;letter-spacing:-1.2px">30380</div>
<div class="a t" style="left:683px;top:788px;height:14px;line-height:14px;color:#000;font-family:'Liberation Mono',monospace;font-size:12px;letter-spacing:-1.2px">1</div>
<div class="a t" style="left:772px;top:788px;height:14px;line-height:14px;color:#000;font-family:'Liberation Mono',monospace;font-size:12px;letter-spacing:-1.2px"><span class="c" style="width:12px">市</span><span class="c" style="width:12px">价</span></div>
<div class="a t" style="left:832px;top:788px;height:14px;line-height:14px;color:#000;font-family:'Liberation Mono',monospace;font-size:12px;letter-spacing:-1.2px">MACD<span class="c" style="width:12px">突</span><span class="c" style="width:12px">破</span><span class="c" style="width:12px">零</span><span class="c" style="width:12px">轴</span><span class="c" style="width:12px">价</span><span class="c" style="width:12px">格</span><span class="c" style="width:12px">预</span><span class="c" style="width:12px">测</span></div>
<div class="a t" style="left:995px;top:788px;height:14px;line-height:14px;color:#000;font-family:'Liberation Mono',monospace;font-size:12px;letter-spacing:-1.2px"><span class="c" style="width:12px">平</span><span class="c" style="width:12px">多</span></div>
<div class="a t" style="left:1145px;top:788px;height:14px;line-height:14px;color:#000;font-family:'Liberation Mono',monospace;font-size:12px;letter-spacing:-1.2px"><span class="c" style="width:12px">图</span><span class="c" style="width:12px">表</span></div>
<div class="a" style="left:397px;top:814px;width:803px;height:1px;background:#f0f0f0;"></div>
<div class="a" style="left:496px;top:802px;width:1px;height:13px;background:#f0f0f0;"></div>
<div class="a" style="left:616px;top:802px;width:1px;height:13px;background:#f0f0f0;"></div>
<div class="a" style="left:676px;top:802px;width:1px;height:13px;background:#f0f0f0;"></div>
<div class="a" style="left:766px;top:802px;width:1px;height:13px;background:#f0f0f0;"></div>
<div class="a" style="left:826px;top:802px;width:1px;height:13px;background:#f0f0f0;"></div>
<div class="a" style="left:989px;top:802px;width:1px;height:13px;background:#f0f0f0;"></div>
<div class="a" style="left:1049px;top:802px;width:1px;height:13px;background:#f0f0f0;"></div>
<div class="a" style="left:1139px;top:802px;width:1px;height:13px;background:#f0f0f0;"></div>
<div class="a" style="left:1199px;top:802px;width:1px;height:13px;background:#f0f0f0;"></div>
<div class="a t" style="left:400px;top:801px;height:14px;line-height:14px;color:#000;font-family:'Liberation Mono',monospace;font-size:12px;letter-spacing:-1.2px">HSI04 <span class="c" style="width:12px">恒</span><span class="c" style="width:12px">指</span>04</div>
<div class="a t" style="left:503px;top:801px;height:14px;line-height:14px;color:#000;font-family:'Liberation Mono',monospace;font-size:12px;letter-spacing:-1.2px">18/04/23 15:00:32</div>
<div class="a t" style="left:623px;top:801px;height:14px;line-height:14px;color:#000;font-family:'Liberation Mono',monospace;font-size:12px;letter-spacing:-1.2px">30378</div>
<div class="a t" style="left:683px;top:801px;height:14px;line-height:14px;color:#000;font-family:'Liberation Mono',monospace;font-size:12px;letter-spacing:-1.2px">1</div>
<div class="a t" style="left:772px;top:801px;height:14px;line-height:14px;color:#000;font-family:'Liberation Mono',monospace;font-size:12px;letter-spacing:-1.2px"><span class="c" style="width:12px">市</span><span class="c" style="width:12px">价</span></div>
<div class="a t" style="left:832px;top:801px;height:14px;line-height:14px;color:#000;font-family:'Liberation Mono',monospace;font-size:12px;letter-spacing:-1.2px">MACD<span class="c" style="width:12px">突</span><span class="c" style="width:12px">破</span><span class="c" style="width:12px">零</span><span class="c" style="width:12px">轴</span><span class="c" style="width:12px">价</span><span class="c" style="width:12px">格</span><span class="c" style="width:12px">预</span><span class="c" style="width:12px">测</span></div>
<div class="a t" style="left:995px;top:801px;height:14px;line-height:14px;color:#000;font-family:'Liberation Mono',monospace;font-size:12px;letter-spacing:-1.2px"><span class="c" style="width:12px">开</span><span class="c" style="width:12px">多</span></div>
<div class="a t" style="left:1145px;top:801px;height:14px;line-height:14px;color:#000;font-family:'Liberation Mono',monospace;font-size:12px;letter-spacing:-1.2px"><span class="c" style="width:12px">图</span><span class="c" style="width:12px">表</span></div>
<div class="a" style="left:397px;top:827px;width:803px;height:1px;background:#f0f0f0;"></div>
<div class="a" style="left:496px;top:815px;width:1px;height:13px;background:#f0f0f0;"></div>
<div class="a" style="left:616px;top:815px;width:1px;height:13px;background:#f0f0f0;"></div>
<div class="a" style="left:676px;top:815px;width:1px;height:13px;background:#f0f0f0;"></div>
<div class="a" style="left:766px;top:815px;width:1px;height:13px;background:#f0f0f0;"></div>
<div class="a" style="left:826px;top:815px;width:1px;height:13px;background:#f0f0f0;"></div>
<div class="a" style="left:989px;top:815px;width:1px;height:13px;background:#f0f0f0;"></div>
<div class="a" style="left:1049px;top:815px;width:1px;height:13px;background:#f0f0f0;"></div>
<div class="a" style="left:1139px;top:815px;width:1px;height:13px;background:#f0f0f0;"></div>
<div class="a" style="left:1199px;top:815px;width:1px;height:13px;background:#f0f0f0;"></div>
<div class="a t" style="left:400px;top:814px;height:14px;line-height:14px;color:#000;font-family:'Liberation Mono',monospace;font-size:12px;letter-spacing:-1.2px">HSI04 <span class="c" style="width:12px">恒</span><span class="c" style="width:12px">指</span>04</div>
<div class="a t" style="left:503px;top:814px;height:14px;line-height:14px;color:#000;font-family:'Liberation Mono',monospace;font-size:12px;letter-spacing:-1.2px">18/04/23 15:00:32</div>
<div class="a t" style="left:623px;top:814px;height:14px;line-height:14px;color:#000;font-family:'Liberation Mono',monospace;font-size:12px;letter-spacing:-1.2px">30379</div>
<div class="a t" style="left:683px;top:814px;height:14px;line-height:14px;color:#000;font-family:'Liberation Mono',monospace;font-size:12px;letter-spacing:-1.2px">1</div>
<div class="a t" style="left:772px;top:814px;height:14px;line-height:14px;color:#000;font-family:'Liberation Mono',monospace;font-size:12px;letter-spacing:-1.2px"><span class="c" style="width:12px">市</span><span class="c" style="width:12px">价</span></div>
<div class="a t" style="left:832px;top:814px;height:14px;line-height:14px;color:#000;font-family:'Liberation Mono',monospace;font-size:12px;letter-spacing:-1.2px">MACD<span class="c" style="width:12px">突</span><span class="c" style="width:12px">破</span><span class="c" style="width:12px">零</span><span class="c" style="width:12px">轴</span><span class="c" style="width:12px">价</span><span class="c" style="width:12px">格</span><span class="c" style="width:12px">预</span><span class="c" style="width:12px">测</span></div>
<div class="a t" style="left:995px;top:814px;height:14px;line-height:14px;color:#000;font-family:'Liberation Mono',monospace;font-size:12px;letter-spacing:-1.2px"><span class="c" style="width:12px">平</span><span class="c" style="width:12px">空</span></div>
<div class="a t" style="left:1145px;top:814px;height:14px;line-height:14px;color:#000;font-family:'Liberation Mono',monospace;font-size:12px;letter-spacing:-1.2px"><span class="c" style="width:12px">图</span><span class="c" style="width:12px">表</span></div>
<div class="a" style="left:397px;top:840px;width:803px;height:1px;background:#f0f0f0;"></div>
<div class="a" style="left:496px;top:828px;width:1px;height:13px;background:#f0f0f0;"></div>
<div class="a" style="left:616px;top:828px;width:1px;height:13px;background:#f0f0f0;"></div>
<div class="a" style="left:676px;top:828px;width:1px;height:13px;background:#f0f0f0;"></div>
<div class="a" style="left:766px;top:828px;width:1px;height:13px;background:#f0f0f0;"></div>
<div class="a" style="left:826px;top:828px;width:1px;height:13px;background:#f0f0f0;"></div>
<div class="a" style="left:989px;top:828px;width:1px;height:13px;background:#f0f0f0;"></div>
<div class="a" style="left:1049px;top:828px;width:1px;height:13px;background:#f0f0f0;"></div>
<div class="a" style="left:1139px;top:828px;width:1px;height:13px;background:#f0f0f0;"></div>
<div class="a" style="left:1199px;top:828px;width:1px;height:13px;background:#f0f0f0;"></div>
<div class="a t" style="left:400px;top:827px;height:14px;line-height:14px;color:#000;font-family:'Liberation Mono',monospace;font-size:12px;letter-spacing:-1.2px">HSI04 <span class="c" style="width:12px">恒</span><span class="c" style="width:12px">指</span>04</div>
<div class="a t" style="left:503px;top:827px;height:14px;line-height:14px;color:#000;font-family:'Liberation Mono',monospace;font-size:12px;letter-spacing:-1.2px">18/04/23 14:59:59</div>
<div class="a t" style="left:623px;top:827px;height:14px;line-height:14px;color:#000;font-family:'Liberation Mono',monospace;font-size:12px;letter-spacing:-1.2px">30372</div>
<div class="a t" style="left:683px;top:827px;height:14px;line-height:14px;color:#000;font-family:'Liberation Mono',monospace;font-size:12px;letter-spacing:-1.2px">1</div>
<div class="a t" style="left:772px;top:827px;height:14px;line-height:14px;color:#000;font-family:'Liberation Mono',monospace;font-size:12px;letter-spacing:-1.2px"><span class="c" style="width:12px">市</span><span class="c" style="width:12px">价</span></div>
<div class="a t" style="left:832px;top:827px;height:14px;line-height:14px;color:#000;font-family:'Liberation Mono',monospace;font-size:12px;letter-spacing:-1.2px">MACD<span class="c" style="width:12px">突</span><span class="c" style="width:12px">破</span><span class="c" style="width:12px">零</span><span class="c" style="width:12px">轴</span><span class="c" style="width:12px">价</span><span class="c" style="width:12px">格</span><span class="c" style="width:12px">预</span><span class="c" style="width:12px">测</span></div>
<div class="a t" style="left:995px;top:827px;height:14px;line-height:14px;color:#000;font-family:'Liberation Mono',monospace;font-size:12px;letter-spacing:-1.2px"><span class="c" style="width:12px">开</span><span class="c" style="width:12px">空</span></div>
<div class="a t" style="left:1145px;top:827px;height:14px;line-height:14px;color:#000;font-family:'Liberation Mono',monospace;font-size:12px;letter-spacing:-1.2px"><span class="c" style="width:12px">图</span><span class="c" style="width:12px">表</span></div>
<div class="a" style="left:397px;top:853px;width:803px;height:1px;background:#f0f0f0;"></div>
<div class="a" style="left:496px;top:841px;width:1px;height:13px;background:#f0f0f0;"></div>
<div class="a" style="left:616px;top:841px;width:1px;height:13px;background:#f0f0f0;"></div>
<div class="a" style="left:676px;top:841px;width:1px;height:13px;background:#f0f0f0;"></div>
<div class="a" style="left:766px;top:841px;width:1px;height:13px;background:#f0f0f0;"></div>
<div class="a" style="left:826px;top:841px;width:1px;height:13px;background:#f0f0f0;"></div>
<div class="a" style="left:989px;top:841px;width:1px;height:13px;background:#f0f0f0;"></div>
<div class="a" style="left:1049px;top:841px;width:1px;height:13px;background:#f0f0f0;"></div>
<div class="a" style="left:1139px;top:841px;width:1px;height:13px;background:#f0f0f0;"></div>
<div class="a" style="left:1199px;top:841px;width:1px;height:13px;background:#f0f0f0;"></div>
<div class="a t" style="left:400px;top:840px;height:14px;line-height:14px;color:#000;font-family:'Liberation Mono',monospace;font-size:12px;letter-spacing:-1.2px">HSI04 <span class="c" style="width:12px">恒</span><span class="c" style="width:12px">指</span>04</div>
<div class="a t" style="left:503px;top:840px;height:14px;line-height:14px;color:#000;font-family:'Liberation Mono',monospace;font-size:12px;letter-spacing:-1.2px">18/04/23 14:59:59</div>
<div class="a t" style="left:623px;top:840px;height:14px;line-height:14px;color:#000;font-family:'Liberation Mono',monospace;font-size:12px;letter-spacing:-1.2px">30372</div>
<div class="a t" style="left:683px;top:840px;height:14px;line-height:14px;color:#000;font-family:'Liberation Mono',monospace;font-size:12px;letter-spacing:-1.2px">1</div>
<div class="a t" style="left:772px;top:840px;height:14px;line-height:14px;color:#000;font-family:'Liberation Mono',monospace;font-size:12px;letter-spacing:-1.2px"><span class="c" style="width:12px">市</span><span class="c" style="width:12px">价</span></div>
<div class="a t" style="left:832px;top:840px;height:14px;line-height:14px;color:#000;font-family:'Liberation Mono',monospace;font-size:12px;letter-spacing:-1.2px">MACD<span class="c" style="width:12px">突</span><span class="c" style="width:12px">破</span><span class="c" style="width:12px">零</span><span class="c" style="width:12px">轴</span><span class="c" style="width:12px">价</span><span class="c" style="width:12px">格</span><span class="c" style="width:12px">预</span><span class="c" style="width:12px">测</span></div>
<div class="a t" style="left:995px;top:840px;height:14px;line-height:14px;color:#000;font-family:'Liberation Mono',monospace;font-size:12px;letter-spacing:-1.2px"><span class="c" style="width:12px">平</span><span class="c" style="width:12px">多</span></div>
<div class="a t" style="left:1145px;top:840px;height:14px;line-height:14px;color:#000;font-family:'Liberation Mono',monospace;font-size:12px;letter-spacing:-1.2px"><span class="c" style="width:12px">图</span><span class="c" style="width:12px">表</span></div>
<div class="a" style="left:397px;top:866px;width:803px;height:1px;background:#f0f0f0;"></div>
<div class="a" style="left:496px;top:854px;width:1px;height:13px;background:#f0f0f0;"></div>
<div class="a" style="left:616px;top:854px;width:1px;height:13px;background:#f0f0f0;"></div>
<div class="a" style="left:676px;top:854px;width:1px;height:13px;background:#f0f0f0;"></div>
<div class="a" style="left:766px;top:854px;width:1px;height:13px;background:#f0f0f0;"></div>
<div class="a" style="left:826px;top:854px;width:1px;height:13px;background:#f0f0f0;"></div>
<div class="a" style="left:989px;top:854px;width:1px;height:13px;background:#f0f0f0;"></div>
<div class="a" style="left:1049px;top:854px;width:1px;height:13px;background:#f0f0f0;"></div>
<div class="a" style="left:1139px;top:854px;width:1px;height:13px;background:#f0f0f0;"></div>
<div class="a" style="left:1199px;top:854px;width:1px;height:13px;background:#f0f0f0;"></div>
<div class="a t" style="left:400px;top:853px;height:14px;line-height:14px;color:#000;font-family:'Liberation Mono',monospace;font-size:12px;letter-spacing:-1.2px">HSI04 <span class="c" style="width:12px">恒</span><span class="c" style="width:12px">指</span>04</div>
<div class="a t" style="left:503px;top:853px;height:14px;line-height:14px;color:#000;font-family:'Liberation Mono',monospace;font-size:12px;letter-spacing:-1.2px">18/04/23 14:53:49</div>
<div class="a t" style="left:623px;top:853px;height:14px;line-height:14px;color:#000;font-family:'Liberation Mono',monospace;font-size:12px;letter-spacing:-1.2px">30328</div>
<div class="a t" style="left:683px;top:853px;height:14px;line-height:14px;color:#000;font-family:'Liberation Mono',monospace;font-size:12px;letter-spacing:-1.2px">1</div>
<div class="a t" style="left:772px;top:853px;height:14px;line-height:14px;color:#000;font-family:'Liberation Mono',monospace;font-size:12px;letter-spacing:-1.2px"><span class="c" style="width:12px">市</span><span class="c" style="width:12px">价</span></div>
<div class="a t" style="left:832px;top:853px;height:14px;line-height:14px;color:#000;font-family:'Liberation Mono',monospace;font-size:12px;letter-spacing:-1.2px">MACD<span class="c" style="width:12px">突</span><span class="c" style="width:12px">破</span><span class="c" style="width:12px">零</span><span class="c" style="width:12px">轴</span><span class="c" style="width:12px">价</span><span class="c" style="width:12px">格</span><span class="c" style="width:12px">预</span><span class="c" style="width:12px">测</span></div>
<div class="a t" style="left:995px;top:853px;height:14px;line-height:14px;color:#000;font-family:'Liberation Mono',monospace;font-size:12px;letter-spacing:-1.2px"><span class="c" style="width:12px">开</span><span class="c" style="width:12px">多</span></div>
<div class="a t" style="left:1145px;top:853px;height:14px;line-height:14px;color:#000;font-family:'Liberation Mono',monospace;font-size:12px;letter-spacing:-1.2px"><span class="c" style="width:12px">图</span><span class="c" style="width:12px">表</span></div>
<div class="a" style="left:397px;top:879px;width:803px;height:1px;background:#f0f0f0;"></div>
<div class="a" style="left:496px;top:867px;width:1px;height:13px;background:#f0f0f0;"></div>
<div class="a" style="left:616px;top:867px;width:1px;height:13px;background:#f0f0f0;"></div>
<div class="a" style="left:676px;top:867px;width:1px;height:13px;background:#f0f0f0;"></div>
<div class="a" style="left:766px;top:867px;width:1px;height:13px;background:#f0f0f0;"></div>
<div class="a" style="left:826px;top:867px;width:1px;height:13px;background:#f0f0f0;"></div>
<div class="a" style="left:989px;top:867px;width:1px;height:13px;background:#f0f0f0;"></div>
<div class="a" style="left:1049px;top:867px;width:1px;height:13px;background:#f0f0f0;"></div>
<div class="a" style="left:1139px;top:867px;width:1px;height:13px;background:#f0f0f0;"></div>
<div class="a" style="left:1199px;top:867px;width:1px;height:13px;background:#f0f0f0;"></div>
<div class="a t" style="left:400px;top:866px;height:14px;line-height:14px;color:#000;font-family:'Liberation Mono',monospace;font-size:12px;letter-spacing:-1.2px">HSI04 <span class="c" style="width:12px">恒</span><span class="c" style="width:12px">指</span>04</div>
<div class="a t" style="left:503px;top:866px;height:14px;line-height:14px;color:#000;font-family:'Liberation Mono',monospace;font-size:12px;letter-spacing:-1.2px">18/04/23 14:53:49</div>
<div class="a t" style="left:623px;top:866px;height:14px;line-height:14px;color:#000;font-family:'Liberation Mono',monospace;font-size:12px;letter-spacing:-1.2px">30328</div>
<div class="a t" style="left:683px;top:866px;height:14px;line-height:14px;color:#000;font-family:'Liberation Mono',monospace;font-size:12px;letter-spacing:-1.2px">1</div>
<div class="a t" style="left:772px;top:866px;height:14px;line-height:14px;color:#000;font-family:'Liberation Mono',monospace;font-size:12px;letter-spacing:-1.2px"><span class="c" style="width:12px">市</span><span class="c" style="width:12px">价</span></div>
<div class="a t" style="left:832px;top:866px;height:14px;line-height:14px;color:#000;font-family:'Liberation Mono',monospace;font-size:12px;letter-spacing:-1.2px">MACD<span class="c" style="width:12px">突</span><span class="c" style="width:12px">破</span><span class="c" style="width:12px">零</span><span class="c" style="width:12px">轴</span><span class="c" style="width:12px">价</span><span class="c" style="width:12px">格</span><span class="c" style="width:12px">预</span><span class="c" style="width:12px">测</span></div>
<div class="a t" style="left:995px;top:866px;height:14px;line-height:14px;color:#000;font-family:'Liberation Mono',monospace;font-size:12px;letter-spacing:-1.2px"><span class="c" style="width:12px">平</span><span class="c" style="width:12px">空</span></div>
<div class="a t" style="left:1145px;top:866px;height:14px;line-height:14px;color:#000;font-family:'Liberation Mono',monospace;font-size:12px;letter-spacing:-1.2px"><span class="c" style="width:12px">图</span><span class="c" style="width:12px">表</span></div>
<div class="a" style="left:397px;top:892px;width:803px;height:1px;background:#f0f0f0;"></div>
<div class="a" style="left:496px;top:880px;width:1px;height:13px;background:#f0f0f0;"></div>
<div class="a" style="left:616px;top:880px;width:1px;height:13px;background:#f0f0f0;"></div>
<div class="a" style="left:676px;top:880px;width:1px;height:13px;background:#f0f0f0;"></div>
<div class="a" style="left:766px;top:880px;width:1px;height:13px;background:#f0f0f0;"></div>
<div class="a" style="left:826px;top:880px;width:1px;height:13px;background:#f0f0f0;"></div>
<div class="a" style="left:989px;top:880px;width:1px;height:13px;background:#f0f0f0;"></div>
<div class="a" style="left:1049px;top:880px;width:1px;height:13px;background:#f0f0f0;"></div>
<div class="a" style="left:1139px;top:880px;width:1px;height:13px;background:#f0f0f0;"></div>
<div class="a" style="left:1199px;top:880px;width:1px;height:13px;background:#f0f0f0;"></div>
<div class="a t" style="left:400px;top:879px;height:14px;line-height:14px;color:#000;font-family:'Liberation Mono',monospace;font-size:12px;letter-spacing:-1.2px">HSI04 <span class="c" style="width:12px">恒</span><span class="c" style="width:12px">指</span>04</div>
<div class="a t" style="left:503px;top:879px;height:14px;line-height:14px;color:#000;font-family:'Liberation Mono',monospace;font-size:12px;letter-spacing:-1.2px">18/04/23 14:53:35</div>
<div class="a t" style="left:623px;top:879px;height:14px;line-height:14px;color:#000;font-family:'Liberation Mono',monospace;font-size:12px;letter-spacing:-1.2px">30331</div>
<div class="a t" style="left:683px;top:879px;height:14px;line-height:14px;color:#000;font-family:'Liberation Mono',monospace;font-size:12px;letter-spacing:-1.2px">1</div>
<div class="a t" style="left:772px;top:879px;height:14px;line-height:14px;color:#000;font-family:'Liberation Mono',monospace;font-size:12px;letter-spacing:-1.2px"><span class="c" style="width:12px">市</span><span class="c" style="width:12px">价</span></div>
<div class="a t" style="left:832px;top:879px;height:14px;line-height:14px;color:#000;font-family:'Liberation Mono',monospace;font-size:12px;letter-spacing:-1.2px">MACD<span class="c" style="width:12px">突</span><span class="c" style="width:12px">破</span><span class="c" style="width:12px">零</span><span class="c" style="width:12px">轴</span><span class="c" style="width:12px">价</span><span class="c" style="width:12px">格</span><span class="c" style="width:12px">预</span><span class="c" style="width:12px">测</span></div>
<div class="a t" style="left:995px;top:879px;height:14px;line-height:14px;color:#000;font-family:'Liberation Mono',monospace;font-size:12px;letter-spacing:-1.2px"><span class="c" style="width:12px">开</span><span class="c" style="width:12px">多</span></div>
<div class="a t" style="left:1145px;top:879px;height:14px;line-height:14px;color:#000;font-family:'Liberation Mono',monospace;font-size:12px;letter-spacing:-1.2px"><span class="c" style="width:12px">图</span><span class="c" style="width:12px">表</span></div>
<div class="a" style="left:397px;top:893px;width:803px;height:13px;background:#0078d7;"></div>
<div class="a" style="left:496px;top:893px;width:1px;height:13px;background:#ffffff;"></div>
<div class="a" style="left:616px;top:893px;width:1px;height:13px;background:#ffffff;"></div>
<div class="a" style="left:676px;top:893px;width:1px;height:13px;background:#ffffff;"></div>
<div class="a" style="left:766px;top:893px;width:1px;height:13px;background:#ffffff;"></div>
<div class="a" style="left:826px;top:893px;width:1px;height:13px;background:#ffffff;"></div>
<div class="a" style="left:989px;top:893px;width:1px;height:13px;background:#ffffff;"></div>
<div class="a" style="left:1049px;top:893px;width:1px;height:13px;background:#ffffff;"></div>
<div class="a" style="left:1139px;top:893px;width:1px;height:13px;background:#ffffff;"></div>
<div class="a" style="left:1199px;top:893px;width:1px;height:13px;background:#ffffff;"></div>
<div class="a t" style="left:400px;top:892px;height:14px;line-height:14px;color:#fff;font-family:'Liberation Mono',monospace;font-size:12px;letter-spacing:-1.2px">HSI04 <span class="c" style="width:12px">恒</span><span class="c" style="width:12px">指</span>04</div>
<div class="a t" style="left:503px;top:892px;height:14px;line-height:14px;color:#fff;font-family:'Liberation Mono',monospace;font-size:12px;letter-spacing:-1.2px">18/04/23 14:53:35</div>
<div class="a t" style="left:623px;top:892px;height:14px;line-height:14px;color:#fff;font-family:'Liberation Mono',monospace;font-size:12px;letter-spacing:-1.2px">30331</div>
<div class="a t" style="left:683px;top:892px;height:14px;line-height:14px;color:#fff;font-family:'Liberation Mono',monospace;font-size:12px;letter-spacing:-1.2px">1</div>
<div class="a t" style="left:772px;top:892px;height:14px;line-height:14px;color:#fff;font-family:'Liberation Mono',monospace;font-size:12px;letter-spacing:-1.2px"><span class="c" style="width:12px">市</span><span class="c" style="width:12px">价</span></div>
<div class="a t" style="left:832px;top:892px;height:14px;line-height:14px;color:#fff;font-family:'Liberation Mono',monospace;font-size:12px;letter-spacing:-1.2px">MACD<span class="c" style="width:12px">突</span><span class="c" style="width:12px">破</span><span class="c" style="width:12px">零</span><span class="c" style="width:12px">轴</span><span class="c" style="width:12px">价</span><span class="c" style="width:12px">格</span><span class="c" style="width:12px">预</span><span class="c" style="width:12px">测</span></div>
<div class="a t" style="left:995px;top:892px;height:14px;line-height:14px;color:#fff;font-family:'Liberation Mono',monospace;font-size:12px;letter-spacing:-1.2px"><span class="c" style="width:12px">平</span><span class="c" style="width:12px">空</span></div>
<div class="a t" style="left:1145px;top:892px;height:14px;line-height:14px;color:#fff;font-family:'Liberation Mono',monospace;font-size:12px;letter-spacing:-1.2px"><span class="c" style="width:12px">图</span><span class="c" style="width:12px">表</span></div>
<div class="a" style="left:397px;top:918px;width:803px;height:1px;background:#f0f0f0;"></div>
<div class="a" style="left:496px;top:906px;width:1px;height:13px;background:#f0f0f0;"></div>
<div class="a" style="left:616px;top:906px;width:1px;height:13px;background:#f0f0f0;"></div>
<div class="a" style="left:676px;top:906px;width:1px;height:13px;background:#f0f0f0;"></div>
<div class="a" style="left:766px;top:906px;width:1px;height:13px;background:#f0f0f0;"></div>
<div class="a" style="left:826px;top:906px;width:1px;height:13px;background:#f0f0f0;"></div>
<div class="a" style="left:989px;top:906px;width:1px;height:13px;background:#f0f0f0;"></div>
<div class="a" style="left:1049px;top:906px;width:1px;height:13px;background:#f0f0f0;"></div>
<div class="a" style="left:1139px;top:906px;width:1px;height:13px;background:#f0f0f0;"></div>
<div class="a" style="left:1199px;top:906px;width:1px;height:13px;background:#f0f0f0;"></div>
<div class="a t" style="left:400px;top:905px;height:14px;line-height:14px;color:#000;font-family:'Liberation Mono',monospace;font-size:12px;letter-spacing:-1.2px">HSI04 <span class="c" style="width:12px">恒</span><span class="c" style="width:12px">指</span>04</div>
<div class="a t" style="left:503px;top:905px;height:14px;line-height:14px;color:#000;font-family:'Liberation Mono',monospace;font-size:12px;letter-spacing:-1.2px">18/04/23 14:52:10</div>
<div class="a t" style="left:623px;top:905px;height:14px;line-height:14px;color:#000;font-family:'Liberation Mono',monospace;font-size:12px;letter-spacing:-1.2px">30330</div>
<div class="a t" style="left:683px;top:905px;height:14px;line-height:14px;color:#000;font-family:'Liberation Mono',monospace;font-size:12px;letter-spacing:-1.2px">1</div>
<div class="a t" style="left:772px;top:905px;height:14px;line-height:14px;color:#000;font-family:'Liberation Mono',monospace;font-size:12px;letter-spacing:-1.2px"><span class="c" style="width:12px">市</span><span class="c" style="width:12px">价</span></div>
<div class="a t" style="left:832px;top:905px;height:14px;line-height:14px;color:#000;font-family:'Liberation Mono',monospace;font-size:12px;letter-spacing:-1.2px">MACD<span class="c" style="width:12px">突</span><span class="c" style="width:12px">破</span><span class="c" style="width:12px">零</span><span class="c" style="width:12px">轴</span><span class="c" style="width:12px">价</span><span class="c" style="width:12px">格</span><span class="c" style="width:12px">预</span><span class="c" style="width:12px">测</span></div>
<div class="a t" style="left:995px;top:905px;height:14px;line-height:14px;color:#000;font-family:'Liberation Mono',monospace;font-size:12px;letter-spacing:-1.2px"><span class="c" style="width:12px">开</span><span class="c" style="width:12px">空</span></div>
<div class="a t" style="left:1145px;top:905px;height:14px;line-height:14px;color:#000;font-family:'Liberation Mono',monospace;font-size:12px;letter-spacing:-1.2px"><span class="c" style="width:12px">图</span><span class="c" style="width:12px">表</span></div>
<div class="a" style="left:397px;top:931px;width:803px;height:1px;background:#f0f0f0;"></div>
<div class="a" style="left:496px;top:919px;width:1px;height:13px;background:#f0f0f0;"></div>
<div class="a" style="left:616px;top:919px;width:1px;height:13px;background:#f0f0f0;"></div>
<div class="a" style="left:676px;top:919px;width:1px;height:13px;background:#f0f0f0;"></div>
<div class="a" style="left:766px;top:919px;width:1px;height:13px;background:#f0f0f0;"></div>
<div class="a" style="left:826px;top:919px;width:1px;height:13px;background:#f0f0f0;"></div>
<div class="a" style="left:989px;top:919px;width:1px;height:13px;background:#f0f0f0;"></div>
<div class="a" style="left:1049px;top:919px;width:1px;height:13px;background:#f0f0f0;"></div>
<div class="a" style="left:1139px;top:919px;width:1px;height:13px;background:#f0f0f0;"></div>
<div class="a" style="left:1199px;top:919px;width:1px;height:13px;background:#f0f0f0;"></div>
<div class="a t" style="left:400px;top:918px;height:14px;line-height:14px;color:#000;font-family:'Liberation Mono',monospace;font-size:12px;letter-spacing:-1.2px">HSI04 <span class="c" style="width:12px">恒</span><span class="c" style="width:12px">指</span>04</div>
<div class="a t" style="left:503px;top:918px;height:14px;line-height:14px;color:#000;font-family:'Liberation Mono',monospace;font-size:12px;letter-spacing:-1.2px">18/04/23 14:52:10</div>
<div class="a t" style="left:623px;top:918px;height:14px;line-height:14px;color:#000;font-family:'Liberation Mono',monospace;font-size:12px;letter-spacing:-1.2px">30330</div>
<div class="a t" style="left:683px;top:918px;height:14px;line-height:14px;color:#000;font-family:'Liberation Mono',monospace;font-size:12px;letter-spacing:-1.2px">1</div>
<div class="a t" style="left:772px;top:918px;height:14px;line-height:14px;color:#000;font-family:'Liberation Mono',monospace;font-size:12px;letter-spacing:-1.2px"><span class="c" style="width:12px">市</span><span class="c" style="width:12px">价</span></div>
<div class="a t" style="left:832px;top:918px;height:14px;line-height:14px;color:#000;font-family:'Liberation Mono',monospace;font-size:12px;letter-spacing:-1.2px">MACD<span class="c" style="width:12px">突</span><span class="c" style="width:12px">破</span><span class="c" style="width:12px">零</span><span class="c" style="width:12px">轴</span><span class="c" style="width:12px">价</span><span class="c" style="width:12px">格</span><span class="c" style="width:12px">预</span><span class="c" style="width:12px">测</span></div>
<div class="a t" style="left:995px;top:918px;height:14px;line-height:14px;color:#000;font-family:'Liberation Mono',monospace;font-size:12px;letter-spacing:-1.2px"><span class="c" style="width:12px">平</span><span class="c" style="width:12px">多</span></div>
<div class="a t" style="left:1145px;top:918px;height:14px;line-height:14px;color:#000;font-family:'Liberation Mono',monospace;font-size:12px;letter-spacing:-1.2px"><span class="c" style="width:12px">图</span><span class="c" style="width:12px">表</span></div>
<div class="a" style="left:397px;top:944px;width:803px;height:1px;background:#f0f0f0;"></div>
<div class="a" style="left:496px;top:932px;width:1px;height:13px;background:#f0f0f0;"></div>
<div class="a" style="left:616px;top:932px;width:1px;height:13px;background:#f0f0f0;"></div>
<div class="a" style="left:676px;top:932px;width:1px;height:13px;background:#f0f0f0;"></div>
<div class="a" style="left:766px;top:932px;width:1px;height:13px;background:#f0f0f0;"></div>
<div class="a" style="left:826px;top:932px;width:1px;height:13px;background:#f0f0f0;"></div>
<div class="a" style="left:989px;top:932px;width:1px;height:13px;background:#f0f0f0;"></div>
<div class="a" style="left:1049px;top:932px;width:1px;height:13px;background:#f0f0f0;"></div>
<div class="a" style="left:1139px;top:932px;width:1px;height:13px;background:#f0f0f0;"></div>
<div class="a" style="left:1199px;top:932px;width:1px;height:13px;background:#f0f0f0;"></div>
<div class="a t" style="left:400px;top:931px;height:14px;line-height:14px;color:#000;font-family:'Liberation Mono',monospace;font-size:12px;letter-spacing:-1.2px">HSI04 <span class="c" style="width:12px">恒</span><span class="c" style="width:12px">指</span>04</div>
<div class="a t" style="left:503px;top:931px;height:14px;line-height:14px;color:#000;font-family:'Liberation Mono',monospace;font-size:12px;letter-spacing:-1.2px">18/04/23 14:49:14</div>
<div class="a t" style="left:623px;top:931px;height:14px;line-height:14px;color:#000;font-family:'Liberation Mono',monospace;font-size:12px;letter-spacing:-1.2px">30334</div>
<div class="a t" style="left:683px;top:931px;height:14px;line-height:14px;color:#000;font-family:'Liberation Mono',monospace;font-size:12px;letter-spacing:-1.2px">1</div>
<div class="a t" style="left:772px;top:931px;height:14px;line-height:14px;color:#000;font-family:'Liberation Mono',monospace;font-size:12px;letter-spacing:-1.2px"><span class="c" style="width:12px">市</span><span class="c" style="width:12px">价</span></div>
<div class="a t" style="left:832px;top:931px;height:14px;line-height:14px;color:#000;font-family:'Liberation Mono',monospace;font-size:12px;letter-spacing:-1.2px">MACD<span class="c" style="width:12px">突</span><span class="c" style="width:12px">破</span><span class="c" style="width:12px">零</span><span class="c" style="width:12px">轴</span><span class="c" style="width:12px">价</span><span class="c" style="width:12px">格</span><span class="c" style="width:12px">预</span><span class="c" style="width:12px">测</span></div>
<div class="a t" style="left:995px;top:931px;height:14px;line-height:14px;color:#000;font-family:'Liberation Mono',monospace;font-size:12px;letter-spacing:-1.2px"><span class="c" style="width:12px">开</span><span class="c" style="width:12px">多</span></div>
<div class="a t" style="left:1145px;top:931px;height:14px;line-height:14px;color:#000;font-family:'Liberation Mono',monospace;font-size:12px;letter-spacing:-1.2px"><span class="c" style="width:12px">图</span><span class="c" style="width:12px">表</span></div>
<div class="a" style="left:397px;top:957px;width:803px;height:1px;background:#f0f0f0;"></div>
<div class="a" style="left:496px;top:945px;width:1px;height:13px;background:#f0f0f0;"></div>
<div class="a" style="left:616px;top:945px;width:1px;height:13px;background:#f0f0f0;"></div>
<div class="a" style="left:676px;top:945px;width:1px;height:13px;background:#f0f0f0;"></div>
<div class="a" style="left:766px;top:945px;width:1px;height:13px;background:#f0f0f0;"></div>
<div class="a" style="left:826px;top:945px;width:1px;height:13px;background:#f0f0f0;"></div>
<div class="a" style="left:989px;top:945px;width:1px;height:13px;background:#f0f0f0;"></div>
<div class="a" style="left:1049px;top:945px;width:1px;height:13px;background:#f0f0f0;"></div>
<div class="a" style="left:1139px;top:945px;width:1px;height:13px;background:#f0f0f0;"></div>
<div class="a" style="left:1199px;top:945px;width:1px;height:13px;background:#f0f0f0;"></div>
<div class="a t" style="left:400px;top:944px;height:14px;line-height:14px;color:#000;font-family:'Liberation Mono',monospace;font-size:12px;letter-spacing:-1.2px">HSI04 <span class="c" style="width:12px">恒</span><span class="c" style="width:12px">指</span>04</div>
<div class="a t" style="left:503px;top:944px;height:14px;line-height:14px;color:#000;font-family:'Liberation Mono',monospace;font-size:12px;letter-spacing:-1.2px">18/04/23 14:49:14</div>
<div class="a t" style="left:623px;top:944px;height:14px;line-height:14px;color:#000;font-family:'Liberation Mono',monospace;font-size:12px;letter-spacing:-1.2px">30334</div>
<div class="a t" style="left:683px;top:944px;height:14px;line-height:14px;color:#000;font-family:'Liberation Mono',monospace;font-size:12px;letter-spacing:-1.2px">1</div>
<div class="a t" style="left:772px;top:944px;height:14px;line-height:14px;color:#000;font-family:'Liberation Mono',monospace;font-size:12px;letter-spacing:-1.2px"><span class="c" style="width:12px">市</span><span class="c" style="width:12px">价</span></div>
<div class="a t" style="left:832px;top:944px;height:14px;line-height:14px;color:#000;font-family:'Liberation Mono',monospace;font-size:12px;letter-spacing:-1.2px">MACD<span class="c" style="width:12px">突</span><span class="c" style="width:12px">破</span><span class="c" style="width:12px">零</span><span class="c" style="width:12px">轴</span><span class="c" style="width:12px">价</span><span class="c" style="width:12px">格</span><span class="c" style="width:12px">预</span><span class="c" style="width:12px">测</span></div>
<div class="a t" style="left:995px;top:944px;height:14px;line-height:14px;color:#000;font-family:'Liberation Mono',monospace;font-size:12px;letter-spacing:-1.2px"><span class="c" style="width:12px">平</span><span class="c" style="width:12px">空</span></div>
<div class="a t" style="left:1145px;top:944px;height:14px;line-height:14px;color:#000;font-family:'Liberation Mono',monospace;font-size:12px;letter-spacing:-1.2px"><span class="c" style="width:12px">图</span><span class="c" style="width:12px">表</span></div>
<div class="a" style="left:397px;top:970px;width:803px;height:1px;background:#f0f0f0;"></div>
<div class="a" style="left:496px;top:958px;width:1px;height:13px;background:#f0f0f0;"></div>
<div class="a" style="left:616px;top:958px;width:1px;height:13px;background:#f0f0f0;"></div>
<div class="a" style="left:676px;top:958px;width:1px;height:13px;background:#f0f0f0;"></div>
<div class="a" style="left:766px;top:958px;width:1px;height:13px;background:#f0f0f0;"></div>
<div class="a" style="left:826px;top:958px;width:1px;height:13px;background:#f0f0f0;"></div>
<div class="a" style="left:989px;top:958px;width:1px;height:13px;background:#f0f0f0;"></div>
<div class="a" style="left:1049px;top:958px;width:1px;height:13px;background:#f0f0f0;"></div>
<div class="a" style="left:1139px;top:958px;width:1px;height:13px;background:#f0f0f0;"></div>
<div class="a" style="left:1199px;top:958px;width:1px;height:13px;background:#f0f0f0;"></div>
<div class="a t" style="left:400px;top:957px;height:14px;line-height:14px;color:#000;font-family:'Liberation Mono',monospace;font-size:12px;letter-spacing:-1.2px">HSI04 <span class="c" style="width:12px">恒</span><span class="c" style="width:12px">指</span>04</div>
<div class="a t" style="left:503px;top:957px;height:14px;line-height:14px;color:#000;font-family:'Liberation Mono',monospace;font-size:12px;letter-spacing:-1.2px">18/04/23 14:48:58</div>
<div class="a t" style="left:623px;top:957px;height:14px;line-height:14px;color:#000;font-family:'Liberation Mono',monospace;font-size:12px;letter-spacing:-1.2px">30331</div>
<div class="a t" style="left:683px;top:957px;height:14px;line-height:14px;color:#000;font-family:'Liberation Mono',monospace;font-size:12px;letter-spacing:-1.2px">1</div>
<div class="a t" style="left:772px;top:957px;height:14px;line-height:14px;color:#000;font-family:'Liberation Mono',monospace;font-size:12px;letter-spacing:-1.2px"><span class="c" style="width:12px">市</span><span class="c" style="width:12px">价</span></div>
<div class="a t" style="left:832px;top:957px;height:14px;line-height:14px;color:#000;font-family:'Liberation Mono',monospace;font-size:12px;letter-spacing:-1.2px">MACD<span class="c" style="width:12px">突</span><span class="c" style="width:12px">破</span><span class="c" style="width:12px">零</span><span class="c" style="width:12px">轴</span><span class="c" style="width:12px">价</span><span class="c" style="width:12px">格</span><span class="c" style="width:12px">预</span><span class="c" style="width:12px">测</span></div>
<div class="a t" style="left:995px;top:957px;height:14px;line-height:14px;color:#000;font-family:'Liberation Mono',monospace;font-size:12px;letter-spacing:-1.2px"><span class="c" style="width:12px">开</span><span class="c" style="width:12px">空</span></div>
<div class="a t" style="left:1145px;top:957px;height:14px;line-height:14px;color:#000;font-family:'Liberation Mono',monospace;font-size:12px;letter-spacing:-1.2px"><span class="c" style="width:12px">图</span><span class="c" style="width:12px">表</span></div>
<div class="a" style="left:391px;top:852px;width:269px;height:54px;box-sizing:border-box;border:3px solid #ec3030"></div>
<div class="a" style="left:8px;top:971px;width:1849px;height:17px;background:#f0f0f0;"></div>
<div class="a" style="left:25px;top:973px;width:1716px;height:13px;background:#cdcdcd;"></div>
<svg class="a" style="left:12px;top:974px" width="8" height="11"><path d="M7 1L2.5 5.5 7 10" stroke="#555" stroke-width="1.8" fill="none"/></svg>
<svg class="a" style="left:1828px;top:974px" width="8" height="11"><path d="M1 1l4.5 4.5L1 10" stroke="#555" stroke-width="1.8" fill="none"/></svg>
<svg class="a" style="left:1845px;top:976px" width="10" height="10"><g fill="#bbb"><rect x="7" y="1" width="2" height="2"/><rect x="4" y="4" width="2" height="2"/><rect x="7" y="4" width="2" height="2"/><rect x="1" y="7" width="2" height="2"/><rect x="4" y="7" width="2" height="2"/><rect x="7" y="7" width="2" height="2"/></g></svg>
<div class="a" style="left:60px;top:990px;width:1px;height:6px;background:#b8b8b8;"></div>
<div class="a" style="left:140px;top:990px;width:1px;height:6px;background:#b8b8b8;"></div>
<div class="a" style="left:194px;top:990px;width:1px;height:6px;background:#b8b8b8;"></div>
<div class="a" style="left:273px;top:990px;width:1px;height:6px;background:#b8b8b8;"></div>
<div class="a" style="left:354px;top:990px;width:1px;height:6px;background:#b8b8b8;"></div>
<div class="a" style="left:422px;top:990px;width:1px;height:6px;background:#b8b8b8;"></div>
<div class="a" style="left:505px;top:990px;width:1px;height:6px;background:#b8b8b8;"></div>
<div class="a" style="left:569px;top:990px;width:1px;height:6px;background:#b8b8b8;"></div>
<div class="a" style="left:613px;top:990px;width:1px;height:6px;background:#b8b8b8;"></div>
<div class="a" style="left:683px;top:990px;width:1px;height:6px;background:#b8b8b8;"></div>
<div class="a" style="left:760px;top:990px;width:1px;height:6px;background:#b8b8b8;"></div>
<div class="a" style="left:842px;top:990px;width:1px;height:6px;background:#b8b8b8;"></div>
<div class="a" style="left:912px;top:990px;width:1px;height:6px;background:#b8b8b8;"></div>
<div class="a" style="left:967px;top:990px;width:1px;height:6px;background:#b8b8b8;"></div>
<div class="a" style="left:1056px;top:990px;width:1px;height:6px;background:#b8b8b8;"></div>
<div class="a" style="left:1125px;top:990px;width:1px;height:6px;background:#b8b8b8;"></div>
<div class="a" style="left:1209px;top:990px;width:1px;height:6px;background:#b8b8b8;"></div>
<div class="a" style="left:1348px;top:990px;width:1px;height:6px;background:#b8b8b8;"></div>
<div class="a" style="left:359px;top:991px;width:60px;height:5px;background:#f8f8f8;"></div>
<div class="a" style="left:359px;top:991px;width:60px;height:5px;box-sizing:border-box;border:1px solid #3a7bd5;border-bottom:none"></div>
<div class="a" style="left:539px;top:402px;width:204px;height:267px;box-sizing:border-box;border:3px solid #f03c3c"></div>
</body></html>
